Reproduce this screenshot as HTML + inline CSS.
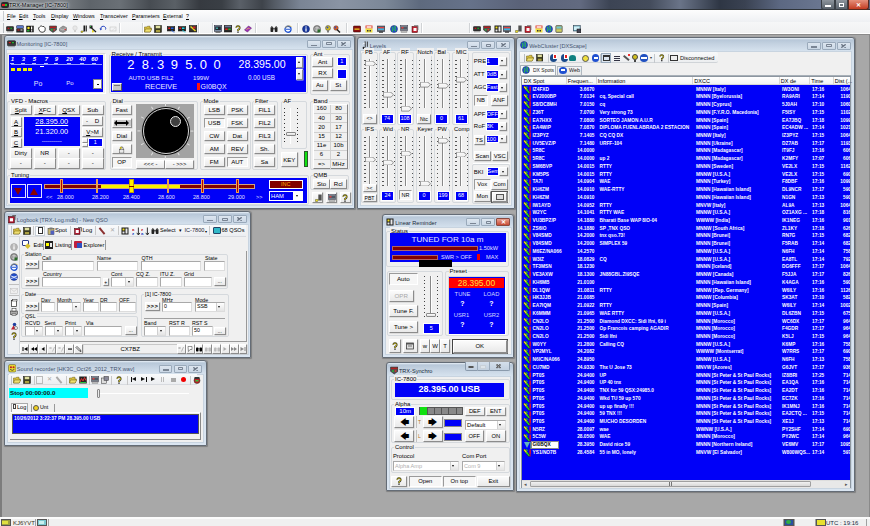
<!DOCTYPE html>
<html><head><meta charset="utf-8"><style>
html,body{margin:0;padding:0;width:870px;height:526px;overflow:hidden;background:#a8a8a8}
div{position:absolute;box-sizing:border-box}
.t{font-family:"Liberation Sans",sans-serif;white-space:nowrap;color:#000}
u{text-decoration:underline;text-decoration-thickness:0.5px;text-underline-offset:0.6px}
</style></head><body>
<div style="left:0px;top:0px;width:870px;height:526px;background:#a8a8a8;"></div>
<div style="left:0px;top:34px;width:1.8px;height:484px;background:#7c7c7c;"></div>
<div style="left:869px;top:34px;width:1px;height:484px;background:#8a8a8a;"></div>
<div style="left:0px;top:33.8px;width:870px;height:1.4px;background:linear-gradient(#7c7c7c,#989898);"></div>
<div style="left:0px;top:0px;width:870px;height:10px;background:linear-gradient(90deg,#868b90 0px,#7c8186 60px,#5e646a 90px,#6a7076 120px,#474c52 150px,#5a6066 175px,#363a40 200px,#3a3f45 222px,#5a6068 240px,#3e434a 262px,#555c66 275px,#7a8494 300px,#8a94a4 340px,#7c8898 385px,#5e6a7e 420px,#66728a 470px,#5a6278 520px,#626a80 580px,#3c4454 610px,#444c5c 650px,#6a7488 680px,#2e3644 720px,#3a4252 745px,#5c6882 780px,#6a7690 820px,#5a6680 870px);"></div>
<div style="left:0px;top:9px;width:870px;height:1px;background:#2e3338;"></div>
<div class="t" style="left:9px;top:0.5px;height:9px;line-height:9px;font-size:5.5px;color:#000;text-shadow:0 0 2px #f0f4f8,0 0 3px #e8ecf0,0 0 5px #c8d0d8">TRX-Manager [IC-7800]</div>
<div style="left:1px;top:2px;width:7.5px;height:6px;background:#2a2a2a;border-radius:2px;"></div>
<div style="left:2px;top:4px;width:2.5px;height:2px;background:#e02020;"></div>
<div style="left:4.5px;top:4px;width:2.5px;height:2px;background:#20c020;"></div>
<div style="left:821px;top:0px;width:14px;height:9.5px;background:linear-gradient(#8d949c,#5a636c);border:1px solid #3a3f45;border-top:none;border-radius:0 0 0 3px;box-sizing:border-box;"></div>
<div style="left:825px;top:5px;width:6px;height:1.5px;background:#fff;"></div>
<div style="left:835px;top:0px;width:13px;height:9.5px;background:linear-gradient(#8d949c,#5a636c);border:1px solid #3a3f45;border-top:none;box-sizing:border-box;"></div>
<div style="left:838.5px;top:3px;width:5px;height:4px;border:1px solid #fff;border-top-width:1.5px;box-sizing:border-box;"></div>
<div style="left:848px;top:0px;width:21px;height:9.5px;background:linear-gradient(#e5907c,#c43c22);border:1px solid #5a2a20;border-top:none;border-radius:0 0 3px 0;box-sizing:border-box;"></div>
<div class="t" style="left:848px;top:-0.5px;width:21px;height:10px;line-height:10px;text-align:center;font-size:6px;color:#fff;font-weight:bold;">✕</div>
<div style="left:0px;top:10px;width:870px;height:12px;background:linear-gradient(#fdfdfd,#eef0f3);"></div>
<div style="left:0px;top:21.5px;width:870px;height:1px;background:#d6dbe0;"></div>
<div style="left:2.5px;top:11px;width:1px;height:10px;background:#c8ccd0;"></div>
<div class="t" style="left:7px;top:11px;width:60px;height:11px;line-height:11px;text-align:left;font-size:5.35px;color:#000;white-space:nowrap;"><u>F</u>ile</div>
<div class="t" style="left:19px;top:11px;width:60px;height:11px;line-height:11px;text-align:left;font-size:5.35px;color:#000;white-space:nowrap;"><u>E</u>dit</div>
<div class="t" style="left:33px;top:11px;width:60px;height:11px;line-height:11px;text-align:left;font-size:5.35px;color:#000;white-space:nowrap;"><u>T</u>ools</div>
<div class="t" style="left:51px;top:11px;width:60px;height:11px;line-height:11px;text-align:left;font-size:5.35px;color:#000;white-space:nowrap;"><u>D</u>isplay</div>
<div class="t" style="left:73px;top:11px;width:60px;height:11px;line-height:11px;text-align:left;font-size:5.35px;color:#000;white-space:nowrap;"><u>W</u>indows</div>
<div class="t" style="left:100px;top:11px;width:60px;height:11px;line-height:11px;text-align:left;font-size:5.35px;color:#000;white-space:nowrap;"><u>T</u>ransceiver</div>
<div class="t" style="left:132px;top:11px;width:60px;height:11px;line-height:11px;text-align:left;font-size:5.35px;color:#000;white-space:nowrap;"><u>P</u>arameters</div>
<div class="t" style="left:163px;top:11px;width:60px;height:11px;line-height:11px;text-align:left;font-size:5.35px;color:#000;white-space:nowrap;"><u>E</u>xternal</div>
<div class="t" style="left:186px;top:11px;width:60px;height:11px;line-height:11px;text-align:left;font-size:5.35px;color:#000;white-space:nowrap;"><u>?</u></div>
<div style="left:0px;top:22px;width:870px;height:11px;background:linear-gradient(#f6f7f8,#f0f1f2);"></div>
<div style="left:0px;top:32.8px;width:870px;height:1px;background:#ffffff;"></div>
<div style="left:118.5px;top:23px;width:1px;height:10px;background:#d0d3d6;"></div>
<div style="left:119.5px;top:23px;width:1px;height:10px;background:#fff;"></div>
<div style="left:141.5px;top:23px;width:1px;height:10px;background:#d0d3d6;"></div>
<div style="left:142.5px;top:23px;width:1px;height:10px;background:#fff;"></div>
<div style="left:198px;top:23px;width:1px;height:10px;background:#d0d3d6;"></div>
<div style="left:199px;top:23px;width:1px;height:10px;background:#fff;"></div>
<div style="left:211.5px;top:23px;width:1px;height:10px;background:#d0d3d6;"></div>
<div style="left:212.5px;top:23px;width:1px;height:10px;background:#fff;"></div>
<div style="left:254.5px;top:23px;width:1px;height:10px;background:#d0d3d6;"></div>
<div style="left:255.5px;top:23px;width:1px;height:10px;background:#fff;"></div>
<div style="left:296.5px;top:23px;width:1px;height:10px;background:#d0d3d6;"></div>
<div style="left:297.5px;top:23px;width:1px;height:10px;background:#fff;"></div>
<div style="left:345.5px;top:23px;width:1px;height:10px;background:#d0d3d6;"></div>
<div style="left:346.5px;top:23px;width:1px;height:10px;background:#fff;"></div>
<div style="left:420.5px;top:23px;width:1px;height:10px;background:#d0d3d6;"></div>
<div style="left:421.5px;top:23px;width:1px;height:10px;background:#fff;"></div>
<div style="left:469px;top:23px;width:1px;height:10px;background:#d0d3d6;"></div>
<div style="left:470px;top:23px;width:1px;height:10px;background:#fff;"></div>
<div style="left:3px;top:23px;width:1px;height:10px;background:#b8bcc0;"></div>
<svg style="position:absolute;left:6px;top:24.5px" width="8" height="8" viewBox="0 0 16 16"><rect x="0.5" y="3" width="15" height="9" rx="2" fill="#3a3a3a" stroke="#111"/><rect x="2" y="5" width="12" height="3" fill="#202020"/><rect x="3" y="5.5" width="4" height="2" fill="#e82020"/><rect x="8.5" y="5.5" width="4" height="2" fill="#20c030"/><rect x="2" y="13" width="12" height="1.5" fill="#999"/></svg>
<svg style="position:absolute;left:16px;top:24.5px" width="8" height="8" viewBox="0 0 16 16"><rect x="1" y="1" width="14" height="6" rx="1.5" fill="#5a78c8" stroke="#223"/><rect x="0.5" y="7" width="15" height="8" rx="1" fill="#2a2a2a"/><rect x="3" y="9" width="4" height="2" fill="#e82020"/><rect x="9" y="9" width="4" height="2" fill="#e0e0e0"/></svg>
<svg style="position:absolute;left:26px;top:24.5px" width="8" height="8" viewBox="0 0 16 16"><rect x="0.5" y="1.5" width="15" height="13" fill="#1a1a1a"/><circle cx="5" cy="6" r="2.5" fill="#f0e020"/><rect x="10" y="3" width="2.5" height="6" fill="#fff"/><rect x="10" y="10.5" width="2.5" height="2.5" fill="#fff"/><rect x="2" y="10" width="5" height="3" fill="#20a030"/></svg>
<svg style="position:absolute;left:38px;top:24.5px" width="8" height="8" viewBox="0 0 16 16"><path d="M3 4 L6 1.5 L9 3 L12 3 L14.5 6 L14 12 L10 14.5 L5 14 L2 10 L1 6 Z" fill="#fff" stroke="#111" stroke-width="1.5"/></svg>
<svg style="position:absolute;left:49px;top:24.5px" width="8" height="8" viewBox="0 0 16 16"><path d="M1 2 L15 2 L15 10 L8 15 L1 10 Z" fill="#505050" stroke="#222"/><rect x="2" y="3" width="12" height="3" fill="#b02020"/><rect x="4" y="8" width="3" height="3" fill="#20c030"/><rect x="9" y="8" width="3" height="3" fill="#e03030"/></svg>
<svg style="position:absolute;left:59px;top:24.5px" width="8" height="8" viewBox="0 0 16 16"><path d="M1 7 L8 2 L15 5 L15 11 L8 15 L1 12 Z" fill="#9a9a9a" stroke="#555"/><path d="M1 7 L8 10 L15 5" fill="none" stroke="#ddd"/><circle cx="12.5" cy="9" r="1.5" fill="#e03030"/></svg>
<svg style="position:absolute;left:70.5px;top:24.5px" width="8" height="8" viewBox="0 0 16 16"><circle cx="8" cy="6" r="4.5" fill="#e8e8e8" stroke="#c8c8c8"/><rect x="6" y="10" width="4" height="4" fill="#d0d0d0"/></svg>
<svg style="position:absolute;left:80px;top:24.5px" width="8" height="8" viewBox="0 0 16 16"><rect x="7" y="1" width="3" height="12" fill="#1a1a1a"/><rect x="11" y="1" width="3" height="12" fill="#444"/><path d="M2 12 L7 12 L5 15 L2 15Z" fill="#f0e020" stroke="#553"/></svg>
<svg style="position:absolute;left:89px;top:24.5px" width="8" height="8" viewBox="0 0 16 16"><rect x="1" y="1" width="6" height="6" fill="#222"/><rect x="2" y="2" width="2" height="2" fill="#20c030"/><path d="M5 6 L14 14" stroke="#222" stroke-width="2.5"/><path d="M6 9 L11 14 L6 15 Z" fill="#e8d820"/></svg>
<svg style="position:absolute;left:98.5px;top:24.5px" width="8" height="8" viewBox="0 0 16 16"><path d="M4 9 A5 4.5 0 1 1 13 9" fill="none" stroke="#2040c0" stroke-width="2"/><path d="M1 7 L6 7 L3.5 11Z" fill="#2040c0"/></svg>
<svg style="position:absolute;left:109px;top:24.5px" width="8" height="8" viewBox="0 0 16 16"><rect x="2" y="4" width="12" height="8" fill="none" stroke="#bbb"/><path d="M5 12 L12 6" stroke="#ccc"/></svg>
<svg style="position:absolute;left:144px;top:24.5px" width="8" height="8" viewBox="0 0 16 16"><path d="M1 4 L6 4 L7 2.5 L12 2.5 L12 6 L15 6 L12 14 L1 14 Z" fill="#d8c040" stroke="#6a5a10"/><path d="M3 8 L15.5 8 L12.5 14 L1 14 Z" fill="#f0e070" stroke="#6a5a10"/></svg>
<svg style="position:absolute;left:153.5px;top:24.5px" width="8" height="8" viewBox="0 0 16 16"><rect x="1" y="1" width="14" height="14" fill="#3a3a20" stroke="#111"/><rect x="3.5" y="1.5" width="9" height="5" fill="#e0e0a0"/><rect x="4" y="10" width="8" height="4.5" fill="#aaa040"/></svg>
<svg style="position:absolute;left:167px;top:24.5px" width="8" height="8" viewBox="0 0 16 16"><rect x="0.5" y="3" width="15" height="9" fill="#222" stroke="#111"/><rect x="2.5" y="5" width="4" height="3" fill="#e02020"/><rect x="8" y="5" width="5" height="3" fill="#2060e0"/><path d="M9 10 L14 15" stroke="#2060e0" stroke-width="2"/></svg>
<svg style="position:absolute;left:178px;top:24.5px" width="8" height="8" viewBox="0 0 16 16"><rect x="0.5" y="3" width="15" height="9" fill="#222" stroke="#111"/><rect x="2.5" y="5" width="4" height="3" fill="#e02020"/><rect x="8" y="5" width="5" height="3" fill="#20d0e0"/><path d="M9 10 L14 15" stroke="#20d0e0" stroke-width="2"/></svg>
<svg style="position:absolute;left:188.5px;top:24.5px" width="8" height="8" viewBox="0 0 16 16"><rect x="0.5" y="1" width="15" height="13" fill="#303030" stroke="#111"/><path d="M3 3 L13 12" stroke="#e8d020" stroke-width="3"/><rect x="8" y="3" width="5" height="4" fill="#d02020"/></svg>
<svg style="position:absolute;left:214px;top:24.5px" width="8" height="8" viewBox="0 0 16 16"><rect x="0.5" y="1" width="15" height="12" fill="#7a8aa0" stroke="#223"/><rect x="2.5" y="3" width="11" height="7" fill="#202830"/><rect x="4" y="5" width="4" height="3" fill="#40a0a0"/><rect x="3" y="13.5" width="10" height="2" fill="#555"/></svg>
<svg style="position:absolute;left:224px;top:24.5px" width="8" height="8" viewBox="0 0 16 16"><rect x="0.5" y="1" width="15" height="13" fill="#2a2a2a" stroke="#111"/><rect x="2" y="2.5" width="12" height="2" fill="#8090c0"/><rect x="2.5" y="7" width="5" height="3" fill="#e02020"/><rect x="8.5" y="7" width="5" height="3" fill="#20b030"/></svg>
<svg style="position:absolute;left:234px;top:24.5px" width="8" height="8" viewBox="0 0 16 16"><path d="M4.5 5.5 A3.5 3.5 0 1 1 10 8.5 L8 10 L8 12" fill="none" stroke="#222" stroke-width="3.2"/><path d="M4.5 5.5 A3.5 3.5 0 1 1 10 8.5 L8 10 L8 12" fill="none" stroke="#f0e020" stroke-width="1.6"/><rect x="6.5" y="13" width="3" height="2.5" fill="#222"/></svg>
<svg style="position:absolute;left:244px;top:24.5px" width="8" height="8" viewBox="0 0 16 16"><path d="M1 10 L9 2 L15 6 L7 14 Z" fill="#a030b8" stroke="#501060"/><path d="M5 9 L9 6 L11 8" fill="none" stroke="#f0e040" stroke-width="1.5"/></svg>
<svg style="position:absolute;left:270px;top:24.5px" width="8" height="8" viewBox="0 0 16 16"><rect x="1" y="4" width="5.5" height="10" rx="1.5" fill="#222"/><rect x="9.5" y="4" width="5.5" height="10" rx="1.5" fill="#222"/><rect x="6" y="6" width="4" height="3" fill="#555"/><rect x="2" y="2" width="3" height="3" fill="#777"/><rect x="11" y="2" width="3" height="3" fill="#777"/></svg>
<svg style="position:absolute;left:284px;top:24.5px" width="8" height="8" viewBox="0 0 16 16"><circle cx="8" cy="8.5" r="6" fill="#fff" stroke="#1a50d0" stroke-width="2.6"/><rect x="4" y="7.5" width="8" height="2" fill="#1a50d0"/><path d="M2 5 Q8 -1 15 3" fill="none" stroke="#e0b020" stroke-width="1.2"/></svg>
<svg style="position:absolute;left:302px;top:24.5px" width="8" height="8" viewBox="0 0 16 16"><circle cx="8" cy="8" r="7" fill="#1a3aa0" stroke="#0a1a60"/><rect x="6.8" y="6.5" width="2.4" height="6.5" fill="#fff"/><circle cx="8" cy="4" r="1.4" fill="#fff"/></svg>
<svg style="position:absolute;left:313px;top:24.5px" width="8" height="8" viewBox="0 0 16 16"><circle cx="8" cy="8" r="7" fill="#888" stroke="#333"/><path d="M1 8 L15 8 M8 1 L8 15 M3 4 Q8 7 13 4 M3 12 Q8 9 13 12" fill="none" stroke="#eee" stroke-width="1"/><rect x="9" y="9" width="6" height="6" fill="#2a6a2a"/></svg>
<svg style="position:absolute;left:323.5px;top:24.5px" width="8" height="8" viewBox="0 0 16 16"><circle cx="8" cy="6" r="5" fill="#d8c020" stroke="#444"/><circle cx="7" cy="5" r="2" fill="#3050c0"/><rect x="6.5" y="11" width="3" height="4" fill="#555"/></svg>
<svg style="position:absolute;left:333px;top:24.5px" width="8" height="8" viewBox="0 0 16 16"><circle cx="6" cy="6" r="4.5" fill="#e06020" stroke="#533"/><circle cx="5" cy="5" r="1.8" fill="#3050c0"/><path d="M8 9 L14 15" stroke="#222" stroke-width="3"/></svg>
<svg style="position:absolute;left:353px;top:24.5px" width="8" height="8" viewBox="0 0 16 16"><rect x="0.5" y="2" width="15" height="12" rx="2" fill="#8a1010" stroke="#300"/><rect x="3" y="7" width="10" height="2.5" fill="#f0d020"/></svg>
<svg style="position:absolute;left:365px;top:24.5px" width="8" height="8" viewBox="0 0 16 16"><rect x="1" y="1" width="14" height="6" fill="#e04030"/><rect x="1" y="7" width="14" height="8" fill="#f0e040"/><rect x="3" y="2.5" width="10" height="3" fill="#fff"/><rect x="4" y="10" width="3" height="3" fill="#333"/><rect x="9" y="10" width="3" height="3" fill="#333"/></svg>
<svg style="position:absolute;left:377px;top:24.5px" width="8" height="8" viewBox="0 0 16 16"><rect x="0.5" y="2" width="15" height="11" fill="#60707a" stroke="#223"/><rect x="2" y="4" width="12" height="3" fill="#e04040"/><rect x="2" y="7" width="12" height="3" fill="#40b0e0"/><rect x="4" y="13" width="8" height="2.5" fill="#333"/></svg>
<svg style="position:absolute;left:390px;top:24.5px" width="8" height="8" viewBox="0 0 16 16"><circle cx="8" cy="8" r="7" fill="#2050d0" stroke="#102060"/><path d="M4 4 Q7 6 6 9 Q4 11 5 13 M9 2 Q12 5 10 8 Q9 10 12 12" fill="none" stroke="#30c040" stroke-width="2.2"/></svg>
<svg style="position:absolute;left:400px;top:24.5px" width="8" height="8" viewBox="0 0 16 16"><rect x="0.5" y="1" width="15" height="10" fill="#9aa0a8" stroke="#334"/><rect x="2" y="3" width="12" height="6" fill="#505a66"/><rect x="3" y="4" width="4" height="3" fill="#e04040"/><rect x="2" y="12" width="12" height="3" fill="#ccc" stroke="#555" stroke-width="0.6"/></svg>
<svg style="position:absolute;left:411px;top:24.5px" width="8" height="8" viewBox="0 0 16 16"><rect x="2" y="3" width="11" height="12" fill="#c02030" stroke="#400"/><rect x="5" y="6" width="6" height="6" fill="#f8f8f8"/><path d="M6 1 L14 1 L14 10" fill="none" stroke="#777" stroke-width="1.5"/></svg>
<svg style="position:absolute;left:473px;top:24.5px" width="8" height="8" viewBox="0 0 16 16"><rect x="0.5" y="3" width="15" height="9" rx="2" fill="#3a3a3a" stroke="#111"/><rect x="2" y="5" width="12" height="3" fill="#202020"/><rect x="3" y="5.5" width="4" height="2" fill="#e82020"/><rect x="8.5" y="5.5" width="4" height="2" fill="#20c030"/><rect x="2" y="13" width="12" height="1.5" fill="#999"/></svg>
<svg style="position:absolute;left:483px;top:24.5px" width="8" height="8" viewBox="0 0 16 16"><path d="M1 2 L15 2 L15 10 L8 15 L1 10 Z" fill="#505050" stroke="#222"/><rect x="2" y="3" width="12" height="3" fill="#b02020"/><rect x="4" y="8" width="3" height="3" fill="#20c030"/><rect x="9" y="8" width="3" height="3" fill="#e03030"/></svg>
<svg style="position:absolute;left:494px;top:24.5px" width="8" height="8" viewBox="0 0 16 16"><rect x="1" y="1" width="14" height="14" fill="#1a1a1a"/><rect x="3" y="3" width="4" height="4" fill="#f0e020"/><rect x="9" y="3" width="4" height="10" fill="#e8e8e8"/><rect x="3" y="9" width="4" height="4" fill="#e8e8e8"/></svg>
<svg style="position:absolute;left:503px;top:24.5px" width="8" height="8" viewBox="0 0 16 16"><rect x="0.5" y="2" width="15" height="11" fill="#60707a" stroke="#223"/><rect x="2" y="4" width="12" height="3" fill="#e04040"/><rect x="2" y="7" width="12" height="3" fill="#40b0e0"/><rect x="4" y="13" width="8" height="2.5" fill="#333"/></svg>
<svg style="position:absolute;left:513.5px;top:24.5px" width="8" height="8" viewBox="0 0 16 16"><rect x="9" y="1" width="2.5" height="12" fill="#1a1a1a"/><rect x="12.5" y="1" width="2.5" height="12" fill="#1a1a1a"/><path d="M3 11 L9 11 L7 15 L3 15Z" fill="#f0e020" stroke="#553"/></svg>
<svg style="position:absolute;left:524px;top:24.5px" width="8" height="8" viewBox="0 0 16 16"><rect x="2" y="3" width="11" height="12" fill="#c02030" stroke="#400"/><rect x="5" y="6" width="6" height="6" fill="#f8f8f8"/><path d="M6 1 L14 1 L14 10" fill="none" stroke="#777" stroke-width="1.5"/></svg>
<svg style="position:absolute;left:535px;top:24.5px" width="8" height="8" viewBox="0 0 16 16"><rect x="1" y="1" width="14" height="6" fill="#e04030"/><rect x="1" y="7" width="14" height="8" fill="#f0e040"/><rect x="3" y="2.5" width="10" height="3" fill="#fff"/><rect x="4" y="10" width="3" height="3" fill="#333"/><rect x="9" y="10" width="3" height="3" fill="#333"/></svg>
<svg style="position:absolute;left:545px;top:24.5px" width="8" height="8" viewBox="0 0 16 16"><circle cx="8" cy="8" r="7" fill="#2050d0" stroke="#102060"/><path d="M4 4 Q7 6 6 9 Q4 11 5 13 M9 2 Q12 5 10 8 Q9 10 12 12" fill="none" stroke="#30c040" stroke-width="2.2"/></svg>
<svg style="position:absolute;left:555px;top:24.5px" width="8" height="8" viewBox="0 0 16 16"><rect x="1.5" y="1" width="13" height="14" rx="2" fill="#a0a060" stroke="#333"/><rect x="3" y="3" width="10" height="4" fill="#70c8d0"/><rect x="3" y="9" width="10" height="4" fill="#d0d060"/></svg>
<svg style="position:absolute;left:573px;top:24.5px" width="8" height="8" viewBox="0 0 16 16"><rect x="0.5" y="1" width="14" height="11" fill="#70a8b8" stroke="#234"/><rect x="2" y="3" width="11" height="7" fill="#d0f0f8"/><rect x="8" y="8" width="7.5" height="7.5" fill="#445" stroke="#111"/></svg>
<div style="left:0px;top:516.7px;width:870px;height:2px;background:#fbfbfb;"></div>
<div style="left:0px;top:518.5px;width:870px;height:7.5px;background:#f0f0f0;"></div>
<div style="left:0.5px;top:519px;width:10px;height:7px;border:1px solid #555;background:#a0a040;"></div>
<div style="left:2px;top:520.5px;width:6px;height:3px;background:#e0e040;"></div>
<div class="t" style="left:13px;top:518.5px;width:30px;height:8px;line-height:8px;text-align:left;font-size:6px;color:#3a3020;">KJ6YVT</div>
<div style="left:34.5px;top:519px;width:0.8px;height:7px;background:#a0a0a0;"></div>
<div style="left:37px;top:519px;width:10px;height:7px;border:1px solid #555;background:#7cc8d0;"></div>
<div style="left:39px;top:520.5px;width:5px;height:3px;background:#c8f0f0;"></div>
<div style="left:48px;top:519px;width:0.8px;height:7px;background:#a0a0a0;"></div>
<div style="left:783px;top:519px;width:0.8px;height:7px;background:#a0a0a0;"></div>
<div style="left:784px;top:519px;width:10px;height:7px;border:0.8px solid #555;background:#2a50a0;"></div>
<div style="left:786px;top:520px;width:5px;height:4px;background:#30b040;border-radius:50%;"></div>
<div style="left:794px;top:519px;width:0.8px;height:7px;background:#a0a0a0;"></div>
<div style="left:815px;top:519px;width:0.8px;height:7px;background:#a0a0a0;"></div>
<div style="left:816px;top:519px;width:9.5px;height:7px;border:0.8px solid #555;background:#e8e030;"></div>
<div class="t" style="left:826px;top:518.5px;width:40px;height:8px;line-height:8px;text-align:left;font-size:6px;color:#202a40;">UTC : 19:16</div>
<div style="left:866px;top:519px;width:0.8px;height:7px;background:#a0a0a0;"></div>
<div style="left:3.7px;top:35.3px;width:351.5px;height:173.7px;border:0.8px solid #646c76;border-radius:3px 3px 1px 1px;background:linear-gradient(#dce6f0 0px,#dce6f0 0.8px,#b7c7d8 1.8px,#c4d2e1 6px,#d6e2ee 13px,#dae5f1 100%);box-shadow:0.5px 0.5px 1px rgba(0,0,0,.25);"></div>
<div style="left:6.300000000000001px;top:48.699999999999996px;width:346.3px;height:157.7px;background:#f0f0f0;border:0.5px solid #c8d4e0;"></div>
<svg style="position:absolute;left:7.2px;top:39.3px" width="9" height="9" viewBox="0 0 16 16"><rect x="0.5" y="3" width="15" height="9" rx="2" fill="#3a3a3a" stroke="#111"/><rect x="2" y="5" width="12" height="3" fill="#202020"/><rect x="3" y="5.5" width="4" height="2" fill="#e82020"/><rect x="8.5" y="5.5" width="4" height="2" fill="#20c030"/><rect x="2" y="13" width="12" height="1.5" fill="#999"/></svg>
<div class="t" style="left:16.5px;top:39.9px;height:9px;line-height:9px;font-size:5.6px;color:#465470;white-space:nowrap">Monitoring [IC-7800]</div>
<div style="left:307.2px;top:39.599999999999994px;width:13.8px;height:8px;background:linear-gradient(#dde6f0,#cad7e5);border:0.8px solid #9aaabb;border-radius:1px;"></div>
<div style="left:311.2px;top:44.5px;width:6px;height:1.2px;background:#7a8594;"></div>
<div style="left:322.09999999999997px;top:39.599999999999994px;width:13.8px;height:8px;background:linear-gradient(#dde6f0,#cad7e5);border:0.8px solid #9aaabb;border-radius:1px;"></div>
<div style="left:326.4px;top:41.9px;width:5.5px;height:3.2px;border:1px solid #7a8594;border-radius:0.8px;"></div>
<div style="left:337.0px;top:39.599999999999994px;width:13.8px;height:8px;background:linear-gradient(#dde6f0,#cad7e5);border:0.8px solid #9aaabb;border-radius:1px;"></div>
<svg style="position:absolute;left:341.4px;top:41.599999999999994px" width="5" height="4" viewBox="0 0 5 4"><path d="M0.3 0.3 L4.7 3.7 M4.7 0.3 L0.3 3.7" stroke="#6a7584" stroke-width="1.3"/></svg>
<div style="left:7px;top:53px;width:98.5px;height:41px;border:1px solid #d8d8d8;border-right-color:#fff;border-bottom-color:#fff;"></div>
<div style="left:9px;top:55px;width:94px;height:37px;background:#0000f8;"></div>
<div class="t" style="left:8px;top:55.5px;width:9px;height:7px;line-height:7px;text-align:center;font-size:6px;color:#fff;font-style:italic;font-weight:bold;">1</div>
<div style="left:10px;top:63px;width:4px;height:1.2px;background:#b0b8ff;"></div>
<div class="t" style="left:19px;top:55.5px;width:9px;height:7px;line-height:7px;text-align:center;font-size:6px;color:#fff;font-style:italic;font-weight:bold;">3</div>
<div style="left:21px;top:63px;width:4px;height:1.2px;background:#b0b8ff;"></div>
<div class="t" style="left:30px;top:55.5px;width:9px;height:7px;line-height:7px;text-align:center;font-size:6px;color:#fff;font-style:italic;font-weight:bold;">5</div>
<div style="left:32px;top:63px;width:4px;height:1.2px;background:#b0b8ff;"></div>
<div class="t" style="left:42px;top:55.5px;width:9px;height:7px;line-height:7px;text-align:center;font-size:6px;color:#fff;font-style:italic;font-weight:bold;">7</div>
<div style="left:44px;top:63px;width:4px;height:1.2px;background:#b0b8ff;"></div>
<div class="t" style="left:52px;top:55.5px;width:9px;height:7px;line-height:7px;text-align:center;font-size:6px;color:#fff;font-style:italic;font-weight:bold;">9</div>
<div style="left:54px;top:63px;width:4px;height:1.2px;background:#b0b8ff;"></div>
<div class="t" style="left:65px;top:55.5px;width:9px;height:7px;line-height:7px;text-align:center;font-size:6px;color:#fff;font-style:italic;font-weight:bold;">20</div>
<div style="left:67px;top:63px;width:4px;height:1.2px;background:#b0b8ff;"></div>
<div class="t" style="left:78px;top:55.5px;width:9px;height:7px;line-height:7px;text-align:center;font-size:6px;color:#fff;font-style:italic;font-weight:bold;">40</div>
<div style="left:80px;top:63px;width:4px;height:1.2px;background:#b0b8ff;"></div>
<div class="t" style="left:90px;top:55.5px;width:9px;height:7px;line-height:7px;text-align:center;font-size:6px;color:#fff;font-style:italic;font-weight:bold;">60</div>
<div style="left:92px;top:63px;width:4px;height:1.2px;background:#b0b8ff;"></div>
<div style="left:11px;top:64px;width:91px;height:0.6px;background:#9098ff;"></div>
<div style="left:40px;top:65.5px;width:4px;height:1px;background:#fff;"></div>
<div style="left:11px;top:68px;width:4px;height:3px;background:#f0f000;"></div>
<div style="left:17px;top:68px;width:4px;height:3px;background:#f0f000;"></div>
<div style="left:22.5px;top:68px;width:4px;height:3px;background:#f0f000;"></div>
<div style="left:28px;top:68px;width:4px;height:3px;background:#f0f000;"></div>
<div class="t" style="left:30px;top:79px;width:16px;height:9px;line-height:9px;text-align:center;font-size:7px;color:#e0e0ff;">Po</div>
<div class="t" style="left:63px;top:79px;width:14px;height:9px;line-height:9px;text-align:center;font-size:6px;color:#e0e0ff;">Po</div>
<div style="left:93px;top:79px;width:9px;height:10px;background:#fff;border:1px solid #888;"></div>
<div style="left:96.5px;top:84px;width:2.5px;height:1px;background:#111;"></div>
<div style="left:108.5px;top:54px;width:199px;height:40px;border:1px solid #d5d9dd;border-radius:2px;box-sizing:border-box;"></div>
<div class="t" style="left:110.5px;top:50px;height:8px;line-height:8px;padding:0 1px;background:#f0f0f0;font-size:6.1px;color:#000">Receive / Transmit</div>
<div style="left:111px;top:56px;width:195px;height:35.5px;background:#0000f8;"></div>
<div class="t" style="left:127.30000000000001px;top:56.5px;width:10px;height:16px;line-height:16px;text-align:left;font-size:13px;color:#fff;">2</div>
<div class="t" style="left:141.8px;top:56.5px;width:10px;height:16px;line-height:16px;text-align:left;font-size:13px;color:#fff;">8</div>
<div class="t" style="left:157.0px;top:56.5px;width:10px;height:16px;line-height:16px;text-align:left;font-size:13px;color:#fff;">3</div>
<div class="t" style="left:170.8px;top:56.5px;width:10px;height:16px;line-height:16px;text-align:left;font-size:13px;color:#fff;">9</div>
<div class="t" style="left:185.3px;top:56.5px;width:10px;height:16px;line-height:16px;text-align:left;font-size:13px;color:#fff;">5</div>
<div class="t" style="left:199.70000000000002px;top:56.5px;width:10px;height:16px;line-height:16px;text-align:left;font-size:13px;color:#fff;">0</div>
<div class="t" style="left:213.5px;top:56.5px;width:10px;height:16px;line-height:16px;text-align:left;font-size:13px;color:#fff;">0</div>
<div class="t" style="left:150.3px;top:56.5px;width:5px;height:16px;line-height:16px;text-align:left;font-size:13px;color:#fff;">.</div>
<div class="t" style="left:193.0px;top:56.5px;width:5px;height:16px;line-height:16px;text-align:left;font-size:13px;color:#fff;">.</div>
<div class="t" style="left:238.5px;top:58.5px;width:50px;height:11px;line-height:11px;text-align:left;font-size:10.6px;color:#fff;">28.395.00</div>
<div class="t" style="left:128.5px;top:74px;width:50px;height:7px;line-height:7px;text-align:left;font-size:6.1px;color:#e8e8ff;">AUTO USB FIL2</div>
<div class="t" style="left:193px;top:74px;width:20px;height:7px;line-height:7px;text-align:left;font-size:6.1px;color:#e8e8ff;">199W</div>
<div class="t" style="left:248px;top:73.5px;width:30px;height:7px;line-height:7px;text-align:left;font-size:6.3px;color:#e8e8ff;">0.00 USB</div>
<div style="left:112px;top:82.5px;width:10px;height:8px;background:#c8c8c8;border:1px solid #fff;border-right-color:#555;border-bottom-color:#555;"></div>
<div style="left:114px;top:84.5px;width:6px;height:1px;background:#777;"></div>
<div class="t" style="left:145px;top:82.5px;width:40px;height:8px;line-height:8px;text-align:left;font-size:7.3px;color:#f0f0ff;">RECEIVE</div>
<div style="left:197px;top:83px;width:2.5px;height:6.5px;background:#ff1010;"></div>
<div class="t" style="left:200.5px;top:82.5px;width:30px;height:8px;line-height:8px;text-align:left;font-size:7px;color:#f0f0ff;">GI0BQX</div>
<div style="left:296px;top:57px;width:7px;height:11px;background:linear-gradient(#fbfbfb,#e9e9e9);border-top:1px solid #fff;border-left:1px solid #fff;border-right:1px solid #8c8c8c;border-bottom:1px solid #8c8c8c;box-shadow:0.5px 0.5px 0 #c8c8c8;box-sizing:border-box;"></div>
<div style="left:298px;top:61px;width:0;height:0;border-left:1.5px solid transparent;border-right:1.5px solid transparent;border-bottom:2px solid #111"></div>
<div style="left:296px;top:68.5px;width:7px;height:11px;background:linear-gradient(#fbfbfb,#e9e9e9);border-top:1px solid #fff;border-left:1px solid #fff;border-right:1px solid #8c8c8c;border-bottom:1px solid #8c8c8c;box-shadow:0.5px 0.5px 0 #c8c8c8;box-sizing:border-box;"></div>
<div style="left:298px;top:73px;width:0;height:0;border-left:1.5px solid transparent;border-right:1.5px solid transparent;border-top:2px solid #111"></div>
<div style="left:309.5px;top:53.5px;width:40px;height:41px;border:1px solid #d5d9dd;border-radius:2px;box-sizing:border-box;"></div>
<div class="t" style="left:312.5px;top:49.5px;height:8px;line-height:8px;padding:0 1px;background:#f0f0f0;font-size:6px;color:#000">Ant</div>
<div style="left:312px;top:57px;width:21px;height:10px;background:linear-gradient(#fbfbfb,#e9e9e9);border-top:1px solid #fff;border-left:1px solid #fff;border-right:1px solid #8c8c8c;border-bottom:1px solid #8c8c8c;box-shadow:0.5px 0.5px 0 #c8c8c8;box-sizing:border-box;"></div>
<div class="t" style="left:312px;top:57.4px;width:21px;height:10px;line-height:10px;text-align:center;font-size:6.1px;color:#000;">Ant</div>
<div style="left:337px;top:57px;width:9.5px;height:9px;background:#0000f8;border:1px solid #fff;"></div>
<div class="t" style="left:337px;top:57px;width:9.5px;height:9px;line-height:9px;text-align:center;font-size:5.5px;color:#fff;">1</div>
<div style="left:312px;top:68px;width:21px;height:10px;background:linear-gradient(#fbfbfb,#e9e9e9);border-top:1px solid #fff;border-left:1px solid #fff;border-right:1px solid #8c8c8c;border-bottom:1px solid #8c8c8c;box-shadow:0.5px 0.5px 0 #c8c8c8;box-sizing:border-box;"></div>
<div class="t" style="left:312px;top:68.4px;width:21px;height:10px;line-height:10px;text-align:center;font-size:6.1px;color:#000;">RX</div>
<div style="left:337px;top:69px;width:9.5px;height:9.5px;background:#0000f8;border:1px solid #fff;"></div>
<div style="left:312px;top:80px;width:15.5px;height:10.5px;background:linear-gradient(#fbfbfb,#e9e9e9);border-top:1px solid #fff;border-left:1px solid #fff;border-right:1px solid #8c8c8c;border-bottom:1px solid #8c8c8c;box-shadow:0.5px 0.5px 0 #c8c8c8;box-sizing:border-box;"></div>
<div class="t" style="left:312px;top:80.4px;width:15.5px;height:10.5px;line-height:10.5px;text-align:center;font-size:6.1px;color:#000;">Au</div>
<div style="left:330px;top:80px;width:16.5px;height:10.5px;background:linear-gradient(#fbfbfb,#e9e9e9);border-top:1px solid #fff;border-left:1px solid #fff;border-right:1px solid #8c8c8c;border-bottom:1px solid #8c8c8c;box-shadow:0.5px 0.5px 0 #c8c8c8;box-sizing:border-box;"></div>
<div class="t" style="left:330px;top:80.4px;width:16.5px;height:10.5px;line-height:10.5px;text-align:center;font-size:6.1px;color:#000;">St</div>
<div style="left:7px;top:101px;width:99px;height:69px;border:1px solid #d5d9dd;border-radius:2px;box-sizing:border-box;"></div>
<div class="t" style="left:10px;top:97px;height:8px;line-height:8px;padding:0 1px;background:#f0f0f0;font-size:6px;color:#000">VFD - Macros</div>
<div style="left:10px;top:104.5px;width:21.5px;height:10px;background:linear-gradient(#fbfbfb,#e9e9e9);border-top:1px solid #fff;border-left:1px solid #fff;border-right:1px solid #8c8c8c;border-bottom:1px solid #8c8c8c;box-shadow:0.5px 0.5px 0 #c8c8c8;box-sizing:border-box;"></div>
<div class="t" style="left:10px;top:104.9px;width:21.5px;height:10px;line-height:10px;text-align:center;font-size:6.1px;color:#000;"><u>S</u>plit</div>
<div style="left:34px;top:104.5px;width:21.5px;height:10px;background:linear-gradient(#fbfbfb,#e9e9e9);border-top:1px solid #fff;border-left:1px solid #fff;border-right:1px solid #8c8c8c;border-bottom:1px solid #8c8c8c;box-shadow:0.5px 0.5px 0 #c8c8c8;box-sizing:border-box;"></div>
<div class="t" style="left:34px;top:104.9px;width:21.5px;height:10px;line-height:10px;text-align:center;font-size:6.1px;color:#000;"><u>X</u>FC</div>
<div style="left:58px;top:104.5px;width:21.5px;height:10px;background:linear-gradient(#fbfbfb,#e9e9e9);border-top:1px solid #fff;border-left:1px solid #fff;border-right:1px solid #8c8c8c;border-bottom:1px solid #8c8c8c;box-shadow:0.5px 0.5px 0 #c8c8c8;box-sizing:border-box;"></div>
<div class="t" style="left:58px;top:104.9px;width:21.5px;height:10px;line-height:10px;text-align:center;font-size:6.1px;color:#000;"><u>Q</u>SX</div>
<div style="left:82px;top:104.5px;width:21.5px;height:10px;background:linear-gradient(#fbfbfb,#e9e9e9);border-top:1px solid #fff;border-left:1px solid #fff;border-right:1px solid #8c8c8c;border-bottom:1px solid #8c8c8c;box-shadow:0.5px 0.5px 0 #c8c8c8;box-sizing:border-box;"></div>
<div class="t" style="left:82px;top:104.9px;width:21.5px;height:10px;line-height:10px;text-align:center;font-size:6.1px;color:#000;">Sub</div>
<div style="left:10.5px;top:116.5px;width:11px;height:10px;background:linear-gradient(#fbfbfb,#e9e9e9);border-top:1px solid #fff;border-left:1px solid #fff;border-right:1px solid #8c8c8c;border-bottom:1px solid #8c8c8c;box-shadow:0.5px 0.5px 0 #c8c8c8;box-sizing:border-box;"></div>
<div class="t" style="left:10.5px;top:116.9px;width:11px;height:10px;line-height:10px;text-align:center;font-size:6.1px;color:#000;"><u>A</u></div>
<div style="left:10.5px;top:127px;width:11px;height:10px;background:linear-gradient(#fbfbfb,#e9e9e9);border-top:1px solid #fff;border-left:1px solid #fff;border-right:1px solid #8c8c8c;border-bottom:1px solid #8c8c8c;box-shadow:0.5px 0.5px 0 #c8c8c8;box-sizing:border-box;"></div>
<div class="t" style="left:10.5px;top:127.4px;width:11px;height:10px;line-height:10px;text-align:center;font-size:6.1px;color:#000;"><u>B</u></div>
<div style="left:10.5px;top:138px;width:11px;height:10px;background:linear-gradient(#fbfbfb,#e9e9e9);border-top:1px solid #fff;border-left:1px solid #fff;border-right:1px solid #8c8c8c;border-bottom:1px solid #8c8c8c;box-shadow:0.5px 0.5px 0 #c8c8c8;box-sizing:border-box;"></div>
<div class="t" style="left:10.5px;top:138.4px;width:11px;height:10px;line-height:10px;text-align:center;font-size:6.1px;color:#000;"><u>C</u></div>
<div style="left:24px;top:116.5px;width:55.5px;height:29.5px;background:#0000f8;"></div>
<div class="t" style="left:24px;top:117px;width:55.5px;height:9px;line-height:9px;text-align:center;font-size:7.4px;color:#fff;"><u>28.395.00</u></div>
<div class="t" style="left:24px;top:127px;width:55.5px;height:9px;line-height:9px;text-align:center;font-size:7.4px;color:#fff;">21.320.00</div>
<div class="t" style="left:24px;top:136.5px;width:55.5px;height:9px;line-height:9px;text-align:center;font-size:6px;color:#fff;">----------</div>
<div style="left:82px;top:116px;width:21px;height:10px;background:linear-gradient(#fbfbfb,#e9e9e9);border-top:1px solid #fff;border-left:1px solid #fff;border-right:1px solid #8c8c8c;border-bottom:1px solid #8c8c8c;box-shadow:0.5px 0.5px 0 #c8c8c8;box-sizing:border-box;"></div>
<div class="t" style="left:82px;top:116.4px;width:21px;height:10px;line-height:10px;text-align:center;font-size:6.1px;color:#000;">-&nbsp;&nbsp;&nbsp;&nbsp;D</div>
<div style="left:82px;top:126.5px;width:21px;height:10.5px;background:linear-gradient(#fbfbfb,#e9e9e9);border-top:1px solid #fff;border-left:1px solid #fff;border-right:1px solid #8c8c8c;border-bottom:1px solid #8c8c8c;box-shadow:0.5px 0.5px 0 #c8c8c8;box-sizing:border-box;"></div>
<div class="t" style="left:82px;top:126.9px;width:21px;height:10.5px;line-height:10.5px;text-align:center;font-size:6.1px;color:#000;"><u>V</u>&gt;M</div>
<div style="left:82px;top:138px;width:6px;height:4.5px;background:linear-gradient(#fbfbfb,#e9e9e9);border-top:1px solid #fff;border-left:1px solid #fff;border-right:1px solid #8c8c8c;border-bottom:1px solid #8c8c8c;box-shadow:0.5px 0.5px 0 #c8c8c8;box-sizing:border-box;"></div>
<div style="left:82px;top:142.5px;width:6px;height:4.5px;background:linear-gradient(#fbfbfb,#e9e9e9);border-top:1px solid #fff;border-left:1px solid #fff;border-right:1px solid #8c8c8c;border-bottom:1px solid #8c8c8c;box-shadow:0.5px 0.5px 0 #c8c8c8;box-sizing:border-box;"></div>
<div style="left:88px;top:137.5px;width:14.5px;height:9.5px;background:#0000f8;border:1px solid #fff;"></div>
<div class="t" style="left:88px;top:137.5px;width:14.5px;height:9.5px;line-height:9.5px;text-align:center;font-size:5.5px;color:#fff;">1</div>
<div style="left:10px;top:148px;width:21.5px;height:10.5px;background:linear-gradient(#fbfbfb,#e9e9e9);border-top:1px solid #fff;border-left:1px solid #fff;border-right:1px solid #8c8c8c;border-bottom:1px solid #8c8c8c;box-shadow:0.5px 0.5px 0 #c8c8c8;box-sizing:border-box;"></div>
<div class="t" style="left:10px;top:148.4px;width:21.5px;height:10.5px;line-height:10.5px;text-align:center;font-size:6.1px;color:#000;">Dirty</div>
<div style="left:10px;top:158px;width:21.5px;height:10.5px;background:linear-gradient(#fbfbfb,#e9e9e9);border-top:1px solid #fff;border-left:1px solid #fff;border-right:1px solid #8c8c8c;border-bottom:1px solid #8c8c8c;box-shadow:0.5px 0.5px 0 #c8c8c8;box-sizing:border-box;"></div>
<div class="t" style="left:10px;top:158.4px;width:21.5px;height:10.5px;line-height:10.5px;text-align:center;font-size:6.1px;color:#000;">-</div>
<div style="left:34px;top:148px;width:21.5px;height:10.5px;background:linear-gradient(#fbfbfb,#e9e9e9);border-top:1px solid #fff;border-left:1px solid #fff;border-right:1px solid #8c8c8c;border-bottom:1px solid #8c8c8c;box-shadow:0.5px 0.5px 0 #c8c8c8;box-sizing:border-box;"></div>
<div class="t" style="left:34px;top:148.4px;width:21.5px;height:10.5px;line-height:10.5px;text-align:center;font-size:6.1px;color:#000;">NR</div>
<div style="left:34px;top:158px;width:21.5px;height:10.5px;background:linear-gradient(#fbfbfb,#e9e9e9);border-top:1px solid #fff;border-left:1px solid #fff;border-right:1px solid #8c8c8c;border-bottom:1px solid #8c8c8c;box-shadow:0.5px 0.5px 0 #c8c8c8;box-sizing:border-box;"></div>
<div class="t" style="left:34px;top:158.4px;width:21.5px;height:10.5px;line-height:10.5px;text-align:center;font-size:6.1px;color:#000;">-</div>
<div style="left:58px;top:148px;width:21.5px;height:10.5px;background:linear-gradient(#fbfbfb,#e9e9e9);border-top:1px solid #fff;border-left:1px solid #fff;border-right:1px solid #8c8c8c;border-bottom:1px solid #8c8c8c;box-shadow:0.5px 0.5px 0 #c8c8c8;box-sizing:border-box;"></div>
<div class="t" style="left:58px;top:148.4px;width:21.5px;height:10.5px;line-height:10.5px;text-align:center;font-size:6.1px;color:#000;">-</div>
<div style="left:58px;top:158px;width:21.5px;height:10.5px;background:linear-gradient(#fbfbfb,#e9e9e9);border-top:1px solid #fff;border-left:1px solid #fff;border-right:1px solid #8c8c8c;border-bottom:1px solid #8c8c8c;box-shadow:0.5px 0.5px 0 #c8c8c8;box-sizing:border-box;"></div>
<div class="t" style="left:58px;top:158.4px;width:21.5px;height:10.5px;line-height:10.5px;text-align:center;font-size:6.1px;color:#000;">-</div>
<div style="left:82px;top:148px;width:21.5px;height:10.5px;background:linear-gradient(#fbfbfb,#e9e9e9);border-top:1px solid #fff;border-left:1px solid #fff;border-right:1px solid #8c8c8c;border-bottom:1px solid #8c8c8c;box-shadow:0.5px 0.5px 0 #c8c8c8;box-sizing:border-box;"></div>
<div class="t" style="left:82px;top:148.4px;width:21.5px;height:10.5px;line-height:10.5px;text-align:center;font-size:6.1px;color:#000;">-</div>
<div style="left:82px;top:158px;width:21.5px;height:10.5px;background:linear-gradient(#fbfbfb,#e9e9e9);border-top:1px solid #fff;border-left:1px solid #fff;border-right:1px solid #8c8c8c;border-bottom:1px solid #8c8c8c;box-shadow:0.5px 0.5px 0 #c8c8c8;box-sizing:border-box;"></div>
<div class="t" style="left:82px;top:158.4px;width:21.5px;height:10.5px;line-height:10.5px;text-align:center;font-size:6.1px;color:#000;">-</div>
<div style="left:109.5px;top:101px;width:88.5px;height:69px;border:1px solid #d5d9dd;border-radius:2px;box-sizing:border-box;"></div>
<div class="t" style="left:111.5px;top:97px;height:8px;line-height:8px;padding:0 1px;background:#f0f0f0;font-size:6px;color:#000">Dial</div>
<div style="left:112px;top:104.5px;width:19.5px;height:10px;background:linear-gradient(#fbfbfb,#e9e9e9);border-top:1px solid #fff;border-left:1px solid #fff;border-right:1px solid #8c8c8c;border-bottom:1px solid #8c8c8c;box-shadow:0.5px 0.5px 0 #c8c8c8;box-sizing:border-box;"></div>
<div class="t" style="left:112px;top:104.9px;width:19.5px;height:10px;line-height:10px;text-align:center;font-size:6.1px;color:#000;">Fast</div>
<div style="left:112px;top:118px;width:19.5px;height:10px;background:linear-gradient(#fbfbfb,#e9e9e9);border-top:1px solid #fff;border-left:1px solid #fff;border-right:1px solid #8c8c8c;border-bottom:1px solid #8c8c8c;box-shadow:0.5px 0.5px 0 #c8c8c8;box-sizing:border-box;"></div>
<div style="left:112px;top:131px;width:19.5px;height:10px;background:linear-gradient(#fbfbfb,#e9e9e9);border-top:1px solid #fff;border-left:1px solid #fff;border-right:1px solid #8c8c8c;border-bottom:1px solid #8c8c8c;box-shadow:0.5px 0.5px 0 #c8c8c8;box-sizing:border-box;"></div>
<div class="t" style="left:112px;top:131.4px;width:19.5px;height:10px;line-height:10px;text-align:center;font-size:6.1px;color:#000;">Dial</div>
<div style="left:112px;top:144px;width:19.5px;height:10px;background:linear-gradient(#fbfbfb,#e9e9e9);border-top:1px solid #fff;border-left:1px solid #fff;border-right:1px solid #8c8c8c;border-bottom:1px solid #8c8c8c;box-shadow:0.5px 0.5px 0 #c8c8c8;box-sizing:border-box;"></div>
<div style="left:113.5px;top:120px;width:17px;height:6px;background:#c8c8c8;"></div>
<div style="left:115.5px;top:122.2px;width:12px;height:1.8px;background:#000;"></div>
<div style="left:113.8px;top:120px;width:0;height:0;border-top:3.1px solid transparent;border-bottom:3.1px solid transparent;border-right:3.6px solid #000"></div>
<div style="left:126.4px;top:120px;width:0;height:0;border-top:3.1px solid transparent;border-bottom:3.1px solid transparent;border-left:3.6px solid #000"></div>
<svg style="position:absolute;left:117.8px;top:145.5px" width="7.5" height="7.5" viewBox="0 0 16 16"><path d="M5 8 V5 A3 3 0 0 1 11 5 V8" fill="none" stroke="#444" stroke-width="1.6"/><rect x="3.5" y="8" width="9" height="7" fill="#e8e8e8" stroke="#444"/><circle cx="6" cy="4" r="2.2" fill="#c0b020"/></svg>
<div style="left:112px;top:157px;width:19.5px;height:10.5px;background:#f6f6f6;border-top:1px solid #9a9a9a;border-left:1px solid #9a9a9a;border-right:1px solid #fff;border-bottom:1px solid #fff;box-sizing:border-box;"></div>
<div class="t" style="left:112px;top:157px;width:19.5px;height:10.5px;line-height:10.5px;text-align:center;font-size:6.1px;color:#000;">OP</div>
<div style="left:136px;top:103.5px;width:58px;height:54px;background:#a3a3a3;"></div>
<div style="left:165.4px;top:103.30000000000001px;width:0.8px;height:2.5px;background:#e0e0e0;transform-origin:0.4px 28px;transform:rotate(0deg)"></div>
<div style="left:165.4px;top:103.30000000000001px;width:0.8px;height:2.5px;background:#e0e0e0;transform-origin:0.4px 28px;transform:rotate(30deg)"></div>
<div style="left:165.4px;top:103.30000000000001px;width:0.8px;height:2.5px;background:#e0e0e0;transform-origin:0.4px 28px;transform:rotate(60deg)"></div>
<div style="left:165.4px;top:103.30000000000001px;width:0.8px;height:2.5px;background:#e0e0e0;transform-origin:0.4px 28px;transform:rotate(90deg)"></div>
<div style="left:165.4px;top:103.30000000000001px;width:0.8px;height:2.5px;background:#e0e0e0;transform-origin:0.4px 28px;transform:rotate(120deg)"></div>
<div style="left:165.4px;top:103.30000000000001px;width:0.8px;height:2.5px;background:#e0e0e0;transform-origin:0.4px 28px;transform:rotate(150deg)"></div>
<div style="left:165.4px;top:103.30000000000001px;width:0.8px;height:2.5px;background:#e0e0e0;transform-origin:0.4px 28px;transform:rotate(180deg)"></div>
<div style="left:165.4px;top:103.30000000000001px;width:0.8px;height:2.5px;background:#e0e0e0;transform-origin:0.4px 28px;transform:rotate(210deg)"></div>
<div style="left:165.4px;top:103.30000000000001px;width:0.8px;height:2.5px;background:#e0e0e0;transform-origin:0.4px 28px;transform:rotate(240deg)"></div>
<div style="left:165.4px;top:103.30000000000001px;width:0.8px;height:2.5px;background:#e0e0e0;transform-origin:0.4px 28px;transform:rotate(270deg)"></div>
<div style="left:165.4px;top:103.30000000000001px;width:0.8px;height:2.5px;background:#e0e0e0;transform-origin:0.4px 28px;transform:rotate(300deg)"></div>
<div style="left:165.4px;top:103.30000000000001px;width:0.8px;height:2.5px;background:#e0e0e0;transform-origin:0.4px 28px;transform:rotate(330deg)"></div>
<div style="left:142.8px;top:108.30000000000001px;width:46px;height:46px;background:#000;border-radius:50%;border:1px solid #d8d8d8;box-shadow:0 0 0 1px #000;"></div>
<div style="left:169.5px;top:115.5px;width:11px;height:11px;background:#404040;border-radius:50%;border:1.2px solid #e8e8e8;"></div>
<div style="left:136px;top:159.5px;width:29px;height:9.5px;background:linear-gradient(#fbfbfb,#e9e9e9);border-top:1px solid #fff;border-left:1px solid #fff;border-right:1px solid #8c8c8c;border-bottom:1px solid #8c8c8c;box-shadow:0.5px 0.5px 0 #c8c8c8;box-sizing:border-box;"></div>
<div class="t" style="left:136px;top:159.9px;width:29px;height:9.5px;line-height:9.5px;text-align:center;font-size:5.8px;color:#000;">&lt;&lt;&lt; -</div>
<div style="left:165px;top:159.5px;width:29px;height:9.5px;background:linear-gradient(#fbfbfb,#e9e9e9);border-top:1px solid #fff;border-left:1px solid #fff;border-right:1px solid #8c8c8c;border-bottom:1px solid #8c8c8c;box-shadow:0.5px 0.5px 0 #c8c8c8;box-sizing:border-box;"></div>
<div class="t" style="left:165px;top:159.9px;width:29px;height:9.5px;line-height:9.5px;text-align:center;font-size:5.8px;color:#000;">- &gt;&gt;&gt;</div>
<div style="left:199.5px;top:101px;width:51px;height:69px;border:1px solid #d5d9dd;border-radius:2px;box-sizing:border-box;"></div>
<div class="t" style="left:202.5px;top:97px;height:8px;line-height:8px;padding:0 1px;background:#f0f0f0;font-size:6px;color:#000">Mode</div>
<div style="left:204px;top:105px;width:20.5px;height:10px;background:linear-gradient(#fbfbfb,#e9e9e9);border-top:1px solid #fff;border-left:1px solid #fff;border-right:1px solid #8c8c8c;border-bottom:1px solid #8c8c8c;box-shadow:0.5px 0.5px 0 #c8c8c8;box-sizing:border-box;"></div>
<div class="t" style="left:204px;top:105.4px;width:20.5px;height:10px;line-height:10px;text-align:center;font-size:6.1px;color:#000;">LSB</div>
<div style="left:227px;top:105px;width:20.5px;height:10px;background:linear-gradient(#fbfbfb,#e9e9e9);border-top:1px solid #fff;border-left:1px solid #fff;border-right:1px solid #8c8c8c;border-bottom:1px solid #8c8c8c;box-shadow:0.5px 0.5px 0 #c8c8c8;box-sizing:border-box;"></div>
<div class="t" style="left:227px;top:105.4px;width:20.5px;height:10px;line-height:10px;text-align:center;font-size:6.1px;color:#000;">PSK</div>
<div style="left:204px;top:118px;width:20.5px;height:10px;background:#f6f6f6;border-top:1px solid #9a9a9a;border-left:1px solid #9a9a9a;border-right:1px solid #fff;border-bottom:1px solid #fff;box-sizing:border-box;"></div>
<div class="t" style="left:204px;top:118px;width:20.5px;height:10px;line-height:10px;text-align:center;font-size:6.1px;color:#000;">USB</div>
<div style="left:227px;top:118px;width:20.5px;height:10px;background:linear-gradient(#fbfbfb,#e9e9e9);border-top:1px solid #fff;border-left:1px solid #fff;border-right:1px solid #8c8c8c;border-bottom:1px solid #8c8c8c;box-shadow:0.5px 0.5px 0 #c8c8c8;box-sizing:border-box;"></div>
<div class="t" style="left:227px;top:118.4px;width:20.5px;height:10px;line-height:10px;text-align:center;font-size:6.1px;color:#000;">FSK</div>
<div style="left:204px;top:131px;width:20.5px;height:10px;background:linear-gradient(#fbfbfb,#e9e9e9);border-top:1px solid #fff;border-left:1px solid #fff;border-right:1px solid #8c8c8c;border-bottom:1px solid #8c8c8c;box-shadow:0.5px 0.5px 0 #c8c8c8;box-sizing:border-box;"></div>
<div class="t" style="left:204px;top:131.4px;width:20.5px;height:10px;line-height:10px;text-align:center;font-size:6.1px;color:#000;">CW</div>
<div style="left:227px;top:131px;width:20.5px;height:10px;background:linear-gradient(#fbfbfb,#e9e9e9);border-top:1px solid #fff;border-left:1px solid #fff;border-right:1px solid #8c8c8c;border-bottom:1px solid #8c8c8c;box-shadow:0.5px 0.5px 0 #c8c8c8;box-sizing:border-box;"></div>
<div class="t" style="left:227px;top:131.4px;width:20.5px;height:10px;line-height:10px;text-align:center;font-size:6.1px;color:#000;">Dat</div>
<div style="left:204px;top:144px;width:20.5px;height:10px;background:linear-gradient(#fbfbfb,#e9e9e9);border-top:1px solid #fff;border-left:1px solid #fff;border-right:1px solid #8c8c8c;border-bottom:1px solid #8c8c8c;box-shadow:0.5px 0.5px 0 #c8c8c8;box-sizing:border-box;"></div>
<div class="t" style="left:204px;top:144.4px;width:20.5px;height:10px;line-height:10px;text-align:center;font-size:6.1px;color:#000;">AM</div>
<div style="left:227px;top:144px;width:20.5px;height:10px;background:linear-gradient(#fbfbfb,#e9e9e9);border-top:1px solid #fff;border-left:1px solid #fff;border-right:1px solid #8c8c8c;border-bottom:1px solid #8c8c8c;box-shadow:0.5px 0.5px 0 #c8c8c8;box-sizing:border-box;"></div>
<div class="t" style="left:227px;top:144.4px;width:20.5px;height:10px;line-height:10px;text-align:center;font-size:6.1px;color:#000;">REV</div>
<div style="left:204px;top:157px;width:20.5px;height:10px;background:linear-gradient(#fbfbfb,#e9e9e9);border-top:1px solid #fff;border-left:1px solid #fff;border-right:1px solid #8c8c8c;border-bottom:1px solid #8c8c8c;box-shadow:0.5px 0.5px 0 #c8c8c8;box-sizing:border-box;"></div>
<div class="t" style="left:204px;top:157.4px;width:20.5px;height:10px;line-height:10px;text-align:center;font-size:6.1px;color:#000;">FM</div>
<div style="left:227px;top:157px;width:20.5px;height:10px;background:#f6f6f6;border-top:1px solid #9a9a9a;border-left:1px solid #9a9a9a;border-right:1px solid #fff;border-bottom:1px solid #fff;box-sizing:border-box;"></div>
<div class="t" style="left:227px;top:157px;width:20.5px;height:10px;line-height:10px;text-align:center;font-size:6.1px;color:#000;">AUT</div>
<div style="left:252px;top:101px;width:26px;height:69px;border:1px solid #d5d9dd;border-radius:2px;box-sizing:border-box;"></div>
<div class="t" style="left:254px;top:97px;height:8px;line-height:8px;padding:0 1px;background:#f0f0f0;font-size:6px;color:#000">Filter</div>
<div style="left:254px;top:105px;width:21px;height:10px;background:linear-gradient(#fbfbfb,#e9e9e9);border-top:1px solid #fff;border-left:1px solid #fff;border-right:1px solid #8c8c8c;border-bottom:1px solid #8c8c8c;box-shadow:0.5px 0.5px 0 #c8c8c8;box-sizing:border-box;"></div>
<div class="t" style="left:254px;top:105.4px;width:21px;height:10px;line-height:10px;text-align:center;font-size:6.1px;color:#000;">FIL1</div>
<div style="left:254px;top:118px;width:21px;height:10px;background:linear-gradient(#fbfbfb,#e9e9e9);border-top:1px solid #fff;border-left:1px solid #fff;border-right:1px solid #8c8c8c;border-bottom:1px solid #8c8c8c;box-shadow:0.5px 0.5px 0 #c8c8c8;box-sizing:border-box;"></div>
<div class="t" style="left:254px;top:118.4px;width:21px;height:10px;line-height:10px;text-align:center;font-size:6.1px;color:#000;">FIL2</div>
<div style="left:254px;top:131px;width:21px;height:10px;background:linear-gradient(#fbfbfb,#e9e9e9);border-top:1px solid #fff;border-left:1px solid #fff;border-right:1px solid #8c8c8c;border-bottom:1px solid #8c8c8c;box-shadow:0.5px 0.5px 0 #c8c8c8;box-sizing:border-box;"></div>
<div class="t" style="left:254px;top:131.4px;width:21px;height:10px;line-height:10px;text-align:center;font-size:6.1px;color:#000;">FIL3</div>
<div style="left:254px;top:144px;width:21px;height:10px;background:linear-gradient(#fbfbfb,#e9e9e9);border-top:1px solid #fff;border-left:1px solid #fff;border-right:1px solid #8c8c8c;border-bottom:1px solid #8c8c8c;box-shadow:0.5px 0.5px 0 #c8c8c8;box-sizing:border-box;"></div>
<div class="t" style="left:254px;top:144.4px;width:21px;height:10px;line-height:10px;text-align:center;font-size:6.1px;color:#000;">Sh.</div>
<div style="left:254px;top:157px;width:21px;height:10px;background:linear-gradient(#fbfbfb,#e9e9e9);border-top:1px solid #fff;border-left:1px solid #fff;border-right:1px solid #8c8c8c;border-bottom:1px solid #8c8c8c;box-shadow:0.5px 0.5px 0 #c8c8c8;box-sizing:border-box;"></div>
<div class="t" style="left:254px;top:157.4px;width:21px;height:10px;line-height:10px;text-align:center;font-size:6.1px;color:#000;">Sa</div>
<div style="left:280.5px;top:101px;width:26px;height:48px;border:1px solid #d5d9dd;border-radius:2px;box-sizing:border-box;"></div>
<div class="t" style="left:282.5px;top:97px;height:8px;line-height:8px;padding:0 1px;background:#f0f0f0;font-size:6px;color:#000">AF</div>
<div style="left:284px;top:108.0px;width:0.8px;height:1px;background:#333;"></div>
<div style="left:297px;top:108.0px;width:0.8px;height:1px;background:#333;"></div>
<div style="left:284px;top:111.7px;width:0.8px;height:1px;background:#333;"></div>
<div style="left:297px;top:111.7px;width:0.8px;height:1px;background:#333;"></div>
<div style="left:284px;top:115.4px;width:0.8px;height:1px;background:#333;"></div>
<div style="left:297px;top:115.4px;width:0.8px;height:1px;background:#333;"></div>
<div style="left:284px;top:119.1px;width:0.8px;height:1px;background:#333;"></div>
<div style="left:297px;top:119.1px;width:0.8px;height:1px;background:#333;"></div>
<div style="left:284px;top:122.8px;width:0.8px;height:1px;background:#333;"></div>
<div style="left:297px;top:122.8px;width:0.8px;height:1px;background:#333;"></div>
<div style="left:284px;top:126.5px;width:0.8px;height:1px;background:#333;"></div>
<div style="left:297px;top:126.5px;width:0.8px;height:1px;background:#333;"></div>
<div style="left:284px;top:130.2px;width:0.8px;height:1px;background:#333;"></div>
<div style="left:297px;top:130.2px;width:0.8px;height:1px;background:#333;"></div>
<div style="left:284px;top:133.9px;width:0.8px;height:1px;background:#333;"></div>
<div style="left:297px;top:133.9px;width:0.8px;height:1px;background:#333;"></div>
<div style="left:284px;top:137.6px;width:0.8px;height:1px;background:#333;"></div>
<div style="left:297px;top:137.6px;width:0.8px;height:1px;background:#333;"></div>
<div style="left:284px;top:141.3px;width:0.8px;height:1px;background:#333;"></div>
<div style="left:297px;top:141.3px;width:0.8px;height:1px;background:#333;"></div>
<div style="left:289.5px;top:107.5px;width:1.5px;height:36px;background:#9a9a9a;border-right:0.6px solid #fff;"></div>
<div style="left:286px;top:131.5px;width:9.5px;height:4.5px;background:linear-gradient(#fafafa,#dcdcdc);border:1px solid #888;border-radius:1px;"></div>
<div style="left:281px;top:151.5px;width:16.5px;height:15.5px;background:linear-gradient(#fbfbfb,#e9e9e9);border-top:1px solid #fff;border-left:1px solid #fff;border-right:1px solid #8c8c8c;border-bottom:1px solid #8c8c8c;box-shadow:0.5px 0.5px 0 #c8c8c8;box-sizing:border-box;"></div>
<div class="t" style="left:281px;top:151.9px;width:16.5px;height:15.5px;line-height:15.5px;text-align:center;font-size:6.1px;color:#000;">KEY</div>
<div style="left:304px;top:151px;width:4px;height:16px;background:#10e010;border:1px solid #2a5a2a;"></div>
<div style="left:309.5px;top:101px;width:40px;height:69px;border:1px solid #d5d9dd;border-radius:2px;box-sizing:border-box;"></div>
<div class="t" style="left:312.5px;top:97px;height:8px;line-height:8px;padding:0 1px;background:#f0f0f0;font-size:6px;color:#000">Band</div>
<div style="left:313px;top:104px;width:34.5px;height:64.5px;background:#f0f0f0;border:1px solid #fff;border-right-color:#888;border-bottom-color:#888;"></div>
<div class="t" style="left:313px;top:104.3px;width:17px;height:9px;line-height:9px;text-align:center;font-size:6px;color:#000;">160</div>
<div class="t" style="left:330px;top:104.3px;width:17px;height:9px;line-height:9px;text-align:center;font-size:6px;color:#000;">80</div>
<div style="left:314px;top:113.2px;width:33px;height:0.8px;background:#d0d0d0;"></div>
<div class="t" style="left:313px;top:113.5px;width:17px;height:9px;line-height:9px;text-align:center;font-size:6px;color:#000;">40</div>
<div class="t" style="left:330px;top:113.5px;width:17px;height:9px;line-height:9px;text-align:center;font-size:6px;color:#000;">30</div>
<div style="left:314px;top:122.4px;width:33px;height:0.8px;background:#d0d0d0;"></div>
<div class="t" style="left:313px;top:122.7px;width:17px;height:9px;line-height:9px;text-align:center;font-size:6px;color:#000;">20</div>
<div class="t" style="left:330px;top:122.7px;width:17px;height:9px;line-height:9px;text-align:center;font-size:6px;color:#000;">17</div>
<div style="left:314px;top:131.6px;width:33px;height:0.8px;background:#d0d0d0;"></div>
<div class="t" style="left:313px;top:131.9px;width:17px;height:9px;line-height:9px;text-align:center;font-size:6px;color:#000;">15</div>
<div class="t" style="left:330px;top:131.9px;width:17px;height:9px;line-height:9px;text-align:center;font-size:6px;color:#000;">12</div>
<div style="left:314px;top:140.8px;width:33px;height:0.8px;background:#d0d0d0;"></div>
<div class="t" style="left:313px;top:141.10000000000002px;width:17px;height:9px;line-height:9px;text-align:center;font-size:6px;color:#000;">11e</div>
<div class="t" style="left:330px;top:141.10000000000002px;width:17px;height:9px;line-height:9px;text-align:center;font-size:6px;color:#000;">10b</div>
<div style="left:314px;top:150.0px;width:33px;height:0.8px;background:#d0d0d0;"></div>
<div class="t" style="left:313px;top:150.3px;width:17px;height:9px;line-height:9px;text-align:center;font-size:6px;color:#000;">6</div>
<div class="t" style="left:330px;top:150.3px;width:17px;height:9px;line-height:9px;text-align:center;font-size:6px;color:#000;">2</div>
<div style="left:314px;top:159.2px;width:33px;height:0.8px;background:#d0d0d0;"></div>
<div class="t" style="left:313px;top:159.5px;width:17px;height:9px;line-height:9px;text-align:center;font-size:6px;color:#000;">=&gt;</div>
<div class="t" style="left:330px;top:159.5px;width:17px;height:9px;line-height:9px;text-align:center;font-size:6px;color:#000;">MHz</div>
<div style="left:329.8px;top:104.5px;width:0.8px;height:64px;background:#d0d0d0;"></div>
<div style="left:7px;top:174.5px;width:301.5px;height:30px;border:1px solid #d5d9dd;border-radius:2px;box-sizing:border-box;"></div>
<div class="t" style="left:10px;top:170.5px;height:8px;line-height:8px;padding:0 1px;background:#f0f0f0;font-size:6px;color:#000">Tuning</div>
<div style="left:9.5px;top:177.5px;width:297px;height:25.5px;background:#0000f8;"></div>
<div style="left:11px;top:184px;width:14.5px;height:14px;border:1px solid #e0e0ff;"></div>
<div style="left:27px;top:184px;width:14.5px;height:14px;border:1px solid #e0e0ff;"></div>
<div style="left:13.5px;top:187.5px;width:0;height:0;border-left:4.5px solid transparent;border-right:4.5px solid transparent;border-top:7px solid #8b0000"></div>
<div style="left:29.5px;top:188px;width:0;height:0;border-left:4.5px solid transparent;border-right:4.5px solid transparent;border-bottom:7px solid #8b0000"></div>
<div style="left:44px;top:183.8px;width:211px;height:5px;background:#800000;border:0.8px solid #d0a080;"></div>
<div style="left:101px;top:184.8px;width:79px;height:3px;background:#f8f000;"></div>
<div style="left:60.3px;top:179px;width:2.6px;height:13.5px;background:#b00000;border:0.6px solid #e8a050;"></div>
<div style="left:95.8px;top:179px;width:2.6px;height:13.5px;background:#b00000;border:0.6px solid #e8a050;"></div>
<div style="left:166.5px;top:179px;width:2.6px;height:13.5px;background:#b00000;border:0.6px solid #e8a050;"></div>
<div style="left:201.3px;top:179px;width:2.6px;height:13.5px;background:#b00000;border:0.6px solid #e8a050;"></div>
<div style="left:236.3px;top:179px;width:2.6px;height:13.5px;background:#b00000;border:0.6px solid #e8a050;"></div>
<div style="left:128.8px;top:179px;width:5.6px;height:14px;background:#ffee00;border:0.6px solid #c0a000;"></div>
<div style="left:128.8px;top:185.8px;width:5.6px;height:0.8px;background:#800000;"></div>
<div class="t" style="left:46px;top:193.5px;width:25px;height:7px;line-height:7px;text-align:left;font-size:5.5px;color:#e0e0ff;">&lt;&lt;</div>
<div class="t" style="left:57px;top:193.5px;width:25px;height:7px;line-height:7px;text-align:left;font-size:5.5px;color:#e0e0ff;">28.000</div>
<div class="t" style="left:92px;top:193.5px;width:25px;height:7px;line-height:7px;text-align:left;font-size:5.5px;color:#e0e0ff;">28.200</div>
<div class="t" style="left:123px;top:193.5px;width:25px;height:7px;line-height:7px;text-align:left;font-size:5.5px;color:#e0e0ff;">28.400</div>
<div class="t" style="left:158px;top:193.5px;width:25px;height:7px;line-height:7px;text-align:left;font-size:5.5px;color:#e0e0ff;">28.600</div>
<div class="t" style="left:193px;top:193.5px;width:25px;height:7px;line-height:7px;text-align:left;font-size:5.5px;color:#e0e0ff;">28.800</div>
<div class="t" style="left:228px;top:193.5px;width:25px;height:7px;line-height:7px;text-align:left;font-size:5.5px;color:#e0e0ff;">29.000</div>
<div class="t" style="left:256px;top:193.5px;width:25px;height:7px;line-height:7px;text-align:left;font-size:5.5px;color:#e0e0ff;">&gt;&gt;</div>
<div style="left:269px;top:180px;width:33.5px;height:8.5px;background:#800000;border:1px solid #fff;"></div>
<div class="t" style="left:269px;top:180px;width:33.5px;height:8.5px;line-height:8.5px;text-align:center;font-size:5.5px;color:#ffb000;">INC</div>
<div style="left:269px;top:190.5px;width:33.5px;height:10.5px;background:#0000f8;border:1px solid #fff;"></div>
<div class="t" style="left:271px;top:190.5px;width:20px;height:10.5px;line-height:10.5px;text-align:left;font-size:5.8px;color:#fff;">HAM</div>
<div style="left:293px;top:191.5px;width:8.5px;height:8.5px;background:#fff;"></div>
<div style="left:295.5px;top:195px;width:0;height:0;border-left:1.5px solid transparent;border-right:1.5px solid transparent;border-top:2px solid #111"></div>
<div style="left:309.5px;top:174.5px;width:39.5px;height:15px;border:1px solid #d5d9dd;border-radius:2px;box-sizing:border-box;"></div>
<div class="t" style="left:312.5px;top:170.5px;height:8px;line-height:8px;padding:0 1px;background:#f0f0f0;font-size:6px;color:#000">QMB</div>
<div style="left:313px;top:178.5px;width:17px;height:10px;background:linear-gradient(#fbfbfb,#e9e9e9);border-top:1px solid #fff;border-left:1px solid #fff;border-right:1px solid #8c8c8c;border-bottom:1px solid #8c8c8c;box-shadow:0.5px 0.5px 0 #c8c8c8;box-sizing:border-box;"></div>
<div class="t" style="left:313px;top:178.9px;width:17px;height:10px;line-height:10px;text-align:center;font-size:6.1px;color:#000;">Sto</div>
<div style="left:330px;top:178.5px;width:16.5px;height:10px;background:linear-gradient(#fbfbfb,#e9e9e9);border-top:1px solid #fff;border-left:1px solid #fff;border-right:1px solid #8c8c8c;border-bottom:1px solid #8c8c8c;box-shadow:0.5px 0.5px 0 #c8c8c8;box-sizing:border-box;"></div>
<div class="t" style="left:330px;top:178.9px;width:16.5px;height:10px;line-height:10px;text-align:center;font-size:6.1px;color:#000;">Rcl</div>
<div style="left:312px;top:192px;width:11px;height:11px;background:linear-gradient(#fbfbfb,#e9e9e9);border-top:1px solid #fff;border-left:1px solid #fff;border-right:1px solid #8c8c8c;border-bottom:1px solid #8c8c8c;box-shadow:0.5px 0.5px 0 #c8c8c8;box-sizing:border-box;"></div>
<svg style="position:absolute;left:313.5px;top:193.5px" width="8" height="8" viewBox="0 0 16 16"><rect x="9" y="1" width="2.5" height="12" fill="#1a1a1a"/><rect x="12.5" y="1" width="2.5" height="12" fill="#1a1a1a"/><path d="M3 11 L9 11 L7 15 L3 15Z" fill="#f0e020" stroke="#553"/></svg>
<div style="left:326px;top:192px;width:11px;height:11px;background:linear-gradient(#fbfbfb,#e9e9e9);border-top:1px solid #fff;border-left:1px solid #fff;border-right:1px solid #8c8c8c;border-bottom:1px solid #8c8c8c;box-shadow:0.5px 0.5px 0 #c8c8c8;box-sizing:border-box;"></div>
<svg style="position:absolute;left:327.5px;top:193.5px" width="8" height="8" viewBox="0 0 16 16"><rect x="0.5" y="1" width="15" height="10" fill="#9aa0a8" stroke="#334"/><rect x="2" y="3" width="12" height="6" fill="#505a66"/><rect x="3" y="4" width="4" height="3" fill="#e04040"/><rect x="2" y="12" width="12" height="3" fill="#ccc" stroke="#555" stroke-width="0.6"/></svg>
<div style="left:339.5px;top:192px;width:11px;height:11px;background:linear-gradient(#fbfbfb,#e9e9e9);border-top:1px solid #fff;border-left:1px solid #fff;border-right:1px solid #8c8c8c;border-bottom:1px solid #8c8c8c;box-shadow:0.5px 0.5px 0 #c8c8c8;box-sizing:border-box;"></div>
<svg style="position:absolute;left:340.5px;top:193.5px" width="8" height="8" viewBox="0 0 16 16"><path d="M4.5 5.5 A3.5 3.5 0 1 1 10 8.5 L8 10 L8 12" fill="none" stroke="#222" stroke-width="3.2"/><path d="M4.5 5.5 A3.5 3.5 0 1 1 10 8.5 L8 10 L8 12" fill="none" stroke="#f0e020" stroke-width="1.6"/><rect x="6.5" y="13" width="3" height="2.5" fill="#222"/></svg>
<div style="left:357px;top:37px;width:157.5px;height:172px;border:0.8px solid #646c76;border-radius:3px 3px 1px 1px;background:linear-gradient(#dce6f0 0px,#dce6f0 0.8px,#b7c7d8 1.8px,#c4d2e1 6px,#d6e2ee 13px,#dae5f1 100%);box-shadow:0.5px 0.5px 1px rgba(0,0,0,.25);"></div>
<div style="left:359.6px;top:50.4px;width:152.3px;height:156.0px;background:#f0f0f0;border:0.5px solid #c8d4e0;"></div>
<svg style="position:absolute;left:361px;top:40.5px" width="8.5" height="8.5" viewBox="0 0 16 16"><path d="M8 2 L8 12 M12 1 L12 11" stroke="#222" stroke-width="1.6"/><path d="M6 2 L9 1" stroke="#222"/><circle cx="5" cy="13" r="2" fill="#222"/><path d="M3 6 Q6 3 8 4" fill="none" stroke="#fff" stroke-width="1.2"/></svg>
<div class="t" style="left:369.8px;top:41.6px;height:9px;line-height:9px;font-size:5.6px;color:#465470;white-space:nowrap">Levels</div>
<div style="left:466.50000000000006px;top:41.3px;width:13.8px;height:8px;background:linear-gradient(#dde6f0,#cad7e5);border:0.8px solid #9aaabb;border-radius:1px;"></div>
<div style="left:470.50000000000006px;top:46.2px;width:6px;height:1.2px;background:#7a8594;"></div>
<div style="left:481.40000000000003px;top:41.3px;width:13.8px;height:8px;background:linear-gradient(#dde6f0,#cad7e5);border:0.8px solid #9aaabb;border-radius:1px;"></div>
<div style="left:485.70000000000005px;top:43.6px;width:5.5px;height:3.2px;border:1px solid #7a8594;border-radius:0.8px;"></div>
<div style="left:496.30000000000007px;top:41.3px;width:13.8px;height:8px;background:linear-gradient(#dde6f0,#cad7e5);border:0.8px solid #9aaabb;border-radius:1px;"></div>
<svg style="position:absolute;left:500.70000000000005px;top:43.3px" width="5" height="4" viewBox="0 0 5 4"><path d="M0.3 0.3 L4.7 3.7 M4.7 0.3 L0.3 3.7" stroke="#6a7584" stroke-width="1.3"/></svg>
<div style="left:361px;top:52px;width:16.5px;height:72.5px;border:1px solid #d5d9dd;border-radius:2px;box-sizing:border-box;"></div>
<div class="t" style="left:364px;top:48px;height:8px;line-height:8px;padding:0 1px;background:#f0f0f0;font-size:5.8px;color:#000">PB</div>
<div style="left:361px;top:129px;width:16.5px;height:74px;border:1px solid #d5d9dd;border-radius:2px;box-sizing:border-box;"></div>
<div class="t" style="left:364px;top:125px;height:8px;line-height:8px;padding:0 1px;background:#f0f0f0;font-size:5.8px;color:#000">IFS</div>
<div style="left:364px;top:60.0px;width:1.8px;height:0.9px;background:#555;"></div>
<div style="left:364px;top:63.916666666666664px;width:1.8px;height:0.9px;background:#555;"></div>
<div style="left:364px;top:67.83333333333333px;width:1.8px;height:0.9px;background:#555;"></div>
<div style="left:364px;top:71.75px;width:1.8px;height:0.9px;background:#555;"></div>
<div style="left:364px;top:75.66666666666667px;width:1.8px;height:0.9px;background:#555;"></div>
<div style="left:364px;top:79.58333333333333px;width:1.8px;height:0.9px;background:#555;"></div>
<div style="left:364px;top:83.5px;width:1.8px;height:0.9px;background:#555;"></div>
<div style="left:364px;top:87.41666666666667px;width:1.8px;height:0.9px;background:#555;"></div>
<div style="left:364px;top:91.33333333333333px;width:1.8px;height:0.9px;background:#555;"></div>
<div style="left:364px;top:95.25px;width:1.8px;height:0.9px;background:#555;"></div>
<div style="left:364px;top:99.16666666666666px;width:1.8px;height:0.9px;background:#555;"></div>
<div style="left:364px;top:103.08333333333334px;width:1.8px;height:0.9px;background:#555;"></div>
<div style="left:364px;top:107.0px;width:1.8px;height:0.9px;background:#555;"></div>
<div style="left:376.2px;top:60.0px;width:0.9px;height:0.9px;background:#555;"></div>
<div style="left:376.2px;top:63.916666666666664px;width:0.9px;height:0.9px;background:#555;"></div>
<div style="left:376.2px;top:67.83333333333333px;width:0.9px;height:0.9px;background:#555;"></div>
<div style="left:376.2px;top:71.75px;width:0.9px;height:0.9px;background:#555;"></div>
<div style="left:376.2px;top:75.66666666666667px;width:0.9px;height:0.9px;background:#555;"></div>
<div style="left:376.2px;top:79.58333333333333px;width:0.9px;height:0.9px;background:#555;"></div>
<div style="left:376.2px;top:83.5px;width:0.9px;height:0.9px;background:#555;"></div>
<div style="left:376.2px;top:87.41666666666667px;width:0.9px;height:0.9px;background:#555;"></div>
<div style="left:376.2px;top:91.33333333333333px;width:0.9px;height:0.9px;background:#555;"></div>
<div style="left:376.2px;top:95.25px;width:0.9px;height:0.9px;background:#555;"></div>
<div style="left:376.2px;top:99.16666666666666px;width:0.9px;height:0.9px;background:#555;"></div>
<div style="left:376.2px;top:103.08333333333334px;width:0.9px;height:0.9px;background:#555;"></div>
<div style="left:376.2px;top:107.0px;width:0.9px;height:0.9px;background:#555;"></div>
<div style="left:369.45px;top:59px;width:2px;height:49px;background:#b8b8b8;border-left:0.7px solid #888;border-right:0.7px solid #fff;"></div>
<svg style="position:absolute;left:365.45px;top:60.8px" width="11" height="5.5" viewBox="0 0 11 5.5"><path d="M0.4 0.4 H8 L10.5 2.7 L8 5.1 H0.4 Z" fill="#f4f4f4" stroke="#7a7a7a" stroke-width="0.8"/><path d="M1 1 H7.7" stroke="#fff" stroke-width="0.7"/></svg>
<div style="left:364px;top:137.0px;width:1.8px;height:0.9px;background:#555;"></div>
<div style="left:364px;top:141.0px;width:1.8px;height:0.9px;background:#555;"></div>
<div style="left:364px;top:145.0px;width:1.8px;height:0.9px;background:#555;"></div>
<div style="left:364px;top:149.0px;width:1.8px;height:0.9px;background:#555;"></div>
<div style="left:364px;top:153.0px;width:1.8px;height:0.9px;background:#555;"></div>
<div style="left:364px;top:157.0px;width:1.8px;height:0.9px;background:#555;"></div>
<div style="left:364px;top:161.0px;width:1.8px;height:0.9px;background:#555;"></div>
<div style="left:364px;top:165.0px;width:1.8px;height:0.9px;background:#555;"></div>
<div style="left:364px;top:169.0px;width:1.8px;height:0.9px;background:#555;"></div>
<div style="left:364px;top:173.0px;width:1.8px;height:0.9px;background:#555;"></div>
<div style="left:364px;top:177.0px;width:1.8px;height:0.9px;background:#555;"></div>
<div style="left:364px;top:181.0px;width:1.8px;height:0.9px;background:#555;"></div>
<div style="left:364px;top:185.0px;width:1.8px;height:0.9px;background:#555;"></div>
<div style="left:376.2px;top:137.0px;width:0.9px;height:0.9px;background:#555;"></div>
<div style="left:376.2px;top:141.0px;width:0.9px;height:0.9px;background:#555;"></div>
<div style="left:376.2px;top:145.0px;width:0.9px;height:0.9px;background:#555;"></div>
<div style="left:376.2px;top:149.0px;width:0.9px;height:0.9px;background:#555;"></div>
<div style="left:376.2px;top:153.0px;width:0.9px;height:0.9px;background:#555;"></div>
<div style="left:376.2px;top:157.0px;width:0.9px;height:0.9px;background:#555;"></div>
<div style="left:376.2px;top:161.0px;width:0.9px;height:0.9px;background:#555;"></div>
<div style="left:376.2px;top:165.0px;width:0.9px;height:0.9px;background:#555;"></div>
<div style="left:376.2px;top:169.0px;width:0.9px;height:0.9px;background:#555;"></div>
<div style="left:376.2px;top:173.0px;width:0.9px;height:0.9px;background:#555;"></div>
<div style="left:376.2px;top:177.0px;width:0.9px;height:0.9px;background:#555;"></div>
<div style="left:376.2px;top:181.0px;width:0.9px;height:0.9px;background:#555;"></div>
<div style="left:376.2px;top:185.0px;width:0.9px;height:0.9px;background:#555;"></div>
<div style="left:369.45px;top:136px;width:2px;height:50px;background:#b8b8b8;border-left:0.7px solid #888;border-right:0.7px solid #fff;"></div>
<svg style="position:absolute;left:365.45px;top:156.8px" width="11" height="5.5" viewBox="0 0 11 5.5"><path d="M0.4 0.4 H8 L10.5 2.7 L8 5.1 H0.4 Z" fill="#f4f4f4" stroke="#7a7a7a" stroke-width="0.8"/><path d="M1 1 H7.7" stroke="#fff" stroke-width="0.7"/></svg>
<div style="left:379px;top:52px;width:16.5px;height:72.5px;border:1px solid #d5d9dd;border-radius:2px;box-sizing:border-box;"></div>
<div class="t" style="left:382px;top:48px;height:8px;line-height:8px;padding:0 1px;background:#f0f0f0;font-size:5.8px;color:#000">AF</div>
<div style="left:379px;top:129px;width:16.5px;height:74px;border:1px solid #d5d9dd;border-radius:2px;box-sizing:border-box;"></div>
<div class="t" style="left:382px;top:125px;height:8px;line-height:8px;padding:0 1px;background:#f0f0f0;font-size:5.8px;color:#000">Wid</div>
<div style="left:382px;top:60.0px;width:1.8px;height:0.9px;background:#555;"></div>
<div style="left:382px;top:63.916666666666664px;width:1.8px;height:0.9px;background:#555;"></div>
<div style="left:382px;top:67.83333333333333px;width:1.8px;height:0.9px;background:#555;"></div>
<div style="left:382px;top:71.75px;width:1.8px;height:0.9px;background:#555;"></div>
<div style="left:382px;top:75.66666666666667px;width:1.8px;height:0.9px;background:#555;"></div>
<div style="left:382px;top:79.58333333333333px;width:1.8px;height:0.9px;background:#555;"></div>
<div style="left:382px;top:83.5px;width:1.8px;height:0.9px;background:#555;"></div>
<div style="left:382px;top:87.41666666666667px;width:1.8px;height:0.9px;background:#555;"></div>
<div style="left:382px;top:91.33333333333333px;width:1.8px;height:0.9px;background:#555;"></div>
<div style="left:382px;top:95.25px;width:1.8px;height:0.9px;background:#555;"></div>
<div style="left:382px;top:99.16666666666666px;width:1.8px;height:0.9px;background:#555;"></div>
<div style="left:382px;top:103.08333333333334px;width:1.8px;height:0.9px;background:#555;"></div>
<div style="left:382px;top:107.0px;width:1.8px;height:0.9px;background:#555;"></div>
<div style="left:394.2px;top:60.0px;width:0.9px;height:0.9px;background:#555;"></div>
<div style="left:394.2px;top:63.916666666666664px;width:0.9px;height:0.9px;background:#555;"></div>
<div style="left:394.2px;top:67.83333333333333px;width:0.9px;height:0.9px;background:#555;"></div>
<div style="left:394.2px;top:71.75px;width:0.9px;height:0.9px;background:#555;"></div>
<div style="left:394.2px;top:75.66666666666667px;width:0.9px;height:0.9px;background:#555;"></div>
<div style="left:394.2px;top:79.58333333333333px;width:0.9px;height:0.9px;background:#555;"></div>
<div style="left:394.2px;top:83.5px;width:0.9px;height:0.9px;background:#555;"></div>
<div style="left:394.2px;top:87.41666666666667px;width:0.9px;height:0.9px;background:#555;"></div>
<div style="left:394.2px;top:91.33333333333333px;width:0.9px;height:0.9px;background:#555;"></div>
<div style="left:394.2px;top:95.25px;width:0.9px;height:0.9px;background:#555;"></div>
<div style="left:394.2px;top:99.16666666666666px;width:0.9px;height:0.9px;background:#555;"></div>
<div style="left:394.2px;top:103.08333333333334px;width:0.9px;height:0.9px;background:#555;"></div>
<div style="left:394.2px;top:107.0px;width:0.9px;height:0.9px;background:#555;"></div>
<div style="left:387.45px;top:59px;width:2px;height:49px;background:#b8b8b8;border-left:0.7px solid #888;border-right:0.7px solid #fff;"></div>
<svg style="position:absolute;left:383.45px;top:92.3px" width="11" height="5.5" viewBox="0 0 11 5.5"><path d="M0.4 0.4 H8 L10.5 2.7 L8 5.1 H0.4 Z" fill="#f4f4f4" stroke="#7a7a7a" stroke-width="0.8"/><path d="M1 1 H7.7" stroke="#fff" stroke-width="0.7"/></svg>
<div style="left:382px;top:137.0px;width:1.8px;height:0.9px;background:#555;"></div>
<div style="left:382px;top:141.0px;width:1.8px;height:0.9px;background:#555;"></div>
<div style="left:382px;top:145.0px;width:1.8px;height:0.9px;background:#555;"></div>
<div style="left:382px;top:149.0px;width:1.8px;height:0.9px;background:#555;"></div>
<div style="left:382px;top:153.0px;width:1.8px;height:0.9px;background:#555;"></div>
<div style="left:382px;top:157.0px;width:1.8px;height:0.9px;background:#555;"></div>
<div style="left:382px;top:161.0px;width:1.8px;height:0.9px;background:#555;"></div>
<div style="left:382px;top:165.0px;width:1.8px;height:0.9px;background:#555;"></div>
<div style="left:382px;top:169.0px;width:1.8px;height:0.9px;background:#555;"></div>
<div style="left:382px;top:173.0px;width:1.8px;height:0.9px;background:#555;"></div>
<div style="left:382px;top:177.0px;width:1.8px;height:0.9px;background:#555;"></div>
<div style="left:382px;top:181.0px;width:1.8px;height:0.9px;background:#555;"></div>
<div style="left:382px;top:185.0px;width:1.8px;height:0.9px;background:#555;"></div>
<div style="left:394.2px;top:137.0px;width:0.9px;height:0.9px;background:#555;"></div>
<div style="left:394.2px;top:141.0px;width:0.9px;height:0.9px;background:#555;"></div>
<div style="left:394.2px;top:145.0px;width:0.9px;height:0.9px;background:#555;"></div>
<div style="left:394.2px;top:149.0px;width:0.9px;height:0.9px;background:#555;"></div>
<div style="left:394.2px;top:153.0px;width:0.9px;height:0.9px;background:#555;"></div>
<div style="left:394.2px;top:157.0px;width:0.9px;height:0.9px;background:#555;"></div>
<div style="left:394.2px;top:161.0px;width:0.9px;height:0.9px;background:#555;"></div>
<div style="left:394.2px;top:165.0px;width:0.9px;height:0.9px;background:#555;"></div>
<div style="left:394.2px;top:169.0px;width:0.9px;height:0.9px;background:#555;"></div>
<div style="left:394.2px;top:173.0px;width:0.9px;height:0.9px;background:#555;"></div>
<div style="left:394.2px;top:177.0px;width:0.9px;height:0.9px;background:#555;"></div>
<div style="left:394.2px;top:181.0px;width:0.9px;height:0.9px;background:#555;"></div>
<div style="left:394.2px;top:185.0px;width:0.9px;height:0.9px;background:#555;"></div>
<div style="left:387.45px;top:136px;width:2px;height:50px;background:#b8b8b8;border-left:0.7px solid #888;border-right:0.7px solid #fff;"></div>
<svg style="position:absolute;left:383.45px;top:159.8px" width="11" height="5.5" viewBox="0 0 11 5.5"><path d="M0.4 0.4 H8 L10.5 2.7 L8 5.1 H0.4 Z" fill="#f4f4f4" stroke="#7a7a7a" stroke-width="0.8"/><path d="M1 1 H7.7" stroke="#fff" stroke-width="0.7"/></svg>
<div style="left:397px;top:52px;width:16.5px;height:72.5px;border:1px solid #d5d9dd;border-radius:2px;box-sizing:border-box;"></div>
<div class="t" style="left:400px;top:48px;height:8px;line-height:8px;padding:0 1px;background:#f0f0f0;font-size:5.8px;color:#000">RF</div>
<div style="left:397px;top:129px;width:16.5px;height:74px;border:1px solid #d5d9dd;border-radius:2px;box-sizing:border-box;"></div>
<div class="t" style="left:400px;top:125px;height:8px;line-height:8px;padding:0 1px;background:#f0f0f0;font-size:5.8px;color:#000">NR</div>
<div style="left:400px;top:60.0px;width:1.8px;height:0.9px;background:#555;"></div>
<div style="left:400px;top:63.916666666666664px;width:1.8px;height:0.9px;background:#555;"></div>
<div style="left:400px;top:67.83333333333333px;width:1.8px;height:0.9px;background:#555;"></div>
<div style="left:400px;top:71.75px;width:1.8px;height:0.9px;background:#555;"></div>
<div style="left:400px;top:75.66666666666667px;width:1.8px;height:0.9px;background:#555;"></div>
<div style="left:400px;top:79.58333333333333px;width:1.8px;height:0.9px;background:#555;"></div>
<div style="left:400px;top:83.5px;width:1.8px;height:0.9px;background:#555;"></div>
<div style="left:400px;top:87.41666666666667px;width:1.8px;height:0.9px;background:#555;"></div>
<div style="left:400px;top:91.33333333333333px;width:1.8px;height:0.9px;background:#555;"></div>
<div style="left:400px;top:95.25px;width:1.8px;height:0.9px;background:#555;"></div>
<div style="left:400px;top:99.16666666666666px;width:1.8px;height:0.9px;background:#555;"></div>
<div style="left:400px;top:103.08333333333334px;width:1.8px;height:0.9px;background:#555;"></div>
<div style="left:400px;top:107.0px;width:1.8px;height:0.9px;background:#555;"></div>
<div style="left:412.2px;top:60.0px;width:0.9px;height:0.9px;background:#555;"></div>
<div style="left:412.2px;top:63.916666666666664px;width:0.9px;height:0.9px;background:#555;"></div>
<div style="left:412.2px;top:67.83333333333333px;width:0.9px;height:0.9px;background:#555;"></div>
<div style="left:412.2px;top:71.75px;width:0.9px;height:0.9px;background:#555;"></div>
<div style="left:412.2px;top:75.66666666666667px;width:0.9px;height:0.9px;background:#555;"></div>
<div style="left:412.2px;top:79.58333333333333px;width:0.9px;height:0.9px;background:#555;"></div>
<div style="left:412.2px;top:83.5px;width:0.9px;height:0.9px;background:#555;"></div>
<div style="left:412.2px;top:87.41666666666667px;width:0.9px;height:0.9px;background:#555;"></div>
<div style="left:412.2px;top:91.33333333333333px;width:0.9px;height:0.9px;background:#555;"></div>
<div style="left:412.2px;top:95.25px;width:0.9px;height:0.9px;background:#555;"></div>
<div style="left:412.2px;top:99.16666666666666px;width:0.9px;height:0.9px;background:#555;"></div>
<div style="left:412.2px;top:103.08333333333334px;width:0.9px;height:0.9px;background:#555;"></div>
<div style="left:412.2px;top:107.0px;width:0.9px;height:0.9px;background:#555;"></div>
<div style="left:405.45px;top:59px;width:2px;height:49px;background:#b8b8b8;border-left:0.7px solid #888;border-right:0.7px solid #fff;"></div>
<svg style="position:absolute;left:401.45px;top:106.3px" width="11" height="5.5" viewBox="0 0 11 5.5"><path d="M0.4 0.4 H8 L10.5 2.7 L8 5.1 H0.4 Z" fill="#f4f4f4" stroke="#7a7a7a" stroke-width="0.8"/><path d="M1 1 H7.7" stroke="#fff" stroke-width="0.7"/></svg>
<div style="left:400px;top:137.0px;width:1.8px;height:0.9px;background:#555;"></div>
<div style="left:400px;top:141.0px;width:1.8px;height:0.9px;background:#555;"></div>
<div style="left:400px;top:145.0px;width:1.8px;height:0.9px;background:#555;"></div>
<div style="left:400px;top:149.0px;width:1.8px;height:0.9px;background:#555;"></div>
<div style="left:400px;top:153.0px;width:1.8px;height:0.9px;background:#555;"></div>
<div style="left:400px;top:157.0px;width:1.8px;height:0.9px;background:#555;"></div>
<div style="left:400px;top:161.0px;width:1.8px;height:0.9px;background:#555;"></div>
<div style="left:400px;top:165.0px;width:1.8px;height:0.9px;background:#555;"></div>
<div style="left:400px;top:169.0px;width:1.8px;height:0.9px;background:#555;"></div>
<div style="left:400px;top:173.0px;width:1.8px;height:0.9px;background:#555;"></div>
<div style="left:400px;top:177.0px;width:1.8px;height:0.9px;background:#555;"></div>
<div style="left:400px;top:181.0px;width:1.8px;height:0.9px;background:#555;"></div>
<div style="left:400px;top:185.0px;width:1.8px;height:0.9px;background:#555;"></div>
<div style="left:412.2px;top:137.0px;width:0.9px;height:0.9px;background:#555;"></div>
<div style="left:412.2px;top:141.0px;width:0.9px;height:0.9px;background:#555;"></div>
<div style="left:412.2px;top:145.0px;width:0.9px;height:0.9px;background:#555;"></div>
<div style="left:412.2px;top:149.0px;width:0.9px;height:0.9px;background:#555;"></div>
<div style="left:412.2px;top:153.0px;width:0.9px;height:0.9px;background:#555;"></div>
<div style="left:412.2px;top:157.0px;width:0.9px;height:0.9px;background:#555;"></div>
<div style="left:412.2px;top:161.0px;width:0.9px;height:0.9px;background:#555;"></div>
<div style="left:412.2px;top:165.0px;width:0.9px;height:0.9px;background:#555;"></div>
<div style="left:412.2px;top:169.0px;width:0.9px;height:0.9px;background:#555;"></div>
<div style="left:412.2px;top:173.0px;width:0.9px;height:0.9px;background:#555;"></div>
<div style="left:412.2px;top:177.0px;width:0.9px;height:0.9px;background:#555;"></div>
<div style="left:412.2px;top:181.0px;width:0.9px;height:0.9px;background:#555;"></div>
<div style="left:412.2px;top:185.0px;width:0.9px;height:0.9px;background:#555;"></div>
<div style="left:405.45px;top:136px;width:2px;height:50px;background:#b8b8b8;border-left:0.7px solid #888;border-right:0.7px solid #fff;"></div>
<svg style="position:absolute;left:401.45px;top:150.8px" width="11" height="5.5" viewBox="0 0 11 5.5"><path d="M0.4 0.4 H8 L10.5 2.7 L8 5.1 H0.4 Z" fill="#f4f4f4" stroke="#7a7a7a" stroke-width="0.8"/><path d="M1 1 H7.7" stroke="#fff" stroke-width="0.7"/></svg>
<div style="left:415.5px;top:52px;width:16.5px;height:72.5px;border:1px solid #d5d9dd;border-radius:2px;box-sizing:border-box;"></div>
<div class="t" style="left:416.5px;top:48px;height:8px;line-height:8px;padding:0 1px;background:#f0f0f0;font-size:5.8px;color:#000">Notch</div>
<div style="left:415.5px;top:129px;width:16.5px;height:74px;border:1px solid #d5d9dd;border-radius:2px;box-sizing:border-box;"></div>
<div class="t" style="left:416.5px;top:125px;height:8px;line-height:8px;padding:0 1px;background:#f0f0f0;font-size:5.8px;color:#000">Keyer</div>
<div style="left:418.5px;top:60.0px;width:1.8px;height:0.9px;background:#555;"></div>
<div style="left:418.5px;top:63.916666666666664px;width:1.8px;height:0.9px;background:#555;"></div>
<div style="left:418.5px;top:67.83333333333333px;width:1.8px;height:0.9px;background:#555;"></div>
<div style="left:418.5px;top:71.75px;width:1.8px;height:0.9px;background:#555;"></div>
<div style="left:418.5px;top:75.66666666666667px;width:1.8px;height:0.9px;background:#555;"></div>
<div style="left:418.5px;top:79.58333333333333px;width:1.8px;height:0.9px;background:#555;"></div>
<div style="left:418.5px;top:83.5px;width:1.8px;height:0.9px;background:#555;"></div>
<div style="left:418.5px;top:87.41666666666667px;width:1.8px;height:0.9px;background:#555;"></div>
<div style="left:418.5px;top:91.33333333333333px;width:1.8px;height:0.9px;background:#555;"></div>
<div style="left:418.5px;top:95.25px;width:1.8px;height:0.9px;background:#555;"></div>
<div style="left:418.5px;top:99.16666666666666px;width:1.8px;height:0.9px;background:#555;"></div>
<div style="left:418.5px;top:103.08333333333334px;width:1.8px;height:0.9px;background:#555;"></div>
<div style="left:418.5px;top:107.0px;width:1.8px;height:0.9px;background:#555;"></div>
<div style="left:430.7px;top:60.0px;width:0.9px;height:0.9px;background:#555;"></div>
<div style="left:430.7px;top:63.916666666666664px;width:0.9px;height:0.9px;background:#555;"></div>
<div style="left:430.7px;top:67.83333333333333px;width:0.9px;height:0.9px;background:#555;"></div>
<div style="left:430.7px;top:71.75px;width:0.9px;height:0.9px;background:#555;"></div>
<div style="left:430.7px;top:75.66666666666667px;width:0.9px;height:0.9px;background:#555;"></div>
<div style="left:430.7px;top:79.58333333333333px;width:0.9px;height:0.9px;background:#555;"></div>
<div style="left:430.7px;top:83.5px;width:0.9px;height:0.9px;background:#555;"></div>
<div style="left:430.7px;top:87.41666666666667px;width:0.9px;height:0.9px;background:#555;"></div>
<div style="left:430.7px;top:91.33333333333333px;width:0.9px;height:0.9px;background:#555;"></div>
<div style="left:430.7px;top:95.25px;width:0.9px;height:0.9px;background:#555;"></div>
<div style="left:430.7px;top:99.16666666666666px;width:0.9px;height:0.9px;background:#555;"></div>
<div style="left:430.7px;top:103.08333333333334px;width:0.9px;height:0.9px;background:#555;"></div>
<div style="left:430.7px;top:107.0px;width:0.9px;height:0.9px;background:#555;"></div>
<div style="left:423.95px;top:59px;width:2px;height:49px;background:#b8b8b8;border-left:0.7px solid #888;border-right:0.7px solid #fff;"></div>
<svg style="position:absolute;left:419.95px;top:82.3px" width="11" height="5.5" viewBox="0 0 11 5.5"><path d="M0.4 0.4 H8 L10.5 2.7 L8 5.1 H0.4 Z" fill="#f4f4f4" stroke="#7a7a7a" stroke-width="0.8"/><path d="M1 1 H7.7" stroke="#fff" stroke-width="0.7"/></svg>
<div style="left:418.5px;top:137.0px;width:1.8px;height:0.9px;background:#555;"></div>
<div style="left:418.5px;top:141.0px;width:1.8px;height:0.9px;background:#555;"></div>
<div style="left:418.5px;top:145.0px;width:1.8px;height:0.9px;background:#555;"></div>
<div style="left:418.5px;top:149.0px;width:1.8px;height:0.9px;background:#555;"></div>
<div style="left:418.5px;top:153.0px;width:1.8px;height:0.9px;background:#555;"></div>
<div style="left:418.5px;top:157.0px;width:1.8px;height:0.9px;background:#555;"></div>
<div style="left:418.5px;top:161.0px;width:1.8px;height:0.9px;background:#555;"></div>
<div style="left:418.5px;top:165.0px;width:1.8px;height:0.9px;background:#555;"></div>
<div style="left:418.5px;top:169.0px;width:1.8px;height:0.9px;background:#555;"></div>
<div style="left:418.5px;top:173.0px;width:1.8px;height:0.9px;background:#555;"></div>
<div style="left:418.5px;top:177.0px;width:1.8px;height:0.9px;background:#555;"></div>
<div style="left:418.5px;top:181.0px;width:1.8px;height:0.9px;background:#555;"></div>
<div style="left:418.5px;top:185.0px;width:1.8px;height:0.9px;background:#555;"></div>
<div style="left:430.7px;top:137.0px;width:0.9px;height:0.9px;background:#555;"></div>
<div style="left:430.7px;top:141.0px;width:0.9px;height:0.9px;background:#555;"></div>
<div style="left:430.7px;top:145.0px;width:0.9px;height:0.9px;background:#555;"></div>
<div style="left:430.7px;top:149.0px;width:0.9px;height:0.9px;background:#555;"></div>
<div style="left:430.7px;top:153.0px;width:0.9px;height:0.9px;background:#555;"></div>
<div style="left:430.7px;top:157.0px;width:0.9px;height:0.9px;background:#555;"></div>
<div style="left:430.7px;top:161.0px;width:0.9px;height:0.9px;background:#555;"></div>
<div style="left:430.7px;top:165.0px;width:0.9px;height:0.9px;background:#555;"></div>
<div style="left:430.7px;top:169.0px;width:0.9px;height:0.9px;background:#555;"></div>
<div style="left:430.7px;top:173.0px;width:0.9px;height:0.9px;background:#555;"></div>
<div style="left:430.7px;top:177.0px;width:0.9px;height:0.9px;background:#555;"></div>
<div style="left:430.7px;top:181.0px;width:0.9px;height:0.9px;background:#555;"></div>
<div style="left:430.7px;top:185.0px;width:0.9px;height:0.9px;background:#555;"></div>
<div style="left:423.95px;top:136px;width:2px;height:50px;background:#b8b8b8;border-left:0.7px solid #888;border-right:0.7px solid #fff;"></div>
<svg style="position:absolute;left:419.95px;top:180.8px" width="11" height="5.5" viewBox="0 0 11 5.5"><path d="M0.4 0.4 H8 L10.5 2.7 L8 5.1 H0.4 Z" fill="#f4f4f4" stroke="#7a7a7a" stroke-width="0.8"/><path d="M1 1 H7.7" stroke="#fff" stroke-width="0.7"/></svg>
<div style="left:433.5px;top:52px;width:16.5px;height:72.5px;border:1px solid #d5d9dd;border-radius:2px;box-sizing:border-box;"></div>
<div class="t" style="left:436.5px;top:48px;height:8px;line-height:8px;padding:0 1px;background:#f0f0f0;font-size:5.8px;color:#000">Bal</div>
<div style="left:433.5px;top:129px;width:16.5px;height:74px;border:1px solid #d5d9dd;border-radius:2px;box-sizing:border-box;"></div>
<div class="t" style="left:436.5px;top:125px;height:8px;line-height:8px;padding:0 1px;background:#f0f0f0;font-size:5.8px;color:#000">PW</div>
<div style="left:436.5px;top:60.0px;width:1.8px;height:0.9px;background:#555;"></div>
<div style="left:436.5px;top:63.916666666666664px;width:1.8px;height:0.9px;background:#555;"></div>
<div style="left:436.5px;top:67.83333333333333px;width:1.8px;height:0.9px;background:#555;"></div>
<div style="left:436.5px;top:71.75px;width:1.8px;height:0.9px;background:#555;"></div>
<div style="left:436.5px;top:75.66666666666667px;width:1.8px;height:0.9px;background:#555;"></div>
<div style="left:436.5px;top:79.58333333333333px;width:1.8px;height:0.9px;background:#555;"></div>
<div style="left:436.5px;top:83.5px;width:1.8px;height:0.9px;background:#555;"></div>
<div style="left:436.5px;top:87.41666666666667px;width:1.8px;height:0.9px;background:#555;"></div>
<div style="left:436.5px;top:91.33333333333333px;width:1.8px;height:0.9px;background:#555;"></div>
<div style="left:436.5px;top:95.25px;width:1.8px;height:0.9px;background:#555;"></div>
<div style="left:436.5px;top:99.16666666666666px;width:1.8px;height:0.9px;background:#555;"></div>
<div style="left:436.5px;top:103.08333333333334px;width:1.8px;height:0.9px;background:#555;"></div>
<div style="left:436.5px;top:107.0px;width:1.8px;height:0.9px;background:#555;"></div>
<div style="left:448.7px;top:60.0px;width:0.9px;height:0.9px;background:#555;"></div>
<div style="left:448.7px;top:63.916666666666664px;width:0.9px;height:0.9px;background:#555;"></div>
<div style="left:448.7px;top:67.83333333333333px;width:0.9px;height:0.9px;background:#555;"></div>
<div style="left:448.7px;top:71.75px;width:0.9px;height:0.9px;background:#555;"></div>
<div style="left:448.7px;top:75.66666666666667px;width:0.9px;height:0.9px;background:#555;"></div>
<div style="left:448.7px;top:79.58333333333333px;width:0.9px;height:0.9px;background:#555;"></div>
<div style="left:448.7px;top:83.5px;width:0.9px;height:0.9px;background:#555;"></div>
<div style="left:448.7px;top:87.41666666666667px;width:0.9px;height:0.9px;background:#555;"></div>
<div style="left:448.7px;top:91.33333333333333px;width:0.9px;height:0.9px;background:#555;"></div>
<div style="left:448.7px;top:95.25px;width:0.9px;height:0.9px;background:#555;"></div>
<div style="left:448.7px;top:99.16666666666666px;width:0.9px;height:0.9px;background:#555;"></div>
<div style="left:448.7px;top:103.08333333333334px;width:0.9px;height:0.9px;background:#555;"></div>
<div style="left:448.7px;top:107.0px;width:0.9px;height:0.9px;background:#555;"></div>
<div style="left:441.95px;top:59px;width:2px;height:49px;background:#b8b8b8;border-left:0.7px solid #888;border-right:0.7px solid #fff;"></div>
<svg style="position:absolute;left:437.95px;top:83.3px" width="11" height="5.5" viewBox="0 0 11 5.5"><path d="M0.4 0.4 H8 L10.5 2.7 L8 5.1 H0.4 Z" fill="#f4f4f4" stroke="#7a7a7a" stroke-width="0.8"/><path d="M1 1 H7.7" stroke="#fff" stroke-width="0.7"/></svg>
<div style="left:436.5px;top:137.0px;width:1.8px;height:0.9px;background:#555;"></div>
<div style="left:436.5px;top:141.0px;width:1.8px;height:0.9px;background:#555;"></div>
<div style="left:436.5px;top:145.0px;width:1.8px;height:0.9px;background:#555;"></div>
<div style="left:436.5px;top:149.0px;width:1.8px;height:0.9px;background:#555;"></div>
<div style="left:436.5px;top:153.0px;width:1.8px;height:0.9px;background:#555;"></div>
<div style="left:436.5px;top:157.0px;width:1.8px;height:0.9px;background:#555;"></div>
<div style="left:436.5px;top:161.0px;width:1.8px;height:0.9px;background:#555;"></div>
<div style="left:436.5px;top:165.0px;width:1.8px;height:0.9px;background:#555;"></div>
<div style="left:436.5px;top:169.0px;width:1.8px;height:0.9px;background:#555;"></div>
<div style="left:436.5px;top:173.0px;width:1.8px;height:0.9px;background:#555;"></div>
<div style="left:436.5px;top:177.0px;width:1.8px;height:0.9px;background:#555;"></div>
<div style="left:436.5px;top:181.0px;width:1.8px;height:0.9px;background:#555;"></div>
<div style="left:436.5px;top:185.0px;width:1.8px;height:0.9px;background:#555;"></div>
<div style="left:448.7px;top:137.0px;width:0.9px;height:0.9px;background:#555;"></div>
<div style="left:448.7px;top:141.0px;width:0.9px;height:0.9px;background:#555;"></div>
<div style="left:448.7px;top:145.0px;width:0.9px;height:0.9px;background:#555;"></div>
<div style="left:448.7px;top:149.0px;width:0.9px;height:0.9px;background:#555;"></div>
<div style="left:448.7px;top:153.0px;width:0.9px;height:0.9px;background:#555;"></div>
<div style="left:448.7px;top:157.0px;width:0.9px;height:0.9px;background:#555;"></div>
<div style="left:448.7px;top:161.0px;width:0.9px;height:0.9px;background:#555;"></div>
<div style="left:448.7px;top:165.0px;width:0.9px;height:0.9px;background:#555;"></div>
<div style="left:448.7px;top:169.0px;width:0.9px;height:0.9px;background:#555;"></div>
<div style="left:448.7px;top:173.0px;width:0.9px;height:0.9px;background:#555;"></div>
<div style="left:448.7px;top:177.0px;width:0.9px;height:0.9px;background:#555;"></div>
<div style="left:448.7px;top:181.0px;width:0.9px;height:0.9px;background:#555;"></div>
<div style="left:448.7px;top:185.0px;width:0.9px;height:0.9px;background:#555;"></div>
<div style="left:441.95px;top:136px;width:2px;height:50px;background:#b8b8b8;border-left:0.7px solid #888;border-right:0.7px solid #fff;"></div>
<svg style="position:absolute;left:437.95px;top:138.3px" width="11" height="5.5" viewBox="0 0 11 5.5"><path d="M0.4 0.4 H8 L10.5 2.7 L8 5.1 H0.4 Z" fill="#f4f4f4" stroke="#7a7a7a" stroke-width="0.8"/><path d="M1 1 H7.7" stroke="#fff" stroke-width="0.7"/></svg>
<div style="left:452px;top:52px;width:16.5px;height:72.5px;border:1px solid #d5d9dd;border-radius:2px;box-sizing:border-box;"></div>
<div class="t" style="left:455px;top:48px;height:8px;line-height:8px;padding:0 1px;background:#f0f0f0;font-size:5.8px;color:#000">MIC</div>
<div style="left:452px;top:129px;width:16.5px;height:74px;border:1px solid #d5d9dd;border-radius:2px;box-sizing:border-box;"></div>
<div class="t" style="left:453px;top:125px;height:8px;line-height:8px;padding:0 1px;background:#f0f0f0;font-size:5.8px;color:#000">Comp</div>
<div style="left:455px;top:60.0px;width:1.8px;height:0.9px;background:#555;"></div>
<div style="left:455px;top:63.916666666666664px;width:1.8px;height:0.9px;background:#555;"></div>
<div style="left:455px;top:67.83333333333333px;width:1.8px;height:0.9px;background:#555;"></div>
<div style="left:455px;top:71.75px;width:1.8px;height:0.9px;background:#555;"></div>
<div style="left:455px;top:75.66666666666667px;width:1.8px;height:0.9px;background:#555;"></div>
<div style="left:455px;top:79.58333333333333px;width:1.8px;height:0.9px;background:#555;"></div>
<div style="left:455px;top:83.5px;width:1.8px;height:0.9px;background:#555;"></div>
<div style="left:455px;top:87.41666666666667px;width:1.8px;height:0.9px;background:#555;"></div>
<div style="left:455px;top:91.33333333333333px;width:1.8px;height:0.9px;background:#555;"></div>
<div style="left:455px;top:95.25px;width:1.8px;height:0.9px;background:#555;"></div>
<div style="left:455px;top:99.16666666666666px;width:1.8px;height:0.9px;background:#555;"></div>
<div style="left:455px;top:103.08333333333334px;width:1.8px;height:0.9px;background:#555;"></div>
<div style="left:455px;top:107.0px;width:1.8px;height:0.9px;background:#555;"></div>
<div style="left:467.2px;top:60.0px;width:0.9px;height:0.9px;background:#555;"></div>
<div style="left:467.2px;top:63.916666666666664px;width:0.9px;height:0.9px;background:#555;"></div>
<div style="left:467.2px;top:67.83333333333333px;width:0.9px;height:0.9px;background:#555;"></div>
<div style="left:467.2px;top:71.75px;width:0.9px;height:0.9px;background:#555;"></div>
<div style="left:467.2px;top:75.66666666666667px;width:0.9px;height:0.9px;background:#555;"></div>
<div style="left:467.2px;top:79.58333333333333px;width:0.9px;height:0.9px;background:#555;"></div>
<div style="left:467.2px;top:83.5px;width:0.9px;height:0.9px;background:#555;"></div>
<div style="left:467.2px;top:87.41666666666667px;width:0.9px;height:0.9px;background:#555;"></div>
<div style="left:467.2px;top:91.33333333333333px;width:0.9px;height:0.9px;background:#555;"></div>
<div style="left:467.2px;top:95.25px;width:0.9px;height:0.9px;background:#555;"></div>
<div style="left:467.2px;top:99.16666666666666px;width:0.9px;height:0.9px;background:#555;"></div>
<div style="left:467.2px;top:103.08333333333334px;width:0.9px;height:0.9px;background:#555;"></div>
<div style="left:467.2px;top:107.0px;width:0.9px;height:0.9px;background:#555;"></div>
<div style="left:460.45px;top:59px;width:2px;height:49px;background:#b8b8b8;border-left:0.7px solid #888;border-right:0.7px solid #fff;"></div>
<svg style="position:absolute;left:456.45px;top:77.3px" width="11" height="5.5" viewBox="0 0 11 5.5"><path d="M0.4 0.4 H8 L10.5 2.7 L8 5.1 H0.4 Z" fill="#f4f4f4" stroke="#7a7a7a" stroke-width="0.8"/><path d="M1 1 H7.7" stroke="#fff" stroke-width="0.7"/></svg>
<div style="left:455px;top:137.0px;width:1.8px;height:0.9px;background:#555;"></div>
<div style="left:455px;top:141.0px;width:1.8px;height:0.9px;background:#555;"></div>
<div style="left:455px;top:145.0px;width:1.8px;height:0.9px;background:#555;"></div>
<div style="left:455px;top:149.0px;width:1.8px;height:0.9px;background:#555;"></div>
<div style="left:455px;top:153.0px;width:1.8px;height:0.9px;background:#555;"></div>
<div style="left:455px;top:157.0px;width:1.8px;height:0.9px;background:#555;"></div>
<div style="left:455px;top:161.0px;width:1.8px;height:0.9px;background:#555;"></div>
<div style="left:455px;top:165.0px;width:1.8px;height:0.9px;background:#555;"></div>
<div style="left:455px;top:169.0px;width:1.8px;height:0.9px;background:#555;"></div>
<div style="left:455px;top:173.0px;width:1.8px;height:0.9px;background:#555;"></div>
<div style="left:455px;top:177.0px;width:1.8px;height:0.9px;background:#555;"></div>
<div style="left:455px;top:181.0px;width:1.8px;height:0.9px;background:#555;"></div>
<div style="left:455px;top:185.0px;width:1.8px;height:0.9px;background:#555;"></div>
<div style="left:467.2px;top:137.0px;width:0.9px;height:0.9px;background:#555;"></div>
<div style="left:467.2px;top:141.0px;width:0.9px;height:0.9px;background:#555;"></div>
<div style="left:467.2px;top:145.0px;width:0.9px;height:0.9px;background:#555;"></div>
<div style="left:467.2px;top:149.0px;width:0.9px;height:0.9px;background:#555;"></div>
<div style="left:467.2px;top:153.0px;width:0.9px;height:0.9px;background:#555;"></div>
<div style="left:467.2px;top:157.0px;width:0.9px;height:0.9px;background:#555;"></div>
<div style="left:467.2px;top:161.0px;width:0.9px;height:0.9px;background:#555;"></div>
<div style="left:467.2px;top:165.0px;width:0.9px;height:0.9px;background:#555;"></div>
<div style="left:467.2px;top:169.0px;width:0.9px;height:0.9px;background:#555;"></div>
<div style="left:467.2px;top:173.0px;width:0.9px;height:0.9px;background:#555;"></div>
<div style="left:467.2px;top:177.0px;width:0.9px;height:0.9px;background:#555;"></div>
<div style="left:467.2px;top:181.0px;width:0.9px;height:0.9px;background:#555;"></div>
<div style="left:467.2px;top:185.0px;width:0.9px;height:0.9px;background:#555;"></div>
<div style="left:460.45px;top:136px;width:2px;height:50px;background:#b8b8b8;border-left:0.7px solid #888;border-right:0.7px solid #fff;"></div>
<svg style="position:absolute;left:456.45px;top:151.8px" width="11" height="5.5" viewBox="0 0 11 5.5"><path d="M0.4 0.4 H8 L10.5 2.7 L8 5.1 H0.4 Z" fill="#f4f4f4" stroke="#7a7a7a" stroke-width="0.8"/><path d="M1 1 H7.7" stroke="#fff" stroke-width="0.7"/></svg>
<div style="left:362.5px;top:114px;width:14px;height:9.5px;background:linear-gradient(#fbfbfb,#e9e9e9);border-top:1px solid #fff;border-left:1px solid #fff;border-right:1px solid #8c8c8c;border-bottom:1px solid #8c8c8c;box-shadow:0.5px 0.5px 0 #c8c8c8;box-sizing:border-box;"></div>
<div class="t" style="left:362.5px;top:114.4px;width:14px;height:9.5px;line-height:9.5px;text-align:center;font-size:5.2px;color:#000;">&lt;&gt;</div>
<div style="left:380.5px;top:114px;width:13px;height:9.5px;background:#0000f8;border:1px solid #fff;"></div>
<div class="t" style="left:380.5px;top:114px;width:13px;height:9px;line-height:9px;text-align:center;font-size:5.5px;color:#fff;">74</div>
<div style="left:398.5px;top:114px;width:13px;height:9.5px;background:#0000f8;border:1px solid #fff;"></div>
<div class="t" style="left:398.5px;top:114px;width:13px;height:9px;line-height:9px;text-align:center;font-size:5.5px;color:#fff;">108</div>
<div style="left:435px;top:114px;width:13px;height:9.5px;background:#0000f8;border:1px solid #fff;"></div>
<div class="t" style="left:435px;top:114px;width:13px;height:9px;line-height:9px;text-align:center;font-size:5.5px;color:#fff;">0</div>
<div style="left:454.5px;top:114px;width:13px;height:9.5px;background:#0000f8;border:1px solid #fff;"></div>
<div class="t" style="left:454.5px;top:114px;width:13px;height:9px;line-height:9px;text-align:center;font-size:5.5px;color:#fff;">61</div>
<div style="left:417px;top:114px;width:14px;height:10px;background:linear-gradient(#fbfbfb,#e9e9e9);border-top:1px solid #fff;border-left:1px solid #fff;border-right:1px solid #8c8c8c;border-bottom:1px solid #8c8c8c;box-shadow:0.5px 0.5px 0 #c8c8c8;box-sizing:border-box;"></div>
<div class="t" style="left:417px;top:114.4px;width:14px;height:10px;line-height:10px;text-align:center;font-size:5.2px;color:#000;">Ntc</div>
<div style="left:362.5px;top:184px;width:14px;height:8px;background:linear-gradient(#fbfbfb,#e9e9e9);border-top:1px solid #fff;border-left:1px solid #fff;border-right:1px solid #8c8c8c;border-bottom:1px solid #8c8c8c;box-shadow:0.5px 0.5px 0 #c8c8c8;box-sizing:border-box;"></div>
<div class="t" style="left:362.5px;top:184.4px;width:14px;height:8px;line-height:8px;text-align:center;font-size:5.2px;color:#000;">&gt;&lt;</div>
<div style="left:362.5px;top:193.5px;width:14px;height:8.5px;background:linear-gradient(#fbfbfb,#e9e9e9);border-top:1px solid #fff;border-left:1px solid #fff;border-right:1px solid #8c8c8c;border-bottom:1px solid #8c8c8c;box-shadow:0.5px 0.5px 0 #c8c8c8;box-sizing:border-box;"></div>
<div class="t" style="left:362.5px;top:193.9px;width:14px;height:8.5px;line-height:8.5px;text-align:center;font-size:5.2px;color:#000;">PBT</div>
<div style="left:381px;top:191px;width:13px;height:9.5px;background:#0000f8;border:1px solid #fff;"></div>
<div class="t" style="left:381px;top:191px;width:13px;height:9px;line-height:9px;text-align:center;font-size:5.5px;color:#fff;">24</div>
<div style="left:417.5px;top:191px;width:13px;height:9.5px;background:#0000f8;border:1px solid #fff;"></div>
<div class="t" style="left:417.5px;top:191px;width:13px;height:9px;line-height:9px;text-align:center;font-size:5.5px;color:#fff;">0</div>
<div style="left:436.5px;top:191px;width:13px;height:9.5px;background:#0000f8;border:1px solid #fff;"></div>
<div class="t" style="left:436.5px;top:191px;width:13px;height:9px;line-height:9px;text-align:center;font-size:5.5px;color:#fff;">199</div>
<div style="left:454.5px;top:191px;width:13px;height:9.5px;background:#0000f8;border:1px solid #fff;"></div>
<div class="t" style="left:454.5px;top:191px;width:13px;height:9px;line-height:9px;text-align:center;font-size:5.5px;color:#fff;">68</div>
<div style="left:399px;top:190px;width:13px;height:10px;background:#f6f6f6;border-top:1px solid #9a9a9a;border-left:1px solid #9a9a9a;border-right:1px solid #fff;border-bottom:1px solid #fff;box-sizing:border-box;"></div>
<div class="t" style="left:399px;top:190px;width:13px;height:10px;line-height:10px;text-align:center;font-size:5.5px;color:#000;">NR</div>
<div style="left:471.5px;top:52px;width:38.5px;height:108px;border:1px solid #d5d9dd;border-radius:2px;box-sizing:border-box;"></div>
<div class="t" style="left:473.8px;top:56.8px;width:14px;height:9px;line-height:9px;text-align:left;font-size:6px;color:#000;">PRE</div>
<div style="left:486px;top:56.5px;width:12.5px;height:9px;background:#0000f8;border:1px solid #fff;"></div>
<div class="t" style="left:486.8px;top:56.5px;width:12px;height:9px;line-height:9px;text-align:left;font-size:5.5px;color:#fff;">1</div>
<div style="left:498.5px;top:56.5px;width:8.5px;height:9px;background:linear-gradient(#fbfbfb,#e9e9e9);border-top:1px solid #fff;border-left:1px solid #fff;border-right:1px solid #8c8c8c;border-bottom:1px solid #8c8c8c;box-shadow:0.5px 0.5px 0 #c8c8c8;box-sizing:border-box;"></div>
<div style="left:501.2px;top:60.3px;width:0;height:0;border-left:1.6px solid transparent;border-right:1.6px solid transparent;border-top:2px solid #111"></div>
<div class="t" style="left:473.8px;top:70.3px;width:14px;height:9px;line-height:9px;text-align:left;font-size:6px;color:#000;">ATT</div>
<div style="left:486px;top:70px;width:12.5px;height:9px;background:#0000f8;border:1px solid #fff;"></div>
<div class="t" style="left:486.8px;top:70px;width:12px;height:9px;line-height:9px;text-align:left;font-size:5.5px;color:#fff;">0dB</div>
<div style="left:498.5px;top:70px;width:8.5px;height:9px;background:linear-gradient(#fbfbfb,#e9e9e9);border-top:1px solid #fff;border-left:1px solid #fff;border-right:1px solid #8c8c8c;border-bottom:1px solid #8c8c8c;box-shadow:0.5px 0.5px 0 #c8c8c8;box-sizing:border-box;"></div>
<div style="left:501.2px;top:73.8px;width:0;height:0;border-left:1.6px solid transparent;border-right:1.6px solid transparent;border-top:2px solid #111"></div>
<div class="t" style="left:473.8px;top:83.3px;width:14px;height:9px;line-height:9px;text-align:left;font-size:6px;color:#000;">AGC</div>
<div style="left:486px;top:83px;width:12.5px;height:9px;background:#0000f8;border:1px solid #fff;"></div>
<div class="t" style="left:486.8px;top:83px;width:12px;height:9px;line-height:9px;text-align:left;font-size:5.5px;color:#fff;">Fast</div>
<div style="left:498.5px;top:83px;width:8.5px;height:9px;background:linear-gradient(#fbfbfb,#e9e9e9);border-top:1px solid #fff;border-left:1px solid #fff;border-right:1px solid #8c8c8c;border-bottom:1px solid #8c8c8c;box-shadow:0.5px 0.5px 0 #c8c8c8;box-sizing:border-box;"></div>
<div style="left:501.2px;top:86.8px;width:0;height:0;border-left:1.6px solid transparent;border-right:1.6px solid transparent;border-top:2px solid #111"></div>
<div style="left:473.5px;top:95px;width:14.5px;height:11px;background:#f6f6f6;border-top:1px solid #9a9a9a;border-left:1px solid #9a9a9a;border-right:1px solid #fff;border-bottom:1px solid #fff;box-sizing:border-box;"></div>
<div class="t" style="left:473.5px;top:95px;width:14.5px;height:11px;line-height:11px;text-align:center;font-size:5.9px;color:#000;">NB</div>
<div style="left:490.5px;top:95px;width:17px;height:11px;background:linear-gradient(#fbfbfb,#e9e9e9);border-top:1px solid #fff;border-left:1px solid #fff;border-right:1px solid #8c8c8c;border-bottom:1px solid #8c8c8c;box-shadow:0.5px 0.5px 0 #c8c8c8;box-sizing:border-box;"></div>
<div class="t" style="left:490.5px;top:95.4px;width:17px;height:11px;line-height:11px;text-align:center;font-size:5.9px;color:#000;">ANF</div>
<div class="t" style="left:473.8px;top:109.8px;width:14px;height:9px;line-height:9px;text-align:left;font-size:6px;color:#000;">APF</div>
<div style="left:486px;top:109.5px;width:12.5px;height:9px;background:#0000f8;border:1px solid #fff;"></div>
<div class="t" style="left:486.8px;top:109.5px;width:12px;height:9px;line-height:9px;text-align:left;font-size:5.5px;color:#fff;">OFF</div>
<div style="left:498.5px;top:109.5px;width:8.5px;height:9px;background:linear-gradient(#fbfbfb,#e9e9e9);border-top:1px solid #fff;border-left:1px solid #fff;border-right:1px solid #8c8c8c;border-bottom:1px solid #8c8c8c;box-shadow:0.5px 0.5px 0 #c8c8c8;box-sizing:border-box;"></div>
<div style="left:501.2px;top:113.3px;width:0;height:0;border-left:1.6px solid transparent;border-right:1.6px solid transparent;border-top:2px solid #111"></div>
<div class="t" style="left:473.8px;top:122.3px;width:14px;height:9px;line-height:9px;text-align:left;font-size:6px;color:#000;">RoF</div>
<div style="left:486px;top:122px;width:12.5px;height:9px;background:#0000f8;border:1px solid #fff;"></div>
<div class="t" style="left:486.8px;top:122px;width:12px;height:9px;line-height:9px;text-align:left;font-size:5.5px;color:#fff;">8K</div>
<div style="left:498.5px;top:122px;width:8.5px;height:9px;background:linear-gradient(#fbfbfb,#e9e9e9);border-top:1px solid #fff;border-left:1px solid #fff;border-right:1px solid #8c8c8c;border-bottom:1px solid #8c8c8c;box-shadow:0.5px 0.5px 0 #c8c8c8;box-sizing:border-box;"></div>
<div style="left:501.2px;top:125.8px;width:0;height:0;border-left:1.6px solid transparent;border-right:1.6px solid transparent;border-top:2px solid #111"></div>
<div style="left:474px;top:135px;width:10.5px;height:10px;background:linear-gradient(#fbfbfb,#e9e9e9);border-top:1px solid #fff;border-left:1px solid #fff;border-right:1px solid #8c8c8c;border-bottom:1px solid #8c8c8c;box-shadow:0.5px 0.5px 0 #c8c8c8;box-sizing:border-box;"></div>
<div class="t" style="left:474px;top:135.4px;width:10.5px;height:10px;line-height:10px;text-align:center;font-size:5.9px;color:#000;">TS</div>
<div style="left:486px;top:134.5px;width:12.5px;height:8.5px;background:#0000f8;border:1px solid #fff;"></div>
<div class="t" style="left:486.8px;top:134.5px;width:12px;height:8.5px;line-height:8.5px;text-align:left;font-size:5.5px;color:#fff;">100</div>
<div style="left:498.5px;top:134.5px;width:8.5px;height:8.5px;background:linear-gradient(#fbfbfb,#e9e9e9);border-top:1px solid #fff;border-left:1px solid #fff;border-right:1px solid #8c8c8c;border-bottom:1px solid #8c8c8c;box-shadow:0.5px 0.5px 0 #c8c8c8;box-sizing:border-box;"></div>
<div style="left:501.2px;top:138px;width:0;height:0;border-left:1.6px solid transparent;border-right:1.6px solid transparent;border-top:2px solid #111"></div>
<div style="left:474px;top:150.5px;width:16.5px;height:10px;background:linear-gradient(#fbfbfb,#e9e9e9);border-top:1px solid #fff;border-left:1px solid #fff;border-right:1px solid #8c8c8c;border-bottom:1px solid #8c8c8c;box-shadow:0.5px 0.5px 0 #c8c8c8;box-sizing:border-box;"></div>
<div class="t" style="left:474px;top:150.9px;width:16.5px;height:10px;line-height:10px;text-align:center;font-size:5.9px;color:#000;">Scan</div>
<div style="left:491.5px;top:150.5px;width:16.5px;height:10px;background:linear-gradient(#fbfbfb,#e9e9e9);border-top:1px solid #fff;border-left:1px solid #fff;border-right:1px solid #8c8c8c;border-bottom:1px solid #8c8c8c;box-shadow:0.5px 0.5px 0 #c8c8c8;box-sizing:border-box;"></div>
<div class="t" style="left:491.5px;top:150.9px;width:16.5px;height:10px;line-height:10px;text-align:center;font-size:5.9px;color:#000;">VSC</div>
<div style="left:473px;top:162.5px;width:37px;height:1px;background:#a0a0a0;border-bottom:0.5px solid #fff;"></div>
<div style="left:471.5px;top:164px;width:38.5px;height:40px;border:1px solid #d5d9dd;border-radius:2px;box-sizing:border-box;"></div>
<div class="t" style="left:473.8px;top:166.8px;width:12px;height:10px;line-height:10px;text-align:left;font-size:6px;color:#000;">BKI</div>
<div style="left:487px;top:166.5px;width:12px;height:9.5px;background:#0000f8;border:1px solid #fff;"></div>
<div class="t" style="left:487.5px;top:166.5px;width:12px;height:9.5px;line-height:9.5px;text-align:left;font-size:5.5px;color:#fff;">Semi</div>
<div style="left:499px;top:166.5px;width:8.5px;height:9.5px;background:linear-gradient(#fbfbfb,#e9e9e9);border-top:1px solid #fff;border-left:1px solid #fff;border-right:1px solid #8c8c8c;border-bottom:1px solid #8c8c8c;box-shadow:0.5px 0.5px 0 #c8c8c8;box-sizing:border-box;"></div>
<div style="left:501.7px;top:170.5px;width:0;height:0;border-left:1.6px solid transparent;border-right:1.6px solid transparent;border-top:2px solid #111"></div>
<div style="left:474px;top:179px;width:16.5px;height:10.5px;background:#f6f6f6;border-top:1px solid #9a9a9a;border-left:1px solid #9a9a9a;border-right:1px solid #fff;border-bottom:1px solid #fff;box-sizing:border-box;"></div>
<div class="t" style="left:474px;top:179px;width:16.5px;height:10.5px;line-height:10.5px;text-align:center;font-size:5.9px;color:#000;">Vox</div>
<div style="left:491px;top:179px;width:17px;height:10.5px;background:linear-gradient(#fbfbfb,#e9e9e9);border-top:1px solid #fff;border-left:1px solid #fff;border-right:1px solid #8c8c8c;border-bottom:1px solid #8c8c8c;box-shadow:0.5px 0.5px 0 #c8c8c8;box-sizing:border-box;"></div>
<div class="t" style="left:491px;top:179.4px;width:17px;height:10.5px;line-height:10.5px;text-align:center;font-size:5.9px;color:#000;">Com</div>
<div style="left:474px;top:191px;width:16.5px;height:11px;background:linear-gradient(#fbfbfb,#e9e9e9);border-top:1px solid #fff;border-left:1px solid #fff;border-right:1px solid #8c8c8c;border-bottom:1px solid #8c8c8c;box-shadow:0.5px 0.5px 0 #c8c8c8;box-sizing:border-box;"></div>
<div class="t" style="left:474px;top:191.4px;width:16.5px;height:11px;line-height:11px;text-align:center;font-size:5.9px;color:#000;">Mon</div>
<div style="left:491px;top:191px;width:17px;height:12px;border:1px solid #555;background:#f0f0f0;"></div>
<div style="left:492px;top:192px;width:15px;height:10px;background:linear-gradient(#fbfbfb,#e9e9e9);border-top:1px solid #fff;border-left:1px solid #fff;border-right:1px solid #8c8c8c;border-bottom:1px solid #8c8c8c;box-shadow:0.5px 0.5px 0 #c8c8c8;box-sizing:border-box;"></div>
<div style="left:495.5px;top:194px;width:8px;height:6px;border:1px solid #555;background:#ddd;"></div>
<div style="left:516.4px;top:37.2px;width:338.6px;height:454.8px;border:0.8px solid #646c76;border-radius:3px 3px 1px 1px;background:linear-gradient(#dce6f0 0px,#dce6f0 0.8px,#b7c7d8 1.8px,#c4d2e1 6px,#d6e2ee 13px,#dae5f1 100%);box-shadow:0.5px 0.5px 1px rgba(0,0,0,.25);"></div>
<div style="left:519.0px;top:50.6px;width:333.40000000000003px;height:438.8px;background:#f0f0f0;border:0.5px solid #c8d4e0;"></div>
<svg style="position:absolute;left:520.4px;top:41.2px" width="8" height="8" viewBox="0 0 16 16"><circle cx="8" cy="8" r="7" fill="#2050d0" stroke="#102060"/><path d="M4 4 Q7 6 6 9 Q4 11 5 13 M9 2 Q12 5 10 8 Q9 10 12 12" fill="none" stroke="#30c040" stroke-width="2.2"/></svg>
<div class="t" style="left:529.1999999999999px;top:41.800000000000004px;height:9px;line-height:9px;font-size:5.6px;color:#465470;white-space:nowrap">WebCluster [DXScape]</div>
<div style="left:807.0px;top:41.5px;width:13.8px;height:8px;background:linear-gradient(#dde6f0,#cad7e5);border:0.8px solid #9aaabb;border-radius:1px;"></div>
<div style="left:811.0px;top:46.400000000000006px;width:6px;height:1.2px;background:#7a8594;"></div>
<div style="left:821.9px;top:41.5px;width:13.8px;height:8px;background:linear-gradient(#dde6f0,#cad7e5);border:0.8px solid #9aaabb;border-radius:1px;"></div>
<div style="left:826.1999999999999px;top:43.800000000000004px;width:5.5px;height:3.2px;border:1px solid #7a8594;border-radius:0.8px;"></div>
<div style="left:836.8px;top:41.5px;width:13.8px;height:8px;background:linear-gradient(#dde6f0,#cad7e5);border:0.8px solid #9aaabb;border-radius:1px;"></div>
<svg style="position:absolute;left:841.1999999999999px;top:43.5px" width="5" height="4" viewBox="0 0 5 4"><path d="M0.3 0.3 L4.7 3.7 M4.7 0.3 L0.3 3.7" stroke="#6a7584" stroke-width="1.3"/></svg>
<div style="left:520px;top:52.3px;width:198px;height:10.8px;background:linear-gradient(#f8f9fa,#eceef0);border-radius:0 2px 2px 0;border-bottom:0.6px solid #d0d4d8;"></div>
<div style="left:523.8px;top:53.5px;width:0.9px;height:8.5px;background:#b8bcc0;"></div>
<svg style="position:absolute;left:525.5px;top:54px" width="8" height="8" viewBox="0 0 16 16"><path d="M1 4 L6 4 L7 2.5 L12 2.5 L12 6 L15 6 L12 14 L1 14 Z" fill="#d8c040" stroke="#6a5a10"/><path d="M3 8 L15.5 8 L12.5 14 L1 14 Z" fill="#f0e070" stroke="#6a5a10"/></svg>
<svg style="position:absolute;left:535.5px;top:54px" width="7.5" height="7.5" viewBox="0 0 16 16"><rect x="1" y="1" width="14" height="14" fill="#3a3a20" stroke="#111"/><rect x="3.5" y="1.5" width="9" height="5" fill="#e0e0a0"/><rect x="4" y="10" width="8" height="4.5" fill="#aaa040"/></svg>
<div style="left:548px;top:53.5px;width:0.8px;height:9px;background:#c4c8cc;"></div>
<div style="left:600px;top:53.5px;width:0.8px;height:9px;background:#c4c8cc;"></div>
<div style="left:654px;top:53.5px;width:0.8px;height:9px;background:#c4c8cc;"></div>
<div style="left:668px;top:53.5px;width:0.8px;height:9px;background:#c4c8cc;"></div>
<div style="left:549.5px;top:54px;width:7px;height:7.5px;background:#1a4a8a;border-radius:50%;"></div>
<div style="left:552.5px;top:54px;width:4px;height:5px;background:#e02020;border:0.6px solid #fff;"></div>
<div style="left:560.5px;top:54px;width:7px;height:7.5px;background:#1a4a8a;border-radius:50%;"></div>
<div style="left:563.5px;top:54px;width:4px;height:5px;background:#e02020;border:0.6px solid #fff;"></div>
<div style="left:568.5px;top:55px;width:7px;height:6px;background:#108080;border-radius:50% 50% 20% 20%;"></div>
<div style="left:581.5px;top:54.5px;width:7px;height:7px;background:#f0e040;border:0.8px solid #555;border-radius:50%;"></div>
<div style="left:591.5px;top:54px;width:7.5px;height:7.5px;background:#2050d0;border-radius:50%;"></div>
<div style="left:593.5px;top:56.5px;width:4px;height:2px;background:#fff;"></div>
<div style="left:601px;top:53px;width:10px;height:10px;background:#dde6f0;border:0.6px solid #9ab;"></div>
<div style="left:602.5px;top:55px;width:7px;height:6px;border:0.8px solid #333;border-top:2px solid #333;"></div>
<div style="left:614px;top:55.5px;width:6px;height:0.9px;background:#334;"></div>
<div style="left:614px;top:57.5px;width:6px;height:0.9px;background:#334;"></div>
<div style="left:614px;top:59.5px;width:6px;height:0.9px;background:#334;"></div>
<div style="left:623px;top:57px;width:7px;height:1.6px;background:#555;transform:rotate(40deg);"></div>
<div style="left:628px;top:54px;width:2px;height:2px;background:#e33;"></div>
<div style="left:632px;top:54px;width:6px;height:6px;background:#d0c020;border-radius:50%;border:0.6px solid #444;"></div>
<div style="left:634px;top:60px;width:2px;height:2px;background:#444;"></div>
<div style="left:640px;top:54px;width:7.5px;height:7.5px;background:#2050c0;border-radius:50%;"></div>
<div style="left:641px;top:57px;width:5.5px;height:1.5px;background:#fff;"></div>
<div class="t" style="left:649.5px;top:53px;width:5px;height:10px;line-height:10px;text-align:left;font-size:4px;color:#333;">▾</div>
<svg style="position:absolute;left:657.5px;top:54px" width="7.5" height="7.5" viewBox="0 0 16 16"><path d="M4.5 5.5 A3.5 3.5 0 1 1 10 8.5 L8 10 L8 12" fill="none" stroke="#222" stroke-width="3.2"/><path d="M4.5 5.5 A3.5 3.5 0 1 1 10 8.5 L8 10 L8 12" fill="none" stroke="#f0e020" stroke-width="1.6"/><rect x="6.5" y="13" width="3" height="2.5" fill="#222"/></svg>
<div style="left:670px;top:54.5px;width:8px;height:6px;background:#eee;border:0.8px solid #333;"></div>
<div style="left:671.5px;top:60px;width:5px;height:1.2px;background:#333;"></div>
<div class="t" style="left:680px;top:52.5px;width:40px;height:10px;line-height:10px;text-align:left;font-size:5.7px;color:#111;">Disconnected</div>
<div style="left:520px;top:74.5px;width:331px;height:0.8px;background:#a8b0b8;"></div>
<div style="left:520.2px;top:64.5px;width:36.3px;height:10.5px;background:#fafafa;border:0.8px solid #a8b0b8;border-bottom:none;border-radius:1px 1px 0 0;"></div>
<svg style="position:absolute;left:521.5px;top:65.8px" width="8" height="8" viewBox="0 0 16 16"><circle cx="8" cy="8" r="7" fill="#2050d0" stroke="#102060"/><path d="M4 4 Q7 6 6 9 Q4 11 5 13 M9 2 Q12 5 10 8 Q9 10 12 12" fill="none" stroke="#30c040" stroke-width="2.2"/></svg>
<div class="t" style="left:533px;top:64.8px;width:25px;height:10px;line-height:10px;text-align:left;font-size:5px;color:#222;">DX Spots</div>
<div style="left:556.5px;top:65.5px;width:25px;height:9px;background:linear-gradient(#f4f4f4,#e6e6e6);border:0.8px solid #b0b8c0;border-bottom:none;"></div>
<div style="left:559px;top:66.5px;width:7.5px;height:7px;background:#2050d0;border-radius:50%;"></div>
<div style="left:561px;top:69px;width:4px;height:1.5px;background:#fff;"></div>
<div class="t" style="left:569px;top:65.5px;width:20px;height:9px;line-height:9px;text-align:left;font-size:5.4px;color:#222;">Web</div>
<div style="left:520.5px;top:76px;width:330px;height:412px;border:1px solid #8c96a0;background:#f0f0f0;"></div>
<div style="left:521.5px;top:77px;width:328.5px;height:8px;background:linear-gradient(#ffffff,#f1f2f4);border-bottom:1px solid #d5d5d5;"></div>
<div class="t" style="left:523.8px;top:77.3px;width:80px;height:8px;line-height:8px;text-align:left;font-size:5.5px;color:#000;">DX Spot</div>
<div class="t" style="left:567.8px;top:77.3px;width:80px;height:8px;line-height:8px;text-align:left;font-size:5.5px;color:#000;">Frequen...</div>
<div style="left:565.5px;top:77px;width:0.8px;height:8px;background:#d5d5d5;"></div>
<div class="t" style="left:597.8px;top:77.3px;width:80px;height:8px;line-height:8px;text-align:left;font-size:5.5px;color:#000;">Information</div>
<div style="left:595.5px;top:77px;width:0.8px;height:8px;background:#d5d5d5;"></div>
<div class="t" style="left:694.3px;top:77.3px;width:80px;height:8px;line-height:8px;text-align:left;font-size:5.5px;color:#000;">DXCC</div>
<div style="left:692.0px;top:77px;width:0.8px;height:8px;background:#d5d5d5;"></div>
<div class="t" style="left:780.8px;top:77.3px;width:80px;height:8px;line-height:8px;text-align:left;font-size:5.5px;color:#000;">DX de</div>
<div style="left:778.5px;top:77px;width:0.8px;height:8px;background:#d5d5d5;"></div>
<div class="t" style="left:811.3px;top:77.3px;width:80px;height:8px;line-height:8px;text-align:left;font-size:5.5px;color:#000;">Time</div>
<div style="left:809.0px;top:77px;width:0.8px;height:8px;background:#d5d5d5;"></div>
<div class="t" style="left:834.8px;top:77.3px;width:80px;height:8px;line-height:8px;text-align:left;font-size:5.5px;color:#000;">Dist (...</div>
<div style="left:832.5px;top:77px;width:0.8px;height:8px;background:#d5d5d5;"></div>
<div style="left:521.5px;top:85px;width:328.5px;height:394.5px;background:#0000f8;"></div>
<div style="left:521.5px;top:85px;width:328.5px;height:394.5px;overflow:hidden">
<svg style="position:absolute;left:1.5px;top:0.8999999999999915px" width="8" height="8" viewBox="0 0 16 16"><path d="M3 2 L12 13" stroke="#202020" stroke-width="4.5" stroke-linecap="round"/><path d="M3 2 L7.5 7.5" stroke="#e8d820" stroke-width="3" stroke-linecap="round"/><path d="M7.5 7.5 L12 13" stroke="#20d020" stroke-width="3" stroke-linecap="round"/><path d="M6 1 L9 4" stroke="#20b030" stroke-width="2.5"/><rect x="13" y="1" width="2.6" height="10" fill="#ff1010"/><rect x="13" y="12.5" width="2.6" height="2" fill="#e01010"/></svg>
<div class="t" style="left:11.0px;top:0.5999999999999943px;height:8px;line-height:8px;font-size:4.8px;font-weight:bold;color:#fff;">IZ4FXD</div>
<div class="t" style="left:43.5px;top:0.5999999999999943px;width:29.5px;height:8px;line-height:8px;text-align:right;font-size:4.8px;font-weight:bold;color:#fff;">3.6670</div>
<div class="t" style="left:174.5px;top:0.5999999999999943px;height:8px;line-height:8px;font-size:4.8px;font-weight:bold;color:#fff;">MNNW [Italy]</div>
<div class="t" style="left:260.5px;top:0.5999999999999943px;height:8px;line-height:8px;font-size:4.8px;font-weight:bold;color:#fff;">IW3ONI</div>
<div class="t" style="left:290.5px;top:0.5999999999999943px;height:8px;line-height:8px;font-size:4.8px;font-weight:bold;color:#fff;">17:16</div>
<div class="t" style="left:304.5px;top:0.5999999999999943px;width:25px;height:8px;line-height:8px;text-align:right;font-size:4.8px;font-weight:bold;color:#fff;">1064</div>
<svg style="position:absolute;left:1.5px;top:8.629999999999995px" width="8" height="8" viewBox="0 0 16 16"><path d="M3 2 L12 13" stroke="#202020" stroke-width="4.5" stroke-linecap="round"/><path d="M3 2 L7.5 7.5" stroke="#e8d820" stroke-width="3" stroke-linecap="round"/><path d="M7.5 7.5 L12 13" stroke="#20d020" stroke-width="3" stroke-linecap="round"/><path d="M6 1 L9 4" stroke="#20b030" stroke-width="2.5"/><rect x="13" y="1" width="2.6" height="10" fill="#ff1010"/><rect x="13" y="12.5" width="2.6" height="2" fill="#e01010"/></svg>
<div class="t" style="left:11.0px;top:8.329999999999998px;height:8px;line-height:8px;font-size:4.8px;font-weight:bold;color:#fff;">EV2000BP</div>
<div class="t" style="left:43.5px;top:8.329999999999998px;width:29.5px;height:8px;line-height:8px;text-align:right;font-size:4.8px;font-weight:bold;color:#fff;">7.0134</div>
<div class="t" style="left:78.0px;top:8.329999999999998px;height:8px;line-height:8px;font-size:4.8px;font-weight:bold;color:#fff;">cq, Special call</div>
<div class="t" style="left:174.5px;top:8.329999999999998px;height:8px;line-height:8px;font-size:4.8px;font-weight:bold;color:#fff;">MNNN [Byelorussia]</div>
<div class="t" style="left:260.5px;top:8.329999999999998px;height:8px;line-height:8px;font-size:4.8px;font-weight:bold;color:#fff;">RA9ARI</div>
<div class="t" style="left:290.5px;top:8.329999999999998px;height:8px;line-height:8px;font-size:4.8px;font-weight:bold;color:#fff;">17:14</div>
<div class="t" style="left:304.5px;top:8.329999999999998px;width:25px;height:8px;line-height:8px;text-align:right;font-size:4.8px;font-weight:bold;color:#fff;">1190</div>
<svg style="position:absolute;left:1.5px;top:16.36px" width="8" height="8" viewBox="0 0 16 16"><path d="M3 2 L12 13" stroke="#202020" stroke-width="4.5" stroke-linecap="round"/><path d="M3 2 L7.5 7.5" stroke="#e8d820" stroke-width="3" stroke-linecap="round"/><path d="M7.5 7.5 L12 13" stroke="#20d020" stroke-width="3" stroke-linecap="round"/><path d="M6 1 L9 4" stroke="#20b030" stroke-width="2.5"/><rect x="13" y="1" width="2.6" height="10" fill="#ff1010"/><rect x="13" y="12.5" width="2.6" height="2" fill="#e01010"/></svg>
<div class="t" style="left:11.0px;top:16.060000000000002px;height:8px;line-height:8px;font-size:4.8px;font-weight:bold;color:#fff;">S8/DC8MH</div>
<div class="t" style="left:43.5px;top:16.060000000000002px;width:29.5px;height:8px;line-height:8px;text-align:right;font-size:4.8px;font-weight:bold;color:#fff;">7.0150</div>
<div class="t" style="left:78.0px;top:16.060000000000002px;height:8px;line-height:8px;font-size:4.8px;font-weight:bold;color:#fff;">cq</div>
<div class="t" style="left:174.5px;top:16.060000000000002px;height:8px;line-height:8px;font-size:4.8px;font-weight:bold;color:#fff;">MNNN [Cyprus]</div>
<div class="t" style="left:260.5px;top:16.060000000000002px;height:8px;line-height:8px;font-size:4.8px;font-weight:bold;color:#fff;">5J0AH</div>
<div class="t" style="left:290.5px;top:16.060000000000002px;height:8px;line-height:8px;font-size:4.8px;font-weight:bold;color:#fff;">17:10</div>
<div class="t" style="left:304.5px;top:16.060000000000002px;width:25px;height:8px;line-height:8px;text-align:right;font-size:4.8px;font-weight:bold;color:#fff;">1060</div>
<svg style="position:absolute;left:1.5px;top:24.08999999999999px" width="8" height="8" viewBox="0 0 16 16"><path d="M3 2 L12 13" stroke="#202020" stroke-width="4.5" stroke-linecap="round"/><path d="M3 2 L7.5 7.5" stroke="#e8d820" stroke-width="3" stroke-linecap="round"/><path d="M7.5 7.5 L12 13" stroke="#20d020" stroke-width="3" stroke-linecap="round"/><path d="M6 1 L9 4" stroke="#20b030" stroke-width="2.5"/><rect x="13" y="1" width="2.6" height="10" fill="#ff1010"/><rect x="13" y="12.5" width="2.6" height="2" fill="#e01010"/></svg>
<div class="t" style="left:11.0px;top:23.789999999999992px;height:8px;line-height:8px;font-size:4.8px;font-weight:bold;color:#fff;">Z36T</div>
<div class="t" style="left:43.5px;top:23.789999999999992px;width:29.5px;height:8px;line-height:8px;text-align:right;font-size:4.8px;font-weight:bold;color:#fff;">7.0700</div>
<div class="t" style="left:78.0px;top:23.789999999999992px;height:8px;line-height:8px;font-size:4.8px;font-weight:bold;color:#fff;">Very strong 73</div>
<div class="t" style="left:174.5px;top:23.789999999999992px;height:8px;line-height:8px;font-size:4.8px;font-weight:bold;color:#fff;">MNNN [F.Y.R.O. Macedonia]</div>
<div class="t" style="left:260.5px;top:23.789999999999992px;height:8px;line-height:8px;font-size:4.8px;font-weight:bold;color:#fff;">F5ISY</div>
<div class="t" style="left:290.5px;top:23.789999999999992px;height:8px;line-height:8px;font-size:4.8px;font-weight:bold;color:#fff;">17:15</div>
<div class="t" style="left:304.5px;top:23.789999999999992px;width:25px;height:8px;line-height:8px;text-align:right;font-size:4.8px;font-weight:bold;color:#fff;">1102</div>
<svg style="position:absolute;left:1.5px;top:31.819999999999993px" width="8" height="8" viewBox="0 0 16 16"><path d="M3 2 L12 13" stroke="#202020" stroke-width="4.5" stroke-linecap="round"/><path d="M3 2 L7.5 7.5" stroke="#e8d820" stroke-width="3" stroke-linecap="round"/><path d="M7.5 7.5 L12 13" stroke="#20d020" stroke-width="3" stroke-linecap="round"/><path d="M6 1 L9 4" stroke="#20b030" stroke-width="2.5"/><rect x="13" y="1" width="2.6" height="10" fill="#ff1010"/><rect x="13" y="12.5" width="2.6" height="2" fill="#e01010"/></svg>
<div class="t" style="left:11.0px;top:31.519999999999996px;height:8px;line-height:8px;font-size:4.8px;font-weight:bold;color:#fff;">EA7HXX</div>
<div class="t" style="left:43.5px;top:31.519999999999996px;width:29.5px;height:8px;line-height:8px;text-align:right;font-size:4.8px;font-weight:bold;color:#fff;">7.0800</div>
<div class="t" style="left:78.0px;top:31.519999999999996px;height:8px;line-height:8px;font-size:4.8px;font-weight:bold;color:#fff;">SORTEO JAMON A.U.R</div>
<div class="t" style="left:174.5px;top:31.519999999999996px;height:8px;line-height:8px;font-size:4.8px;font-weight:bold;color:#fff;">MNNN [Spain]</div>
<div class="t" style="left:260.5px;top:31.519999999999996px;height:8px;line-height:8px;font-size:4.8px;font-weight:bold;color:#fff;">EA7JBQ</div>
<div class="t" style="left:290.5px;top:31.519999999999996px;height:8px;line-height:8px;font-size:4.8px;font-weight:bold;color:#fff;">17:18</div>
<div class="t" style="left:304.5px;top:31.519999999999996px;width:25px;height:8px;line-height:8px;text-align:right;font-size:4.8px;font-weight:bold;color:#fff;">1099</div>
<svg style="position:absolute;left:1.5px;top:39.55px" width="8" height="8" viewBox="0 0 16 16"><path d="M3 2 L12 13" stroke="#202020" stroke-width="4.5" stroke-linecap="round"/><path d="M3 2 L7.5 7.5" stroke="#e8d820" stroke-width="3" stroke-linecap="round"/><path d="M7.5 7.5 L12 13" stroke="#20d020" stroke-width="3" stroke-linecap="round"/><path d="M6 1 L9 4" stroke="#20b030" stroke-width="2.5"/><rect x="13" y="1" width="2.6" height="10" fill="#ff1010"/><rect x="13" y="12.5" width="2.6" height="2" fill="#e01010"/></svg>
<div class="t" style="left:11.0px;top:39.25px;height:8px;line-height:8px;font-size:4.8px;font-weight:bold;color:#fff;">EA4WIP</div>
<div class="t" style="left:43.5px;top:39.25px;width:29.5px;height:8px;line-height:8px;text-align:right;font-size:4.8px;font-weight:bold;color:#fff;">7.0870</div>
<div class="t" style="left:78.0px;top:39.25px;height:8px;line-height:8px;font-size:4.8px;font-weight:bold;color:#fff;">DIPLOMA FUENLABRADA 2 ESTACION</div>
<div class="t" style="left:174.5px;top:39.25px;height:8px;line-height:8px;font-size:4.8px;font-weight:bold;color:#fff;">MNNN [Spain]</div>
<div class="t" style="left:260.5px;top:39.25px;height:8px;line-height:8px;font-size:4.8px;font-weight:bold;color:#fff;">EC4ADW ...</div>
<div class="t" style="left:290.5px;top:39.25px;height:8px;line-height:8px;font-size:4.8px;font-weight:bold;color:#fff;">17:14</div>
<div class="t" style="left:304.5px;top:39.25px;width:25px;height:8px;line-height:8px;text-align:right;font-size:4.8px;font-weight:bold;color:#fff;">1021</div>
<svg style="position:absolute;left:1.5px;top:47.28px" width="8" height="8" viewBox="0 0 16 16"><path d="M3 2 L12 13" stroke="#202020" stroke-width="4.5" stroke-linecap="round"/><path d="M3 2 L7.5 7.5" stroke="#e8d820" stroke-width="3" stroke-linecap="round"/><path d="M7.5 7.5 L12 13" stroke="#20d020" stroke-width="3" stroke-linecap="round"/><path d="M6 1 L9 4" stroke="#20b030" stroke-width="2.5"/><rect x="13" y="1" width="2.6" height="10" fill="#ff1010"/><rect x="13" y="12.5" width="2.6" height="2" fill="#e01010"/></svg>
<div class="t" style="left:11.0px;top:46.97999999999999px;height:8px;line-height:8px;font-size:4.8px;font-weight:bold;color:#fff;">IZ3PYZ</div>
<div class="t" style="left:43.5px;top:46.97999999999999px;width:29.5px;height:8px;line-height:8px;text-align:right;font-size:4.8px;font-weight:bold;color:#fff;">7.1405</div>
<div class="t" style="left:78.0px;top:46.97999999999999px;height:8px;line-height:8px;font-size:4.8px;font-weight:bold;color:#fff;">CQ CQ DX</div>
<div class="t" style="left:174.5px;top:46.97999999999999px;height:8px;line-height:8px;font-size:4.8px;font-weight:bold;color:#fff;">MNNW [Italy]</div>
<div class="t" style="left:260.5px;top:46.97999999999999px;height:8px;line-height:8px;font-size:4.8px;font-weight:bold;color:#fff;">IZ3PYZ</div>
<div class="t" style="left:290.5px;top:46.97999999999999px;height:8px;line-height:8px;font-size:4.8px;font-weight:bold;color:#fff;">17:15</div>
<div class="t" style="left:304.5px;top:46.97999999999999px;width:25px;height:8px;line-height:8px;text-align:right;font-size:4.8px;font-weight:bold;color:#fff;">1064</div>
<svg style="position:absolute;left:1.5px;top:55.00999999999999px" width="8" height="8" viewBox="0 0 16 16"><path d="M3 2 L12 13" stroke="#202020" stroke-width="4.5" stroke-linecap="round"/><path d="M3 2 L7.5 7.5" stroke="#e8d820" stroke-width="3" stroke-linecap="round"/><path d="M7.5 7.5 L12 13" stroke="#20d020" stroke-width="3" stroke-linecap="round"/><path d="M6 1 L9 4" stroke="#20b030" stroke-width="2.5"/><rect x="13" y="1" width="2.6" height="10" fill="#ff1010"/><rect x="13" y="12.5" width="2.6" height="2" fill="#e01010"/></svg>
<div class="t" style="left:11.0px;top:54.70999999999998px;height:8px;line-height:8px;font-size:4.8px;font-weight:bold;color:#fff;">UV5EVZ/P</div>
<div class="t" style="left:43.5px;top:54.70999999999998px;width:29.5px;height:8px;line-height:8px;text-align:right;font-size:4.8px;font-weight:bold;color:#fff;">7.1480</div>
<div class="t" style="left:78.0px;top:54.70999999999998px;height:8px;line-height:8px;font-size:4.8px;font-weight:bold;color:#fff;">URFF-104</div>
<div class="t" style="left:174.5px;top:54.70999999999998px;height:8px;line-height:8px;font-size:4.8px;font-weight:bold;color:#fff;">MNNN [Ukraine]</div>
<div class="t" style="left:260.5px;top:54.70999999999998px;height:8px;line-height:8px;font-size:4.8px;font-weight:bold;color:#fff;">DZ7AB</div>
<div class="t" style="left:290.5px;top:54.70999999999998px;height:8px;line-height:8px;font-size:4.8px;font-weight:bold;color:#fff;">17:17</div>
<div class="t" style="left:304.5px;top:54.70999999999998px;width:25px;height:8px;line-height:8px;text-align:right;font-size:4.8px;font-weight:bold;color:#fff;">1193</div>
<svg style="position:absolute;left:1.5px;top:62.74000000000001px" width="8" height="8" viewBox="0 0 16 16"><path d="M3 2 L12 13" stroke="#202020" stroke-width="4.5" stroke-linecap="round"/><path d="M3 2 L7.5 7.5" stroke="#e8d820" stroke-width="3" stroke-linecap="round"/><path d="M7.5 7.5 L12 13" stroke="#20d020" stroke-width="3" stroke-linecap="round"/><path d="M6 1 L9 4" stroke="#20b030" stroke-width="2.5"/><rect x="13" y="1" width="2.6" height="10" fill="#ff1010"/><rect x="13" y="12.5" width="2.6" height="2" fill="#e01010"/></svg>
<div class="t" style="left:11.0px;top:62.44px;height:8px;line-height:8px;font-size:4.8px;font-weight:bold;color:#fff;">5R8C</div>
<div class="t" style="left:43.5px;top:62.44px;width:29.5px;height:8px;line-height:8px;text-align:right;font-size:4.8px;font-weight:bold;color:#fff;">14.0000</div>
<div class="t" style="left:174.5px;top:62.44px;height:8px;line-height:8px;font-size:4.8px;font-weight:bold;color:#fff;">MNNN [Madagascar]</div>
<div class="t" style="left:260.5px;top:62.44px;height:8px;line-height:8px;font-size:4.8px;font-weight:bold;color:#fff;">IT9FJ</div>
<div class="t" style="left:290.5px;top:62.44px;height:8px;line-height:8px;font-size:4.8px;font-weight:bold;color:#fff;">17:16</div>
<div class="t" style="left:304.5px;top:62.44px;width:25px;height:8px;line-height:8px;text-align:right;font-size:4.8px;font-weight:bold;color:#fff;">606</div>
<svg style="position:absolute;left:1.5px;top:70.47000000000003px" width="8" height="8" viewBox="0 0 16 16"><path d="M3 2 L12 13" stroke="#202020" stroke-width="4.5" stroke-linecap="round"/><path d="M3 2 L7.5 7.5" stroke="#e8d820" stroke-width="3" stroke-linecap="round"/><path d="M7.5 7.5 L12 13" stroke="#20d020" stroke-width="3" stroke-linecap="round"/><path d="M6 1 L9 4" stroke="#20b030" stroke-width="2.5"/><rect x="13" y="1" width="2.6" height="10" fill="#ff1010"/><rect x="13" y="12.5" width="2.6" height="2" fill="#e01010"/></svg>
<div class="t" style="left:11.0px;top:70.17000000000002px;height:8px;line-height:8px;font-size:4.8px;font-weight:bold;color:#fff;">5R8C</div>
<div class="t" style="left:43.5px;top:70.17000000000002px;width:29.5px;height:8px;line-height:8px;text-align:right;font-size:4.8px;font-weight:bold;color:#fff;">14.0000</div>
<div class="t" style="left:78.0px;top:70.17000000000002px;height:8px;line-height:8px;font-size:4.8px;font-weight:bold;color:#fff;">up 2</div>
<div class="t" style="left:174.5px;top:70.17000000000002px;height:8px;line-height:8px;font-size:4.8px;font-weight:bold;color:#fff;">MNNN [Madagascar]</div>
<div class="t" style="left:260.5px;top:70.17000000000002px;height:8px;line-height:8px;font-size:4.8px;font-weight:bold;color:#fff;">K2MFY</div>
<div class="t" style="left:290.5px;top:70.17000000000002px;height:8px;line-height:8px;font-size:4.8px;font-weight:bold;color:#fff;">17:07</div>
<div class="t" style="left:304.5px;top:70.17000000000002px;width:25px;height:8px;line-height:8px;text-align:right;font-size:4.8px;font-weight:bold;color:#fff;">606</div>
<svg style="position:absolute;left:1.5px;top:78.20000000000002px" width="8" height="8" viewBox="0 0 16 16"><path d="M3 2 L12 13" stroke="#202020" stroke-width="4.5" stroke-linecap="round"/><path d="M3 2 L7.5 7.5" stroke="#e8d820" stroke-width="3" stroke-linecap="round"/><path d="M7.5 7.5 L12 13" stroke="#20d020" stroke-width="3" stroke-linecap="round"/><path d="M6 1 L9 4" stroke="#20b030" stroke-width="2.5"/><rect x="13" y="1" width="2.6" height="10" fill="#ff1010"/><rect x="13" y="12.5" width="2.6" height="2" fill="#e01010"/></svg>
<div class="t" style="left:11.0px;top:77.9px;height:8px;line-height:8px;font-size:4.8px;font-weight:bold;color:#fff;">SM6BVP</div>
<div class="t" style="left:43.5px;top:77.9px;width:29.5px;height:8px;line-height:8px;text-align:right;font-size:4.8px;font-weight:bold;color:#fff;">14.0015</div>
<div class="t" style="left:78.0px;top:77.9px;height:8px;line-height:8px;font-size:4.8px;font-weight:bold;color:#fff;">RTTY</div>
<div class="t" style="left:174.5px;top:77.9px;height:8px;line-height:8px;font-size:4.8px;font-weight:bold;color:#fff;">MNNN [Sweden]</div>
<div class="t" style="left:260.5px;top:77.9px;height:8px;line-height:8px;font-size:4.8px;font-weight:bold;color:#fff;">VE2LX</div>
<div class="t" style="left:290.5px;top:77.9px;height:8px;line-height:8px;font-size:4.8px;font-weight:bold;color:#fff;">17:15</div>
<div class="t" style="left:304.5px;top:77.9px;width:25px;height:8px;line-height:8px;text-align:right;font-size:4.8px;font-weight:bold;color:#fff;">1162</div>
<svg style="position:absolute;left:1.5px;top:85.93px" width="8" height="8" viewBox="0 0 16 16"><path d="M3 2 L12 13" stroke="#202020" stroke-width="4.5" stroke-linecap="round"/><path d="M3 2 L7.5 7.5" stroke="#e8d820" stroke-width="3" stroke-linecap="round"/><path d="M7.5 7.5 L12 13" stroke="#20d020" stroke-width="3" stroke-linecap="round"/><path d="M6 1 L9 4" stroke="#20b030" stroke-width="2.5"/><rect x="13" y="1" width="2.6" height="10" fill="#ff1010"/><rect x="13" y="12.5" width="2.6" height="2" fill="#e01010"/></svg>
<div class="t" style="left:11.0px;top:85.63px;height:8px;line-height:8px;font-size:4.8px;font-weight:bold;color:#fff;">KM5PS</div>
<div class="t" style="left:43.5px;top:85.63px;width:29.5px;height:8px;line-height:8px;text-align:right;font-size:4.8px;font-weight:bold;color:#fff;">14.0015</div>
<div class="t" style="left:78.0px;top:85.63px;height:8px;line-height:8px;font-size:4.8px;font-weight:bold;color:#fff;">RTTY</div>
<div class="t" style="left:174.5px;top:85.63px;height:8px;line-height:8px;font-size:4.8px;font-weight:bold;color:#fff;">MNNW [U.S.A.]</div>
<div class="t" style="left:260.5px;top:85.63px;height:8px;line-height:8px;font-size:4.8px;font-weight:bold;color:#fff;">VE2LX</div>
<div class="t" style="left:290.5px;top:85.63px;height:8px;line-height:8px;font-size:4.8px;font-weight:bold;color:#fff;">17:15</div>
<div class="t" style="left:304.5px;top:85.63px;width:25px;height:8px;line-height:8px;text-align:right;font-size:4.8px;font-weight:bold;color:#fff;">690</div>
<svg style="position:absolute;left:1.5px;top:93.66000000000003px" width="8" height="8" viewBox="0 0 16 16"><path d="M3 2 L12 13" stroke="#202020" stroke-width="4.5" stroke-linecap="round"/><path d="M3 2 L7.5 7.5" stroke="#e8d820" stroke-width="3" stroke-linecap="round"/><path d="M7.5 7.5 L12 13" stroke="#20d020" stroke-width="3" stroke-linecap="round"/><path d="M6 1 L9 4" stroke="#20b030" stroke-width="2.5"/><rect x="13" y="1" width="2.6" height="10" fill="#ff1010"/><rect x="13" y="12.5" width="2.6" height="2" fill="#e01010"/></svg>
<div class="t" style="left:11.0px;top:93.36000000000001px;height:8px;line-height:8px;font-size:4.8px;font-weight:bold;color:#fff;">TA7I</div>
<div class="t" style="left:43.5px;top:93.36000000000001px;width:29.5px;height:8px;line-height:8px;text-align:right;font-size:4.8px;font-weight:bold;color:#fff;">14.0904</div>
<div class="t" style="left:78.0px;top:93.36000000000001px;height:8px;line-height:8px;font-size:4.8px;font-weight:bold;color:#fff;">WAE</div>
<div class="t" style="left:174.5px;top:93.36000000000001px;height:8px;line-height:8px;font-size:4.8px;font-weight:bold;color:#fff;">MNNN [Turkey]</div>
<div class="t" style="left:260.5px;top:93.36000000000001px;height:8px;line-height:8px;font-size:4.8px;font-weight:bold;color:#fff;">F8DBF</div>
<div class="t" style="left:290.5px;top:93.36000000000001px;height:8px;line-height:8px;font-size:4.8px;font-weight:bold;color:#fff;">17:16</div>
<div class="t" style="left:304.5px;top:93.36000000000001px;width:25px;height:8px;line-height:8px;text-align:right;font-size:4.8px;font-weight:bold;color:#fff;">1099</div>
<svg style="position:absolute;left:1.5px;top:101.39000000000001px" width="8" height="8" viewBox="0 0 16 16"><path d="M3 2 L12 13" stroke="#202020" stroke-width="4.5" stroke-linecap="round"/><path d="M3 2 L7.5 7.5" stroke="#e8d820" stroke-width="3" stroke-linecap="round"/><path d="M7.5 7.5 L12 13" stroke="#20d020" stroke-width="3" stroke-linecap="round"/><path d="M6 1 L9 4" stroke="#20b030" stroke-width="2.5"/><rect x="13" y="1" width="2.6" height="10" fill="#ff1010"/><rect x="13" y="12.5" width="2.6" height="2" fill="#e01010"/></svg>
<div class="t" style="left:11.0px;top:101.09px;height:8px;line-height:8px;font-size:4.8px;font-weight:bold;color:#fff;">KH6ZM</div>
<div class="t" style="left:43.5px;top:101.09px;width:29.5px;height:8px;line-height:8px;text-align:right;font-size:4.8px;font-weight:bold;color:#fff;">14.0910</div>
<div class="t" style="left:78.0px;top:101.09px;height:8px;line-height:8px;font-size:4.8px;font-weight:bold;color:#fff;">WAE-RTTY</div>
<div class="t" style="left:174.5px;top:101.09px;height:8px;line-height:8px;font-size:4.8px;font-weight:bold;color:#fff;">MNNN [Hawaiian Island]</div>
<div class="t" style="left:260.5px;top:101.09px;height:8px;line-height:8px;font-size:4.8px;font-weight:bold;color:#fff;">DL9NCR</div>
<div class="t" style="left:290.5px;top:101.09px;height:8px;line-height:8px;font-size:4.8px;font-weight:bold;color:#fff;">17:17</div>
<div class="t" style="left:304.5px;top:101.09px;width:25px;height:8px;line-height:8px;text-align:right;font-size:4.8px;font-weight:bold;color:#fff;">590</div>
<svg style="position:absolute;left:1.5px;top:109.12px" width="8" height="8" viewBox="0 0 16 16"><path d="M3 2 L12 13" stroke="#202020" stroke-width="4.5" stroke-linecap="round"/><path d="M3 2 L7.5 7.5" stroke="#e8d820" stroke-width="3" stroke-linecap="round"/><path d="M7.5 7.5 L12 13" stroke="#20d020" stroke-width="3" stroke-linecap="round"/><path d="M6 1 L9 4" stroke="#20b030" stroke-width="2.5"/><rect x="13" y="1" width="2.6" height="10" fill="#ff1010"/><rect x="13" y="12.5" width="2.6" height="2" fill="#e01010"/></svg>
<div class="t" style="left:11.0px;top:108.82px;height:8px;line-height:8px;font-size:4.8px;font-weight:bold;color:#fff;">KH6ZM</div>
<div class="t" style="left:43.5px;top:108.82px;width:29.5px;height:8px;line-height:8px;text-align:right;font-size:4.8px;font-weight:bold;color:#fff;">14.0910</div>
<div class="t" style="left:174.5px;top:108.82px;height:8px;line-height:8px;font-size:4.8px;font-weight:bold;color:#fff;">MNNN [Hawaiian Island]</div>
<div class="t" style="left:260.5px;top:108.82px;height:8px;line-height:8px;font-size:4.8px;font-weight:bold;color:#fff;">N1GN</div>
<div class="t" style="left:290.5px;top:108.82px;height:8px;line-height:8px;font-size:4.8px;font-weight:bold;color:#fff;">17:13</div>
<div class="t" style="left:304.5px;top:108.82px;width:25px;height:8px;line-height:8px;text-align:right;font-size:4.8px;font-weight:bold;color:#fff;">590</div>
<svg style="position:absolute;left:1.5px;top:116.85000000000002px" width="8" height="8" viewBox="0 0 16 16"><path d="M3 2 L12 13" stroke="#202020" stroke-width="4.5" stroke-linecap="round"/><path d="M3 2 L7.5 7.5" stroke="#e8d820" stroke-width="3" stroke-linecap="round"/><path d="M7.5 7.5 L12 13" stroke="#20d020" stroke-width="3" stroke-linecap="round"/><path d="M6 1 L9 4" stroke="#20b030" stroke-width="2.5"/><rect x="13" y="1" width="2.6" height="10" fill="#ff1010"/><rect x="13" y="12.5" width="2.6" height="2" fill="#e01010"/></svg>
<div class="t" style="left:11.0px;top:116.55000000000001px;height:8px;line-height:8px;font-size:4.8px;font-weight:bold;color:#fff;">IW1AYD</div>
<div class="t" style="left:43.5px;top:116.55000000000001px;width:29.5px;height:8px;line-height:8px;text-align:right;font-size:4.8px;font-weight:bold;color:#fff;">14.0952</div>
<div class="t" style="left:78.0px;top:116.55000000000001px;height:8px;line-height:8px;font-size:4.8px;font-weight:bold;color:#fff;">RTTY</div>
<div class="t" style="left:174.5px;top:116.55000000000001px;height:8px;line-height:8px;font-size:4.8px;font-weight:bold;color:#fff;">MNVW [Italy]</div>
<div class="t" style="left:260.5px;top:116.55000000000001px;height:8px;line-height:8px;font-size:4.8px;font-weight:bold;color:#fff;">AL9A</div>
<div class="t" style="left:290.5px;top:116.55000000000001px;height:8px;line-height:8px;font-size:4.8px;font-weight:bold;color:#fff;">17:13</div>
<div class="t" style="left:304.5px;top:116.55000000000001px;width:25px;height:8px;line-height:8px;text-align:right;font-size:4.8px;font-weight:bold;color:#fff;">1064</div>
<svg style="position:absolute;left:1.5px;top:124.58000000000001px" width="8" height="8" viewBox="0 0 16 16"><path d="M3 2 L12 13" stroke="#202020" stroke-width="4.5" stroke-linecap="round"/><path d="M3 2 L7.5 7.5" stroke="#e8d820" stroke-width="3" stroke-linecap="round"/><path d="M7.5 7.5 L12 13" stroke="#20d020" stroke-width="3" stroke-linecap="round"/><path d="M6 1 L9 4" stroke="#20b030" stroke-width="2.5"/><rect x="13" y="1" width="2.6" height="10" fill="#ff1010"/><rect x="13" y="12.5" width="2.6" height="2" fill="#e01010"/></svg>
<div class="t" style="left:11.0px;top:124.28px;height:8px;line-height:8px;font-size:4.8px;font-weight:bold;color:#fff;">W2YC</div>
<div class="t" style="left:43.5px;top:124.28px;width:29.5px;height:8px;line-height:8px;text-align:right;font-size:4.8px;font-weight:bold;color:#fff;">14.1041</div>
<div class="t" style="left:78.0px;top:124.28px;height:8px;line-height:8px;font-size:4.8px;font-weight:bold;color:#fff;">RTTY WAE</div>
<div class="t" style="left:174.5px;top:124.28px;height:8px;line-height:8px;font-size:4.8px;font-weight:bold;color:#fff;">MNNW [U.S.A.]</div>
<div class="t" style="left:260.5px;top:124.28px;height:8px;line-height:8px;font-size:4.8px;font-weight:bold;color:#fff;">OZ1AXG ...</div>
<div class="t" style="left:290.5px;top:124.28px;height:8px;line-height:8px;font-size:4.8px;font-weight:bold;color:#fff;">17:18</div>
<div class="t" style="left:304.5px;top:124.28px;width:25px;height:8px;line-height:8px;text-align:right;font-size:4.8px;font-weight:bold;color:#fff;">816</div>
<svg style="position:absolute;left:1.5px;top:132.31px" width="8" height="8" viewBox="0 0 16 16"><path d="M3 2 L12 13" stroke="#202020" stroke-width="4.5" stroke-linecap="round"/><path d="M3 2 L7.5 7.5" stroke="#e8d820" stroke-width="3" stroke-linecap="round"/><path d="M7.5 7.5 L12 13" stroke="#20d020" stroke-width="3" stroke-linecap="round"/><path d="M6 1 L9 4" stroke="#20b030" stroke-width="2.5"/><rect x="13" y="1" width="2.6" height="10" fill="#ff1010"/><rect x="13" y="12.5" width="2.6" height="2" fill="#e01010"/></svg>
<div class="t" style="left:11.0px;top:132.01px;height:8px;line-height:8px;font-size:4.8px;font-weight:bold;color:#fff;">VU3BPZ/P</div>
<div class="t" style="left:43.5px;top:132.01px;width:29.5px;height:8px;line-height:8px;text-align:right;font-size:4.8px;font-weight:bold;color:#fff;">14.1880</div>
<div class="t" style="left:78.0px;top:132.01px;height:8px;line-height:8px;font-size:4.8px;font-weight:bold;color:#fff;">Bharati Base WAP 8IO-04</div>
<div class="t" style="left:174.5px;top:132.01px;height:8px;line-height:8px;font-size:4.8px;font-weight:bold;color:#fff;">WWWW [India]</div>
<div class="t" style="left:260.5px;top:132.01px;height:8px;line-height:8px;font-size:4.8px;font-weight:bold;color:#fff;">IK1NEG</div>
<div class="t" style="left:290.5px;top:132.01px;height:8px;line-height:8px;font-size:4.8px;font-weight:bold;color:#fff;">17:16</div>
<div class="t" style="left:304.5px;top:132.01px;width:25px;height:8px;line-height:8px;text-align:right;font-size:4.8px;font-weight:bold;color:#fff;">901</div>
<svg style="position:absolute;left:1.5px;top:140.04000000000002px" width="8" height="8" viewBox="0 0 16 16"><path d="M3 2 L12 13" stroke="#202020" stroke-width="4.5" stroke-linecap="round"/><path d="M3 2 L7.5 7.5" stroke="#e8d820" stroke-width="3" stroke-linecap="round"/><path d="M7.5 7.5 L12 13" stroke="#20d020" stroke-width="3" stroke-linecap="round"/><path d="M6 1 L9 4" stroke="#20b030" stroke-width="2.5"/><rect x="13" y="1" width="2.6" height="10" fill="#ff1010"/><rect x="13" y="12.5" width="2.6" height="2" fill="#e01010"/></svg>
<div class="t" style="left:11.0px;top:139.74px;height:8px;line-height:8px;font-size:4.8px;font-weight:bold;color:#fff;">ZS6IO</div>
<div class="t" style="left:43.5px;top:139.74px;width:29.5px;height:8px;line-height:8px;text-align:right;font-size:4.8px;font-weight:bold;color:#fff;">14.1880</div>
<div class="t" style="left:78.0px;top:139.74px;height:8px;line-height:8px;font-size:4.8px;font-weight:bold;color:#fff;">SP ,TNX QSO</div>
<div class="t" style="left:174.5px;top:139.74px;height:8px;line-height:8px;font-size:4.8px;font-weight:bold;color:#fff;">MNNW [South Africa]</div>
<div class="t" style="left:260.5px;top:139.74px;height:8px;line-height:8px;font-size:4.8px;font-weight:bold;color:#fff;">ZL1KY</div>
<div class="t" style="left:290.5px;top:139.74px;height:8px;line-height:8px;font-size:4.8px;font-weight:bold;color:#fff;">17:18</div>
<div class="t" style="left:304.5px;top:139.74px;width:25px;height:8px;line-height:8px;text-align:right;font-size:4.8px;font-weight:bold;color:#fff;">626</div>
<svg style="position:absolute;left:1.5px;top:147.77px" width="8" height="8" viewBox="0 0 16 16"><path d="M3 2 L12 13" stroke="#202020" stroke-width="4.5" stroke-linecap="round"/><path d="M3 2 L7.5 7.5" stroke="#e8d820" stroke-width="3" stroke-linecap="round"/><path d="M7.5 7.5 L12 13" stroke="#20d020" stroke-width="3" stroke-linecap="round"/><path d="M6 1 L9 4" stroke="#20b030" stroke-width="2.5"/><rect x="13" y="1" width="2.6" height="10" fill="#ff1010"/><rect x="13" y="12.5" width="2.6" height="2" fill="#e01010"/></svg>
<div class="t" style="left:11.0px;top:147.47px;height:8px;line-height:8px;font-size:4.8px;font-weight:bold;color:#fff;">V84SMD</div>
<div class="t" style="left:43.5px;top:147.47px;width:29.5px;height:8px;line-height:8px;text-align:right;font-size:4.8px;font-weight:bold;color:#fff;">14.2000</div>
<div class="t" style="left:78.0px;top:147.47px;height:8px;line-height:8px;font-size:4.8px;font-weight:bold;color:#fff;">tnx qso.73!</div>
<div class="t" style="left:174.5px;top:147.47px;height:8px;line-height:8px;font-size:4.8px;font-weight:bold;color:#fff;">MNNN [Brunei]</div>
<div class="t" style="left:260.5px;top:147.47px;height:8px;line-height:8px;font-size:4.8px;font-weight:bold;color:#fff;">RN7G</div>
<div class="t" style="left:290.5px;top:147.47px;height:8px;line-height:8px;font-size:4.8px;font-weight:bold;color:#fff;">17:15</div>
<div class="t" style="left:304.5px;top:147.47px;width:25px;height:8px;line-height:8px;text-align:right;font-size:4.8px;font-weight:bold;color:#fff;">682</div>
<svg style="position:absolute;left:1.5px;top:155.50000000000003px" width="8" height="8" viewBox="0 0 16 16"><path d="M3 2 L12 13" stroke="#202020" stroke-width="4.5" stroke-linecap="round"/><path d="M3 2 L7.5 7.5" stroke="#e8d820" stroke-width="3" stroke-linecap="round"/><path d="M7.5 7.5 L12 13" stroke="#20d020" stroke-width="3" stroke-linecap="round"/><path d="M6 1 L9 4" stroke="#20b030" stroke-width="2.5"/><rect x="13" y="1" width="2.6" height="10" fill="#ff1010"/><rect x="13" y="12.5" width="2.6" height="2" fill="#e01010"/></svg>
<div class="t" style="left:11.0px;top:155.20000000000002px;height:8px;line-height:8px;font-size:4.8px;font-weight:bold;color:#fff;">V84SMD</div>
<div class="t" style="left:43.5px;top:155.20000000000002px;width:29.5px;height:8px;line-height:8px;text-align:right;font-size:4.8px;font-weight:bold;color:#fff;">14.2000</div>
<div class="t" style="left:78.0px;top:155.20000000000002px;height:8px;line-height:8px;font-size:4.8px;font-weight:bold;color:#fff;">SIMPLEX 59</div>
<div class="t" style="left:174.5px;top:155.20000000000002px;height:8px;line-height:8px;font-size:4.8px;font-weight:bold;color:#fff;">MNNN [Brunei]</div>
<div class="t" style="left:260.5px;top:155.20000000000002px;height:8px;line-height:8px;font-size:4.8px;font-weight:bold;color:#fff;">F5RAB</div>
<div class="t" style="left:290.5px;top:155.20000000000002px;height:8px;line-height:8px;font-size:4.8px;font-weight:bold;color:#fff;">17:14</div>
<div class="t" style="left:304.5px;top:155.20000000000002px;width:25px;height:8px;line-height:8px;text-align:right;font-size:4.8px;font-weight:bold;color:#fff;">682</div>
<svg style="position:absolute;left:1.5px;top:163.23000000000002px" width="8" height="8" viewBox="0 0 16 16"><path d="M3 2 L12 13" stroke="#202020" stroke-width="4.5" stroke-linecap="round"/><path d="M3 2 L7.5 7.5" stroke="#e8d820" stroke-width="3" stroke-linecap="round"/><path d="M7.5 7.5 L12 13" stroke="#20d020" stroke-width="3" stroke-linecap="round"/><path d="M6 1 L9 4" stroke="#20b030" stroke-width="2.5"/><rect x="13" y="1" width="2.6" height="10" fill="#ff1010"/><rect x="13" y="12.5" width="2.6" height="2" fill="#e01010"/></svg>
<div class="t" style="left:11.0px;top:162.93px;height:8px;line-height:8px;font-size:4.8px;font-weight:bold;color:#fff;">M6EZ/NA066</div>
<div class="t" style="left:43.5px;top:162.93px;width:29.5px;height:8px;line-height:8px;text-align:right;font-size:4.8px;font-weight:bold;color:#fff;">14.2570</div>
<div class="t" style="left:174.5px;top:162.93px;height:8px;line-height:8px;font-size:4.8px;font-weight:bold;color:#fff;">MNNW [U.S.A.]</div>
<div class="t" style="left:260.5px;top:162.93px;height:8px;line-height:8px;font-size:4.8px;font-weight:bold;color:#fff;">N6FH</div>
<div class="t" style="left:290.5px;top:162.93px;height:8px;line-height:8px;font-size:4.8px;font-weight:bold;color:#fff;">17:14</div>
<div class="t" style="left:304.5px;top:162.93px;width:25px;height:8px;line-height:8px;text-align:right;font-size:4.8px;font-weight:bold;color:#fff;">758</div>
<svg style="position:absolute;left:1.5px;top:170.95999999999998px" width="8" height="8" viewBox="0 0 16 16"><path d="M3 2 L12 13" stroke="#202020" stroke-width="4.5" stroke-linecap="round"/><path d="M3 2 L7.5 7.5" stroke="#e8d820" stroke-width="3" stroke-linecap="round"/><path d="M7.5 7.5 L12 13" stroke="#20d020" stroke-width="3" stroke-linecap="round"/><path d="M6 1 L9 4" stroke="#20b030" stroke-width="2.5"/><rect x="13" y="1" width="2.6" height="10" fill="#ff1010"/><rect x="13" y="12.5" width="2.6" height="2" fill="#e01010"/></svg>
<div class="t" style="left:11.0px;top:170.65999999999997px;height:8px;line-height:8px;font-size:4.8px;font-weight:bold;color:#fff;">W3IZ</div>
<div class="t" style="left:43.5px;top:170.65999999999997px;width:29.5px;height:8px;line-height:8px;text-align:right;font-size:4.8px;font-weight:bold;color:#fff;">18.0829</div>
<div class="t" style="left:78.0px;top:170.65999999999997px;height:8px;line-height:8px;font-size:4.8px;font-weight:bold;color:#fff;">CQ</div>
<div class="t" style="left:174.5px;top:170.65999999999997px;height:8px;line-height:8px;font-size:4.8px;font-weight:bold;color:#fff;">MNNW [U.S.A.]</div>
<div class="t" style="left:260.5px;top:170.65999999999997px;height:8px;line-height:8px;font-size:4.8px;font-weight:bold;color:#fff;">EA8TL</div>
<div class="t" style="left:290.5px;top:170.65999999999997px;height:8px;line-height:8px;font-size:4.8px;font-weight:bold;color:#fff;">17:14</div>
<div class="t" style="left:304.5px;top:170.65999999999997px;width:25px;height:8px;line-height:8px;text-align:right;font-size:4.8px;font-weight:bold;color:#fff;">792</div>
<svg style="position:absolute;left:1.5px;top:178.69px" width="8" height="8" viewBox="0 0 16 16"><path d="M3 2 L12 13" stroke="#202020" stroke-width="4.5" stroke-linecap="round"/><path d="M3 2 L7.5 7.5" stroke="#e8d820" stroke-width="3" stroke-linecap="round"/><path d="M7.5 7.5 L12 13" stroke="#20d020" stroke-width="3" stroke-linecap="round"/><path d="M6 1 L9 4" stroke="#20b030" stroke-width="2.5"/><rect x="13" y="1" width="2.6" height="10" fill="#ff1010"/><rect x="13" y="12.5" width="2.6" height="2" fill="#e01010"/></svg>
<div class="t" style="left:11.0px;top:178.39px;height:8px;line-height:8px;font-size:4.8px;font-weight:bold;color:#fff;">TF3MSN</div>
<div class="t" style="left:43.5px;top:178.39px;width:29.5px;height:8px;line-height:8px;text-align:right;font-size:4.8px;font-weight:bold;color:#fff;">18.1230</div>
<div class="t" style="left:174.5px;top:178.39px;height:8px;line-height:8px;font-size:4.8px;font-weight:bold;color:#fff;">MNNN [Iceland]</div>
<div class="t" style="left:260.5px;top:178.39px;height:8px;line-height:8px;font-size:4.8px;font-weight:bold;color:#fff;">DG6FFF</div>
<div class="t" style="left:290.5px;top:178.39px;height:8px;line-height:8px;font-size:4.8px;font-weight:bold;color:#fff;">17:17</div>
<div class="t" style="left:304.5px;top:178.39px;width:25px;height:8px;line-height:8px;text-align:right;font-size:4.8px;font-weight:bold;color:#fff;">1064</div>
<svg style="position:absolute;left:1.5px;top:186.42000000000002px" width="8" height="8" viewBox="0 0 16 16"><path d="M3 2 L12 13" stroke="#202020" stroke-width="4.5" stroke-linecap="round"/><path d="M3 2 L7.5 7.5" stroke="#e8d820" stroke-width="3" stroke-linecap="round"/><path d="M7.5 7.5 L12 13" stroke="#20d020" stroke-width="3" stroke-linecap="round"/><path d="M6 1 L9 4" stroke="#20b030" stroke-width="2.5"/><rect x="13" y="1" width="2.6" height="10" fill="#ff1010"/><rect x="13" y="12.5" width="2.6" height="2" fill="#e01010"/></svg>
<div class="t" style="left:11.0px;top:186.12px;height:8px;line-height:8px;font-size:4.8px;font-weight:bold;color:#fff;">VE3AXW</div>
<div class="t" style="left:43.5px;top:186.12px;width:29.5px;height:8px;line-height:8px;text-align:right;font-size:4.8px;font-weight:bold;color:#fff;">18.1300</div>
<div class="t" style="left:78.0px;top:186.12px;height:8px;line-height:8px;font-size:4.8px;font-weight:bold;color:#fff;">JN88GBL.ZI9SQE</div>
<div class="t" style="left:174.5px;top:186.12px;height:8px;line-height:8px;font-size:4.8px;font-weight:bold;color:#fff;">MNNW [Canada]</div>
<div class="t" style="left:260.5px;top:186.12px;height:8px;line-height:8px;font-size:4.8px;font-weight:bold;color:#fff;">F5JJA</div>
<div class="t" style="left:290.5px;top:186.12px;height:8px;line-height:8px;font-size:4.8px;font-weight:bold;color:#fff;">17:17</div>
<div class="t" style="left:304.5px;top:186.12px;width:25px;height:8px;line-height:8px;text-align:right;font-size:4.8px;font-weight:bold;color:#fff;">826</div>
<svg style="position:absolute;left:1.5px;top:194.15000000000003px" width="8" height="8" viewBox="0 0 16 16"><path d="M3 2 L12 13" stroke="#202020" stroke-width="4.5" stroke-linecap="round"/><path d="M3 2 L7.5 7.5" stroke="#e8d820" stroke-width="3" stroke-linecap="round"/><path d="M7.5 7.5 L12 13" stroke="#20d020" stroke-width="3" stroke-linecap="round"/><path d="M6 1 L9 4" stroke="#20b030" stroke-width="2.5"/><rect x="13" y="1" width="2.6" height="10" fill="#ff1010"/><rect x="13" y="12.5" width="2.6" height="2" fill="#e01010"/></svg>
<div class="t" style="left:11.0px;top:193.85000000000002px;height:8px;line-height:8px;font-size:4.8px;font-weight:bold;color:#fff;">KH6MB</div>
<div class="t" style="left:43.5px;top:193.85000000000002px;width:29.5px;height:8px;line-height:8px;text-align:right;font-size:4.8px;font-weight:bold;color:#fff;">21.0100</div>
<div class="t" style="left:174.5px;top:193.85000000000002px;height:8px;line-height:8px;font-size:4.8px;font-weight:bold;color:#fff;">MNNN [Hawaiian Island]</div>
<div class="t" style="left:260.5px;top:193.85000000000002px;height:8px;line-height:8px;font-size:4.8px;font-weight:bold;color:#fff;">K4AGA</div>
<div class="t" style="left:290.5px;top:193.85000000000002px;height:8px;line-height:8px;font-size:4.8px;font-weight:bold;color:#fff;">17:16</div>
<div class="t" style="left:304.5px;top:193.85000000000002px;width:25px;height:8px;line-height:8px;text-align:right;font-size:4.8px;font-weight:bold;color:#fff;">590</div>
<svg style="position:absolute;left:1.5px;top:201.88000000000005px" width="8" height="8" viewBox="0 0 16 16"><path d="M3 2 L12 13" stroke="#202020" stroke-width="4.5" stroke-linecap="round"/><path d="M3 2 L7.5 7.5" stroke="#e8d820" stroke-width="3" stroke-linecap="round"/><path d="M7.5 7.5 L12 13" stroke="#20d020" stroke-width="3" stroke-linecap="round"/><path d="M6 1 L9 4" stroke="#20b030" stroke-width="2.5"/><rect x="13" y="1" width="2.6" height="10" fill="#ff1010"/><rect x="13" y="12.5" width="2.6" height="2" fill="#e01010"/></svg>
<div class="t" style="left:11.0px;top:201.58000000000004px;height:8px;line-height:8px;font-size:4.8px;font-weight:bold;color:#fff;">DL1QW</div>
<div class="t" style="left:43.5px;top:201.58000000000004px;width:29.5px;height:8px;line-height:8px;text-align:right;font-size:4.8px;font-weight:bold;color:#fff;">21.0811</div>
<div class="t" style="left:78.0px;top:201.58000000000004px;height:8px;line-height:8px;font-size:4.8px;font-weight:bold;color:#fff;">RTTY</div>
<div class="t" style="left:174.5px;top:201.58000000000004px;height:8px;line-height:8px;font-size:4.8px;font-weight:bold;color:#fff;">MNNW [Rep. Germany]</div>
<div class="t" style="left:260.5px;top:201.58000000000004px;height:8px;line-height:8px;font-size:4.8px;font-weight:bold;color:#fff;">W6ILY</div>
<div class="t" style="left:290.5px;top:201.58000000000004px;height:8px;line-height:8px;font-size:4.8px;font-weight:bold;color:#fff;">17:16</div>
<div class="t" style="left:304.5px;top:201.58000000000004px;width:25px;height:8px;line-height:8px;text-align:right;font-size:4.8px;font-weight:bold;color:#fff;">1126</div>
<svg style="position:absolute;left:1.5px;top:209.61px" width="8" height="8" viewBox="0 0 16 16"><path d="M3 2 L12 13" stroke="#202020" stroke-width="4.5" stroke-linecap="round"/><path d="M3 2 L7.5 7.5" stroke="#e8d820" stroke-width="3" stroke-linecap="round"/><path d="M7.5 7.5 L12 13" stroke="#20d020" stroke-width="3" stroke-linecap="round"/><path d="M6 1 L9 4" stroke="#20b030" stroke-width="2.5"/><rect x="13" y="1" width="2.6" height="10" fill="#ff1010"/><rect x="13" y="12.5" width="2.6" height="2" fill="#e01010"/></svg>
<div class="t" style="left:11.0px;top:209.31px;height:8px;line-height:8px;font-size:4.8px;font-weight:bold;color:#fff;">HK3JJB</div>
<div class="t" style="left:43.5px;top:209.31px;width:29.5px;height:8px;line-height:8px;text-align:right;font-size:4.8px;font-weight:bold;color:#fff;">21.0085</div>
<div class="t" style="left:174.5px;top:209.31px;height:8px;line-height:8px;font-size:4.8px;font-weight:bold;color:#fff;">MNNW [Columbia]</div>
<div class="t" style="left:260.5px;top:209.31px;height:8px;line-height:8px;font-size:4.8px;font-weight:bold;color:#fff;">SK3AT</div>
<div class="t" style="left:290.5px;top:209.31px;height:8px;line-height:8px;font-size:4.8px;font-weight:bold;color:#fff;">17:10</div>
<div class="t" style="left:304.5px;top:209.31px;width:25px;height:8px;line-height:8px;text-align:right;font-size:4.8px;font-weight:bold;color:#fff;">582</div>
<svg style="position:absolute;left:1.5px;top:217.33999999999997px" width="8" height="8" viewBox="0 0 16 16"><path d="M3 2 L12 13" stroke="#202020" stroke-width="4.5" stroke-linecap="round"/><path d="M3 2 L7.5 7.5" stroke="#e8d820" stroke-width="3" stroke-linecap="round"/><path d="M7.5 7.5 L12 13" stroke="#20d020" stroke-width="3" stroke-linecap="round"/><path d="M6 1 L9 4" stroke="#20b030" stroke-width="2.5"/><rect x="13" y="1" width="2.6" height="10" fill="#ff1010"/><rect x="13" y="12.5" width="2.6" height="2" fill="#e01010"/></svg>
<div class="t" style="left:11.0px;top:217.03999999999996px;height:8px;line-height:8px;font-size:4.8px;font-weight:bold;color:#fff;">EA7IQM</div>
<div class="t" style="left:43.5px;top:217.03999999999996px;width:29.5px;height:8px;line-height:8px;text-align:right;font-size:4.8px;font-weight:bold;color:#fff;">21.0922</div>
<div class="t" style="left:78.0px;top:217.03999999999996px;height:8px;line-height:8px;font-size:4.8px;font-weight:bold;color:#fff;">RTTY</div>
<div class="t" style="left:174.5px;top:217.03999999999996px;height:8px;line-height:8px;font-size:4.8px;font-weight:bold;color:#fff;">MNNN [Spain]</div>
<div class="t" style="left:260.5px;top:217.03999999999996px;height:8px;line-height:8px;font-size:4.8px;font-weight:bold;color:#fff;">W6ILY</div>
<div class="t" style="left:290.5px;top:217.03999999999996px;height:8px;line-height:8px;font-size:4.8px;font-weight:bold;color:#fff;">17:14</div>
<div class="t" style="left:304.5px;top:217.03999999999996px;width:25px;height:8px;line-height:8px;text-align:right;font-size:4.8px;font-weight:bold;color:#fff;">1002</div>
<svg style="position:absolute;left:1.5px;top:225.07px" width="8" height="8" viewBox="0 0 16 16"><path d="M3 2 L12 13" stroke="#202020" stroke-width="4.5" stroke-linecap="round"/><path d="M3 2 L7.5 7.5" stroke="#e8d820" stroke-width="3" stroke-linecap="round"/><path d="M7.5 7.5 L12 13" stroke="#20d020" stroke-width="3" stroke-linecap="round"/><path d="M6 1 L9 4" stroke="#20b030" stroke-width="2.5"/><rect x="13" y="1" width="2.6" height="10" fill="#ff1010"/><rect x="13" y="12.5" width="2.6" height="2" fill="#e01010"/></svg>
<div class="t" style="left:11.0px;top:224.76999999999998px;height:8px;line-height:8px;font-size:4.8px;font-weight:bold;color:#fff;">K6MMM</div>
<div class="t" style="left:43.5px;top:224.76999999999998px;width:29.5px;height:8px;line-height:8px;text-align:right;font-size:4.8px;font-weight:bold;color:#fff;">21.0965</div>
<div class="t" style="left:78.0px;top:224.76999999999998px;height:8px;line-height:8px;font-size:4.8px;font-weight:bold;color:#fff;">WAE RTTY</div>
<div class="t" style="left:174.5px;top:224.76999999999998px;height:8px;line-height:8px;font-size:4.8px;font-weight:bold;color:#fff;">MNNW [U.S.A.]</div>
<div class="t" style="left:260.5px;top:224.76999999999998px;height:8px;line-height:8px;font-size:4.8px;font-weight:bold;color:#fff;">DL6ZBN</div>
<div class="t" style="left:290.5px;top:224.76999999999998px;height:8px;line-height:8px;font-size:4.8px;font-weight:bold;color:#fff;">17:15</div>
<div class="t" style="left:304.5px;top:224.76999999999998px;width:25px;height:8px;line-height:8px;text-align:right;font-size:4.8px;font-weight:bold;color:#fff;">675</div>
<svg style="position:absolute;left:1.5px;top:232.8px" width="8" height="8" viewBox="0 0 16 16"><path d="M3 2 L12 13" stroke="#202020" stroke-width="4.5" stroke-linecap="round"/><path d="M3 2 L7.5 7.5" stroke="#e8d820" stroke-width="3" stroke-linecap="round"/><path d="M7.5 7.5 L12 13" stroke="#20d020" stroke-width="3" stroke-linecap="round"/><path d="M6 1 L9 4" stroke="#20b030" stroke-width="2.5"/><rect x="13" y="1" width="2.6" height="10" fill="#ff1010"/><rect x="13" y="12.5" width="2.6" height="2" fill="#e01010"/></svg>
<div class="t" style="left:11.0px;top:232.5px;height:8px;line-height:8px;font-size:4.8px;font-weight:bold;color:#fff;">CN2LO</div>
<div class="t" style="left:43.5px;top:232.5px;width:29.5px;height:8px;line-height:8px;text-align:right;font-size:4.8px;font-weight:bold;color:#fff;">21.2500</div>
<div class="t" style="left:78.0px;top:232.5px;height:8px;line-height:8px;font-size:4.8px;font-weight:bold;color:#fff;">Diamond DXCC: Sidi Ifni, 69 i</div>
<div class="t" style="left:174.5px;top:232.5px;height:8px;line-height:8px;font-size:4.8px;font-weight:bold;color:#fff;">MNNN [Morocco]</div>
<div class="t" style="left:260.5px;top:232.5px;height:8px;line-height:8px;font-size:4.8px;font-weight:bold;color:#fff;">WC6DX</div>
<div class="t" style="left:290.5px;top:232.5px;height:8px;line-height:8px;font-size:4.8px;font-weight:bold;color:#fff;">17:17</div>
<div class="t" style="left:304.5px;top:232.5px;width:25px;height:8px;line-height:8px;text-align:right;font-size:4.8px;font-weight:bold;color:#fff;">964</div>
<svg style="position:absolute;left:1.5px;top:240.53000000000003px" width="8" height="8" viewBox="0 0 16 16"><path d="M3 2 L12 13" stroke="#202020" stroke-width="4.5" stroke-linecap="round"/><path d="M3 2 L7.5 7.5" stroke="#e8d820" stroke-width="3" stroke-linecap="round"/><path d="M7.5 7.5 L12 13" stroke="#20d020" stroke-width="3" stroke-linecap="round"/><path d="M6 1 L9 4" stroke="#20b030" stroke-width="2.5"/><rect x="13" y="1" width="2.6" height="10" fill="#ff1010"/><rect x="13" y="12.5" width="2.6" height="2" fill="#e01010"/></svg>
<div class="t" style="left:11.0px;top:240.23000000000002px;height:8px;line-height:8px;font-size:4.8px;font-weight:bold;color:#fff;">CN2LO</div>
<div class="t" style="left:43.5px;top:240.23000000000002px;width:29.5px;height:8px;line-height:8px;text-align:right;font-size:4.8px;font-weight:bold;color:#fff;">21.2500</div>
<div class="t" style="left:78.0px;top:240.23000000000002px;height:8px;line-height:8px;font-size:4.8px;font-weight:bold;color:#fff;">Op Francois  camping AGADIR</div>
<div class="t" style="left:174.5px;top:240.23000000000002px;height:8px;line-height:8px;font-size:4.8px;font-weight:bold;color:#fff;">MNNN [Morocco]</div>
<div class="t" style="left:260.5px;top:240.23000000000002px;height:8px;line-height:8px;font-size:4.8px;font-weight:bold;color:#fff;">F4GDR</div>
<div class="t" style="left:290.5px;top:240.23000000000002px;height:8px;line-height:8px;font-size:4.8px;font-weight:bold;color:#fff;">17:17</div>
<div class="t" style="left:304.5px;top:240.23000000000002px;width:25px;height:8px;line-height:8px;text-align:right;font-size:4.8px;font-weight:bold;color:#fff;">964</div>
<svg style="position:absolute;left:1.5px;top:248.26000000000005px" width="8" height="8" viewBox="0 0 16 16"><path d="M3 2 L12 13" stroke="#202020" stroke-width="4.5" stroke-linecap="round"/><path d="M3 2 L7.5 7.5" stroke="#e8d820" stroke-width="3" stroke-linecap="round"/><path d="M7.5 7.5 L12 13" stroke="#20d020" stroke-width="3" stroke-linecap="round"/><path d="M6 1 L9 4" stroke="#20b030" stroke-width="2.5"/><rect x="13" y="1" width="2.6" height="10" fill="#ff1010"/><rect x="13" y="12.5" width="2.6" height="2" fill="#e01010"/></svg>
<div class="t" style="left:11.0px;top:247.96000000000004px;height:8px;line-height:8px;font-size:4.8px;font-weight:bold;color:#fff;">CN2LO</div>
<div class="t" style="left:43.5px;top:247.96000000000004px;width:29.5px;height:8px;line-height:8px;text-align:right;font-size:4.8px;font-weight:bold;color:#fff;">21.2500</div>
<div class="t" style="left:78.0px;top:247.96000000000004px;height:8px;line-height:8px;font-size:4.8px;font-weight:bold;color:#fff;">Sidi Ifni</div>
<div class="t" style="left:174.5px;top:247.96000000000004px;height:8px;line-height:8px;font-size:4.8px;font-weight:bold;color:#fff;">MNNN [Morocco]</div>
<div class="t" style="left:260.5px;top:247.96000000000004px;height:8px;line-height:8px;font-size:4.8px;font-weight:bold;color:#fff;">K5LJ</div>
<div class="t" style="left:290.5px;top:247.96000000000004px;height:8px;line-height:8px;font-size:4.8px;font-weight:bold;color:#fff;">17:15</div>
<div class="t" style="left:304.5px;top:247.96000000000004px;width:25px;height:8px;line-height:8px;text-align:right;font-size:4.8px;font-weight:bold;color:#fff;">964</div>
<svg style="position:absolute;left:1.5px;top:255.99px" width="8" height="8" viewBox="0 0 16 16"><path d="M3 2 L12 13" stroke="#202020" stroke-width="4.5" stroke-linecap="round"/><path d="M3 2 L7.5 7.5" stroke="#e8d820" stroke-width="3" stroke-linecap="round"/><path d="M7.5 7.5 L12 13" stroke="#20d020" stroke-width="3" stroke-linecap="round"/><path d="M6 1 L9 4" stroke="#20b030" stroke-width="2.5"/><rect x="13" y="1" width="2.6" height="10" fill="#ff1010"/><rect x="13" y="12.5" width="2.6" height="2" fill="#e01010"/></svg>
<div class="t" style="left:11.0px;top:255.69px;height:8px;line-height:8px;font-size:4.8px;font-weight:bold;color:#fff;">W0YY</div>
<div class="t" style="left:43.5px;top:255.69px;width:29.5px;height:8px;line-height:8px;text-align:right;font-size:4.8px;font-weight:bold;color:#fff;">21.2800</div>
<div class="t" style="left:78.0px;top:255.69px;height:8px;line-height:8px;font-size:4.8px;font-weight:bold;color:#fff;">Calling CQ</div>
<div class="t" style="left:174.5px;top:255.69px;height:8px;line-height:8px;font-size:4.8px;font-weight:bold;color:#fff;">MNNW [U.S.A.]</div>
<div class="t" style="left:260.5px;top:255.69px;height:8px;line-height:8px;font-size:4.8px;font-weight:bold;color:#fff;">K6MP</div>
<div class="t" style="left:290.5px;top:255.69px;height:8px;line-height:8px;font-size:4.8px;font-weight:bold;color:#fff;">17:16</div>
<div class="t" style="left:304.5px;top:255.69px;width:25px;height:8px;line-height:8px;text-align:right;font-size:4.8px;font-weight:bold;color:#fff;">758</div>
<svg style="position:absolute;left:1.5px;top:263.71999999999997px" width="8" height="8" viewBox="0 0 16 16"><path d="M3 2 L12 13" stroke="#202020" stroke-width="4.5" stroke-linecap="round"/><path d="M3 2 L7.5 7.5" stroke="#e8d820" stroke-width="3" stroke-linecap="round"/><path d="M7.5 7.5 L12 13" stroke="#20d020" stroke-width="3" stroke-linecap="round"/><path d="M6 1 L9 4" stroke="#20b030" stroke-width="2.5"/><rect x="13" y="1" width="2.6" height="10" fill="#ff1010"/><rect x="13" y="12.5" width="2.6" height="2" fill="#e01010"/></svg>
<div class="t" style="left:11.0px;top:263.41999999999996px;height:8px;line-height:8px;font-size:4.8px;font-weight:bold;color:#fff;">VP2MYL</div>
<div class="t" style="left:43.5px;top:263.41999999999996px;width:29.5px;height:8px;line-height:8px;text-align:right;font-size:4.8px;font-weight:bold;color:#fff;">24.2082</div>
<div class="t" style="left:174.5px;top:263.41999999999996px;height:8px;line-height:8px;font-size:4.8px;font-weight:bold;color:#fff;">WWWW [Montserrat]</div>
<div class="t" style="left:260.5px;top:263.41999999999996px;height:8px;line-height:8px;font-size:4.8px;font-weight:bold;color:#fff;">W7RRS</div>
<div class="t" style="left:290.5px;top:263.41999999999996px;height:8px;line-height:8px;font-size:4.8px;font-weight:bold;color:#fff;">17:17</div>
<div class="t" style="left:304.5px;top:263.41999999999996px;width:25px;height:8px;line-height:8px;text-align:right;font-size:4.8px;font-weight:bold;color:#fff;">690</div>
<svg style="position:absolute;left:1.5px;top:271.45px" width="8" height="8" viewBox="0 0 16 16"><path d="M3 2 L12 13" stroke="#202020" stroke-width="4.5" stroke-linecap="round"/><path d="M3 2 L7.5 7.5" stroke="#e8d820" stroke-width="3" stroke-linecap="round"/><path d="M7.5 7.5 L12 13" stroke="#20d020" stroke-width="3" stroke-linecap="round"/><path d="M6 1 L9 4" stroke="#20b030" stroke-width="2.5"/><rect x="13" y="1" width="2.6" height="10" fill="#ff1010"/><rect x="13" y="12.5" width="2.6" height="2" fill="#e01010"/></svg>
<div class="t" style="left:11.0px;top:271.15px;height:8px;line-height:8px;font-size:4.8px;font-weight:bold;color:#fff;">N6IC/NA066</div>
<div class="t" style="left:43.5px;top:271.15px;width:29.5px;height:8px;line-height:8px;text-align:right;font-size:4.8px;font-weight:bold;color:#fff;">24.8950</div>
<div class="t" style="left:174.5px;top:271.15px;height:8px;line-height:8px;font-size:4.8px;font-weight:bold;color:#fff;">MNNW [U.S.A.]</div>
<div class="t" style="left:260.5px;top:271.15px;height:8px;line-height:8px;font-size:4.8px;font-weight:bold;color:#fff;">N6FH</div>
<div class="t" style="left:290.5px;top:271.15px;height:8px;line-height:8px;font-size:4.8px;font-weight:bold;color:#fff;">17:13</div>
<div class="t" style="left:304.5px;top:271.15px;width:25px;height:8px;line-height:8px;text-align:right;font-size:4.8px;font-weight:bold;color:#fff;">758</div>
<svg style="position:absolute;left:1.5px;top:279.18px" width="8" height="8" viewBox="0 0 16 16"><path d="M3 2 L12 13" stroke="#202020" stroke-width="4.5" stroke-linecap="round"/><path d="M3 2 L7.5 7.5" stroke="#e8d820" stroke-width="3" stroke-linecap="round"/><path d="M7.5 7.5 L12 13" stroke="#20d020" stroke-width="3" stroke-linecap="round"/><path d="M6 1 L9 4" stroke="#20b030" stroke-width="2.5"/><rect x="13" y="1" width="2.6" height="10" fill="#ff1010"/><rect x="13" y="12.5" width="2.6" height="2" fill="#e01010"/></svg>
<div class="t" style="left:11.0px;top:278.88px;height:8px;line-height:8px;font-size:4.8px;font-weight:bold;color:#fff;">CU7MD</div>
<div class="t" style="left:43.5px;top:278.88px;width:29.5px;height:8px;line-height:8px;text-align:right;font-size:4.8px;font-weight:bold;color:#fff;">24.9330</div>
<div class="t" style="left:78.0px;top:278.88px;height:8px;line-height:8px;font-size:4.8px;font-weight:bold;color:#fff;">Thx U Jose 73</div>
<div class="t" style="left:174.5px;top:278.88px;height:8px;line-height:8px;font-size:4.8px;font-weight:bold;color:#fff;">MNVW [Azores]</div>
<div class="t" style="left:260.5px;top:278.88px;height:8px;line-height:8px;font-size:4.8px;font-weight:bold;color:#fff;">G6JVT</div>
<div class="t" style="left:290.5px;top:278.88px;height:8px;line-height:8px;font-size:4.8px;font-weight:bold;color:#fff;">17:17</div>
<div class="t" style="left:304.5px;top:278.88px;width:25px;height:8px;line-height:8px;text-align:right;font-size:4.8px;font-weight:bold;color:#fff;">936</div>
<svg style="position:absolute;left:1.5px;top:286.91px" width="8" height="8" viewBox="0 0 16 16"><path d="M3 2 L12 13" stroke="#202020" stroke-width="4.5" stroke-linecap="round"/><path d="M3 2 L7.5 7.5" stroke="#e8d820" stroke-width="3" stroke-linecap="round"/><path d="M7.5 7.5 L12 13" stroke="#20d020" stroke-width="3" stroke-linecap="round"/><path d="M6 1 L9 4" stroke="#20b030" stroke-width="2.5"/><rect x="13" y="1" width="2.6" height="10" fill="#ff1010"/><rect x="13" y="12.5" width="2.6" height="2" fill="#e01010"/></svg>
<div class="t" style="left:11.0px;top:286.61px;height:8px;line-height:8px;font-size:4.8px;font-weight:bold;color:#fff;">PT0S</div>
<div class="t" style="left:43.5px;top:286.61px;width:29.5px;height:8px;line-height:8px;text-align:right;font-size:4.8px;font-weight:bold;color:#fff;">24.9400</div>
<div class="t" style="left:78.0px;top:286.61px;height:8px;line-height:8px;font-size:4.8px;font-weight:bold;color:#fff;">UP</div>
<div class="t" style="left:174.5px;top:286.61px;height:8px;line-height:8px;font-size:4.8px;font-weight:bold;color:#fff;">MNNN [St Peter &amp; St Paul Rocks]</div>
<div class="t" style="left:260.5px;top:286.61px;height:8px;line-height:8px;font-size:4.8px;font-weight:bold;color:#fff;">IZ8BRI</div>
<div class="t" style="left:290.5px;top:286.61px;height:8px;line-height:8px;font-size:4.8px;font-weight:bold;color:#fff;">17:25</div>
<div class="t" style="left:304.5px;top:286.61px;width:25px;height:8px;line-height:8px;text-align:right;font-size:4.8px;font-weight:bold;color:#fff;">714</div>
<svg style="position:absolute;left:1.5px;top:294.64000000000004px" width="8" height="8" viewBox="0 0 16 16"><path d="M3 2 L12 13" stroke="#202020" stroke-width="4.5" stroke-linecap="round"/><path d="M3 2 L7.5 7.5" stroke="#e8d820" stroke-width="3" stroke-linecap="round"/><path d="M7.5 7.5 L12 13" stroke="#20d020" stroke-width="3" stroke-linecap="round"/><path d="M6 1 L9 4" stroke="#20b030" stroke-width="2.5"/><rect x="13" y="1" width="2.6" height="10" fill="#ff1010"/><rect x="13" y="12.5" width="2.6" height="2" fill="#e01010"/></svg>
<div class="t" style="left:11.0px;top:294.34000000000003px;height:8px;line-height:8px;font-size:4.8px;font-weight:bold;color:#fff;">PT0S</div>
<div class="t" style="left:43.5px;top:294.34000000000003px;width:29.5px;height:8px;line-height:8px;text-align:right;font-size:4.8px;font-weight:bold;color:#fff;">24.9400</div>
<div class="t" style="left:78.0px;top:294.34000000000003px;height:8px;line-height:8px;font-size:4.8px;font-weight:bold;color:#fff;">UP 40 tnx</div>
<div class="t" style="left:174.5px;top:294.34000000000003px;height:8px;line-height:8px;font-size:4.8px;font-weight:bold;color:#fff;">MNNN [St Peter &amp; St Paul Rocks]</div>
<div class="t" style="left:260.5px;top:294.34000000000003px;height:8px;line-height:8px;font-size:4.8px;font-weight:bold;color:#fff;">EA1QA</div>
<div class="t" style="left:290.5px;top:294.34000000000003px;height:8px;line-height:8px;font-size:4.8px;font-weight:bold;color:#fff;">17:16</div>
<div class="t" style="left:304.5px;top:294.34000000000003px;width:25px;height:8px;line-height:8px;text-align:right;font-size:4.8px;font-weight:bold;color:#fff;">714</div>
<svg style="position:absolute;left:1.5px;top:302.37000000000006px" width="8" height="8" viewBox="0 0 16 16"><path d="M3 2 L12 13" stroke="#202020" stroke-width="4.5" stroke-linecap="round"/><path d="M3 2 L7.5 7.5" stroke="#e8d820" stroke-width="3" stroke-linecap="round"/><path d="M7.5 7.5 L12 13" stroke="#20d020" stroke-width="3" stroke-linecap="round"/><path d="M6 1 L9 4" stroke="#20b030" stroke-width="2.5"/><rect x="13" y="1" width="2.6" height="10" fill="#ff1010"/><rect x="13" y="12.5" width="2.6" height="2" fill="#e01010"/></svg>
<div class="t" style="left:11.0px;top:302.07000000000005px;height:8px;line-height:8px;font-size:4.8px;font-weight:bold;color:#fff;">PT0S</div>
<div class="t" style="left:43.5px;top:302.07000000000005px;width:29.5px;height:8px;line-height:8px;text-align:right;font-size:4.8px;font-weight:bold;color:#fff;">24.9400</div>
<div class="t" style="left:78.0px;top:302.07000000000005px;height:8px;line-height:8px;font-size:4.8px;font-weight:bold;color:#fff;">TNX for 59 QSX:24985.0</div>
<div class="t" style="left:174.5px;top:302.07000000000005px;height:8px;line-height:8px;font-size:4.8px;font-weight:bold;color:#fff;">MNNN [St Peter &amp; St Paul Rocks]</div>
<div class="t" style="left:260.5px;top:302.07000000000005px;height:8px;line-height:8px;font-size:4.8px;font-weight:bold;color:#fff;">EA2DT</div>
<div class="t" style="left:290.5px;top:302.07000000000005px;height:8px;line-height:8px;font-size:4.8px;font-weight:bold;color:#fff;">17:16</div>
<div class="t" style="left:304.5px;top:302.07000000000005px;width:25px;height:8px;line-height:8px;text-align:right;font-size:4.8px;font-weight:bold;color:#fff;">714</div>
<svg style="position:absolute;left:1.5px;top:310.1000000000001px" width="8" height="8" viewBox="0 0 16 16"><path d="M3 2 L12 13" stroke="#202020" stroke-width="4.5" stroke-linecap="round"/><path d="M3 2 L7.5 7.5" stroke="#e8d820" stroke-width="3" stroke-linecap="round"/><path d="M7.5 7.5 L12 13" stroke="#20d020" stroke-width="3" stroke-linecap="round"/><path d="M6 1 L9 4" stroke="#20b030" stroke-width="2.5"/><rect x="13" y="1" width="2.6" height="10" fill="#ff1010"/><rect x="13" y="12.5" width="2.6" height="2" fill="#e01010"/></svg>
<div class="t" style="left:11.0px;top:309.80000000000007px;height:8px;line-height:8px;font-size:4.8px;font-weight:bold;color:#fff;">PT0S</div>
<div class="t" style="left:43.5px;top:309.80000000000007px;width:29.5px;height:8px;line-height:8px;text-align:right;font-size:4.8px;font-weight:bold;color:#fff;">24.9400</div>
<div class="t" style="left:78.0px;top:309.80000000000007px;height:8px;line-height:8px;font-size:4.8px;font-weight:bold;color:#fff;">Wkd TU 59 up 570</div>
<div class="t" style="left:174.5px;top:309.80000000000007px;height:8px;line-height:8px;font-size:4.8px;font-weight:bold;color:#fff;">MNNN [St Peter &amp; St Paul Rocks]</div>
<div class="t" style="left:260.5px;top:309.80000000000007px;height:8px;line-height:8px;font-size:4.8px;font-weight:bold;color:#fff;">EC7ZK</div>
<div class="t" style="left:290.5px;top:309.80000000000007px;height:8px;line-height:8px;font-size:4.8px;font-weight:bold;color:#fff;">17:16</div>
<div class="t" style="left:304.5px;top:309.80000000000007px;width:25px;height:8px;line-height:8px;text-align:right;font-size:4.8px;font-weight:bold;color:#fff;">714</div>
<svg style="position:absolute;left:1.5px;top:317.83px" width="8" height="8" viewBox="0 0 16 16"><path d="M3 2 L12 13" stroke="#202020" stroke-width="4.5" stroke-linecap="round"/><path d="M3 2 L7.5 7.5" stroke="#e8d820" stroke-width="3" stroke-linecap="round"/><path d="M7.5 7.5 L12 13" stroke="#20d020" stroke-width="3" stroke-linecap="round"/><path d="M6 1 L9 4" stroke="#20b030" stroke-width="2.5"/><rect x="13" y="1" width="2.6" height="10" fill="#ff1010"/><rect x="13" y="12.5" width="2.6" height="2" fill="#e01010"/></svg>
<div class="t" style="left:11.0px;top:317.53px;height:8px;line-height:8px;font-size:4.8px;font-weight:bold;color:#fff;">PT0S</div>
<div class="t" style="left:43.5px;top:317.53px;width:29.5px;height:8px;line-height:8px;text-align:right;font-size:4.8px;font-weight:bold;color:#fff;">24.9400</div>
<div class="t" style="left:78.0px;top:317.53px;height:8px;line-height:8px;font-size:4.8px;font-weight:bold;color:#fff;">up up finally !!!</div>
<div class="t" style="left:174.5px;top:317.53px;height:8px;line-height:8px;font-size:4.8px;font-weight:bold;color:#fff;">MNNN [St Peter &amp; St Paul Rocks]</div>
<div class="t" style="left:260.5px;top:317.53px;height:8px;line-height:8px;font-size:4.8px;font-weight:bold;color:#fff;">IK1MNJ</div>
<div class="t" style="left:290.5px;top:317.53px;height:8px;line-height:8px;font-size:4.8px;font-weight:bold;color:#fff;">17:16</div>
<div class="t" style="left:304.5px;top:317.53px;width:25px;height:8px;line-height:8px;text-align:right;font-size:4.8px;font-weight:bold;color:#fff;">714</div>
<svg style="position:absolute;left:1.5px;top:325.56px" width="8" height="8" viewBox="0 0 16 16"><path d="M3 2 L12 13" stroke="#202020" stroke-width="4.5" stroke-linecap="round"/><path d="M3 2 L7.5 7.5" stroke="#e8d820" stroke-width="3" stroke-linecap="round"/><path d="M7.5 7.5 L12 13" stroke="#20d020" stroke-width="3" stroke-linecap="round"/><path d="M6 1 L9 4" stroke="#20b030" stroke-width="2.5"/><rect x="13" y="1" width="2.6" height="10" fill="#ff1010"/><rect x="13" y="12.5" width="2.6" height="2" fill="#e01010"/></svg>
<div class="t" style="left:11.0px;top:325.26px;height:8px;line-height:8px;font-size:4.8px;font-weight:bold;color:#fff;">PT0S</div>
<div class="t" style="left:43.5px;top:325.26px;width:29.5px;height:8px;line-height:8px;text-align:right;font-size:4.8px;font-weight:bold;color:#fff;">24.9400</div>
<div class="t" style="left:78.0px;top:325.26px;height:8px;line-height:8px;font-size:4.8px;font-weight:bold;color:#fff;">59 TNX !!!</div>
<div class="t" style="left:174.5px;top:325.26px;height:8px;line-height:8px;font-size:4.8px;font-weight:bold;color:#fff;">MNNN [St Peter &amp; St Paul Rocks]</div>
<div class="t" style="left:260.5px;top:325.26px;height:8px;line-height:8px;font-size:4.8px;font-weight:bold;color:#fff;">EA2CTQ ...</div>
<div class="t" style="left:290.5px;top:325.26px;height:8px;line-height:8px;font-size:4.8px;font-weight:bold;color:#fff;">17:15</div>
<div class="t" style="left:304.5px;top:325.26px;width:25px;height:8px;line-height:8px;text-align:right;font-size:4.8px;font-weight:bold;color:#fff;">714</div>
<svg style="position:absolute;left:1.5px;top:333.29px" width="8" height="8" viewBox="0 0 16 16"><path d="M3 2 L12 13" stroke="#202020" stroke-width="4.5" stroke-linecap="round"/><path d="M3 2 L7.5 7.5" stroke="#e8d820" stroke-width="3" stroke-linecap="round"/><path d="M7.5 7.5 L12 13" stroke="#20d020" stroke-width="3" stroke-linecap="round"/><path d="M6 1 L9 4" stroke="#20b030" stroke-width="2.5"/><rect x="13" y="1" width="2.6" height="10" fill="#ff1010"/><rect x="13" y="12.5" width="2.6" height="2" fill="#e01010"/></svg>
<div class="t" style="left:11.0px;top:332.99px;height:8px;line-height:8px;font-size:4.8px;font-weight:bold;color:#fff;">PT0S</div>
<div class="t" style="left:43.5px;top:332.99px;width:29.5px;height:8px;line-height:8px;text-align:right;font-size:4.8px;font-weight:bold;color:#fff;">24.9400</div>
<div class="t" style="left:78.0px;top:332.99px;height:8px;line-height:8px;font-size:4.8px;font-weight:bold;color:#fff;">MUCHO DESORDEN</div>
<div class="t" style="left:174.5px;top:332.99px;height:8px;line-height:8px;font-size:4.8px;font-weight:bold;color:#fff;">MNNN [St Peter &amp; St Paul Rocks]</div>
<div class="t" style="left:260.5px;top:332.99px;height:8px;line-height:8px;font-size:4.8px;font-weight:bold;color:#fff;">XE1J</div>
<div class="t" style="left:290.5px;top:332.99px;height:8px;line-height:8px;font-size:4.8px;font-weight:bold;color:#fff;">17:13</div>
<div class="t" style="left:304.5px;top:332.99px;width:25px;height:8px;line-height:8px;text-align:right;font-size:4.8px;font-weight:bold;color:#fff;">714</div>
<svg style="position:absolute;left:1.5px;top:341.02000000000004px" width="8" height="8" viewBox="0 0 16 16"><path d="M3 2 L12 13" stroke="#202020" stroke-width="4.5" stroke-linecap="round"/><path d="M3 2 L7.5 7.5" stroke="#e8d820" stroke-width="3" stroke-linecap="round"/><path d="M7.5 7.5 L12 13" stroke="#20d020" stroke-width="3" stroke-linecap="round"/><path d="M6 1 L9 4" stroke="#20b030" stroke-width="2.5"/><rect x="13" y="1" width="2.6" height="10" fill="#ff1010"/><rect x="13" y="12.5" width="2.6" height="2" fill="#e01010"/></svg>
<div class="t" style="left:11.0px;top:340.72px;height:8px;line-height:8px;font-size:4.8px;font-weight:bold;color:#fff;">N5RZ</div>
<div class="t" style="left:43.5px;top:340.72px;width:29.5px;height:8px;line-height:8px;text-align:right;font-size:4.8px;font-weight:bold;color:#fff;">28.0097</div>
<div class="t" style="left:78.0px;top:340.72px;height:8px;line-height:8px;font-size:4.8px;font-weight:bold;color:#fff;">wae</div>
<div class="t" style="left:174.5px;top:340.72px;height:8px;line-height:8px;font-size:4.8px;font-weight:bold;color:#fff;">WWNW [U.S.A.]</div>
<div class="t" style="left:260.5px;top:340.72px;height:8px;line-height:8px;font-size:4.8px;font-weight:bold;color:#fff;">PY2SHF</div>
<div class="t" style="left:290.5px;top:340.72px;height:8px;line-height:8px;font-size:4.8px;font-weight:bold;color:#fff;">17:14</div>
<div class="t" style="left:304.5px;top:340.72px;width:25px;height:8px;line-height:8px;text-align:right;font-size:4.8px;font-weight:bold;color:#fff;">690</div>
<svg style="position:absolute;left:1.5px;top:348.75000000000006px" width="8" height="8" viewBox="0 0 16 16"><path d="M3 2 L12 13" stroke="#202020" stroke-width="4.5" stroke-linecap="round"/><path d="M3 2 L7.5 7.5" stroke="#e8d820" stroke-width="3" stroke-linecap="round"/><path d="M7.5 7.5 L12 13" stroke="#20d020" stroke-width="3" stroke-linecap="round"/><path d="M6 1 L9 4" stroke="#20b030" stroke-width="2.5"/><rect x="13" y="1" width="2.6" height="10" fill="#ff1010"/><rect x="13" y="12.5" width="2.6" height="2" fill="#e01010"/></svg>
<div class="t" style="left:11.0px;top:348.45000000000005px;height:8px;line-height:8px;font-size:4.8px;font-weight:bold;color:#fff;">5C5W</div>
<div class="t" style="left:43.5px;top:348.45000000000005px;width:29.5px;height:8px;line-height:8px;text-align:right;font-size:4.8px;font-weight:bold;color:#fff;">28.0500</div>
<div class="t" style="left:78.0px;top:348.45000000000005px;height:8px;line-height:8px;font-size:4.8px;font-weight:bold;color:#fff;">WAE</div>
<div class="t" style="left:174.5px;top:348.45000000000005px;height:8px;line-height:8px;font-size:4.8px;font-weight:bold;color:#fff;">MNNN [Morocco]</div>
<div class="t" style="left:260.5px;top:348.45000000000005px;height:8px;line-height:8px;font-size:4.8px;font-weight:bold;color:#fff;">PY2WC</div>
<div class="t" style="left:290.5px;top:348.45000000000005px;height:8px;line-height:8px;font-size:4.8px;font-weight:bold;color:#fff;">17:14</div>
<div class="t" style="left:304.5px;top:348.45000000000005px;width:25px;height:8px;line-height:8px;text-align:right;font-size:4.8px;font-weight:bold;color:#fff;">964</div>
<div style="left:2.0px;top:357.18000000000006px;width:0;height:0;border-left:3px solid transparent;border-right:3px solid transparent;border-top:6px solid #60b0c0"></div>
<div style="left:8.299999999999955px;top:356.68000000000006px;width:1px;height:7px;background:#4080a0"></div>
<div style="left:9.5px;top:356.4800000000001px;width:28px;height:7.5px;background:#fff;border:0.5px solid #888"></div>
<div class="t" style="left:11.0px;top:356.18000000000006px;height:8px;line-height:8px;font-size:4.8px;font-weight:bold;color:#000">GI0BQX</div>
<div class="t" style="left:43.5px;top:356.18000000000006px;width:29.5px;height:8px;line-height:8px;text-align:right;font-size:4.8px;font-weight:bold;color:#fff;">28.3950</div>
<div class="t" style="left:78.0px;top:356.18000000000006px;height:8px;line-height:8px;font-size:4.8px;font-weight:bold;color:#fff;">David nice  59</div>
<div class="t" style="left:174.5px;top:356.18000000000006px;height:8px;line-height:8px;font-size:4.8px;font-weight:bold;color:#fff;">MNNN [Northern Ireland]</div>
<div class="t" style="left:260.5px;top:356.18000000000006px;height:8px;line-height:8px;font-size:4.8px;font-weight:bold;color:#fff;">VE6MV</div>
<div class="t" style="left:290.5px;top:356.18000000000006px;height:8px;line-height:8px;font-size:4.8px;font-weight:bold;color:#fff;">17:17</div>
<div class="t" style="left:304.5px;top:356.18000000000006px;width:25px;height:8px;line-height:8px;text-align:right;font-size:4.8px;font-weight:bold;color:#fff;">1095</div>
<svg style="position:absolute;left:1.5px;top:364.21px" width="8" height="8" viewBox="0 0 16 16"><path d="M3 2 L12 13" stroke="#202020" stroke-width="4.5" stroke-linecap="round"/><path d="M3 2 L7.5 7.5" stroke="#e8d820" stroke-width="3" stroke-linecap="round"/><path d="M7.5 7.5 L12 13" stroke="#20d020" stroke-width="3" stroke-linecap="round"/><path d="M6 1 L9 4" stroke="#20b030" stroke-width="2.5"/><rect x="13" y="1" width="2.6" height="10" fill="#ff1010"/><rect x="13" y="12.5" width="2.6" height="2" fill="#e01010"/></svg>
<div class="t" style="left:11.0px;top:363.90999999999997px;height:8px;line-height:8px;font-size:4.8px;font-weight:bold;color:#fff;">YS1/NO7B</div>
<div class="t" style="left:43.5px;top:363.90999999999997px;width:29.5px;height:8px;line-height:8px;text-align:right;font-size:4.8px;font-weight:bold;color:#fff;">28.4584</div>
<div class="t" style="left:78.0px;top:363.90999999999997px;height:8px;line-height:8px;font-size:4.8px;font-weight:bold;color:#fff;">55 in MO, lonely</div>
<div class="t" style="left:174.5px;top:363.90999999999997px;height:8px;line-height:8px;font-size:4.8px;font-weight:bold;color:#fff;">MNVW [El Salvador]</div>
<div class="t" style="left:260.5px;top:363.90999999999997px;height:8px;line-height:8px;font-size:4.8px;font-weight:bold;color:#fff;">W800WQS...</div>
<div class="t" style="left:290.5px;top:363.90999999999997px;height:8px;line-height:8px;font-size:4.8px;font-weight:bold;color:#fff;">17:14</div>
<div class="t" style="left:304.5px;top:363.90999999999997px;width:25px;height:8px;line-height:8px;text-align:right;font-size:4.8px;font-weight:bold;color:#fff;">597</div>
</div>
<div style="left:521.5px;top:479.5px;width:328.5px;height:8px;background:#e8e8e8;border-top:0.5px solid #ddd;"></div>
<div class="t" style="left:521.5px;top:479.5px;width:8px;height:8px;line-height:8px;text-align:center;font-size:5px;color:#555;">◂</div>
<div style="left:530px;top:480.5px;width:281px;height:6.5px;background:linear-gradient(#f2f2f2,#d8d8d8);border:0.8px solid #a0a0a0;border-radius:1px;"></div>
<div style="left:668.5px;top:482px;width:3px;height:3.5px;border-left:0.6px solid #777;border-right:0.6px solid #777;"></div>
<div class="t" style="left:842px;top:479.5px;width:8px;height:8px;line-height:8px;text-align:center;font-size:5px;color:#555;">▸</div>
<div style="left:4px;top:211px;width:247.2px;height:146.8px;border:0.8px solid #646c76;border-radius:3px 3px 1px 1px;background:linear-gradient(#dce6f0 0px,#dce6f0 0.8px,#b7c7d8 1.8px,#c4d2e1 6px,#d6e2ee 13px,#dae5f1 100%);box-shadow:0.5px 0.5px 1px rgba(0,0,0,.25);"></div>
<div style="left:6.6px;top:224.4px;width:242.0px;height:130.8px;background:#f0f0f0;border:0.5px solid #c8d4e0;"></div>
<svg style="position:absolute;left:7.5px;top:215.0px" width="8.5" height="8.5" viewBox="0 0 16 16"><rect x="1" y="3" width="11" height="12" fill="#b01830" stroke="#300"/><rect x="3.5" y="6" width="6" height="6" fill="#fff"/><path d="M8 1 L15 1 L15 9" fill="none" stroke="#555" stroke-width="1.6"/></svg>
<div class="t" style="left:16.8px;top:215.6px;height:9px;line-height:9px;font-size:5.6px;color:#465470;white-space:nowrap">Logbook [TRX-Log.mdb] - New QSO</div>
<div style="left:203.2px;top:215.3px;width:13.8px;height:8px;background:linear-gradient(#dde6f0,#cad7e5);border:0.8px solid #9aaabb;border-radius:1px;"></div>
<div style="left:207.2px;top:220.2px;width:6px;height:1.2px;background:#7a8594;"></div>
<div style="left:218.1px;top:215.3px;width:13.8px;height:8px;background:linear-gradient(#dde6f0,#cad7e5);border:0.8px solid #9aaabb;border-radius:1px;"></div>
<div style="left:222.4px;top:217.6px;width:5.5px;height:3.2px;border:1px solid #7a8594;border-radius:0.8px;"></div>
<div style="left:233.0px;top:215.3px;width:13.8px;height:8px;background:linear-gradient(#dde6f0,#cad7e5);border:0.8px solid #9aaabb;border-radius:1px;"></div>
<svg style="position:absolute;left:237.4px;top:217.3px" width="5" height="4" viewBox="0 0 5 4"><path d="M0.3 0.3 L4.7 3.7 M4.7 0.3 L0.3 3.7" stroke="#6a7584" stroke-width="1.3"/></svg>
<div style="left:9px;top:224.5px;width:237px;height:12px;background:linear-gradient(#f9fafb,#eceef1);border-bottom:1px solid #d8dbe0;"></div>
<div style="left:11px;top:226px;width:1px;height:9px;background:#c0c4c8;"></div>
<svg style="position:absolute;left:12.5px;top:226.5px" width="8" height="8" viewBox="0 0 16 16"><path d="M1 4 L6 4 L7 2.5 L12 2.5 L12 6 L15 6 L12 14 L1 14 Z" fill="#d8c040" stroke="#6a5a10"/><path d="M3 8 L15.5 8 L12.5 14 L1 14 Z" fill="#f0e070" stroke="#6a5a10"/></svg>
<svg style="position:absolute;left:23px;top:226.5px" width="8" height="8" viewBox="0 0 16 16"><rect x="1" y="1" width="14" height="14" fill="#3a3a20" stroke="#111"/><rect x="3.5" y="1.5" width="9" height="5" fill="#e0e0a0"/><rect x="4" y="10" width="8" height="4.5" fill="#aaa040"/></svg>
<div style="left:33px;top:226px;width:1px;height:9px;background:#c8c8c8;"></div>
<div style="left:35px;top:225.5px;width:10px;height:10px;background:#fff;border:1px solid #c8d0d8;"></div>
<div style="left:37.5px;top:227px;width:5px;height:7px;background:#fff;border:0.8px solid #333;"></div>
<svg style="position:absolute;left:46.5px;top:226.5px" width="8" height="8" viewBox="0 0 16 16"><rect x="2" y="3" width="12" height="12" fill="#c8b870" stroke="#333"/><rect x="5" y="1" width="6" height="4" fill="#777"/><rect x="7" y="7" width="7" height="8" fill="#5060c0"/></svg>
<div class="t" style="left:55px;top:225px;width:20px;height:11px;line-height:11px;text-align:left;font-size:5.8px;color:#000;">Spot</div>
<div style="left:69.5px;top:226px;width:1px;height:9px;background:#c8c8c8;"></div>
<svg style="position:absolute;left:73.5px;top:226.5px" width="8" height="8" viewBox="0 0 16 16"><rect x="1" y="3" width="11" height="12" fill="#b01830" stroke="#300"/><rect x="3.5" y="6" width="6" height="6" fill="#fff"/><path d="M8 1 L15 1 L15 9" fill="none" stroke="#555" stroke-width="1.6"/></svg>
<div class="t" style="left:82.5px;top:225px;width:20px;height:11px;line-height:11px;text-align:left;font-size:5.8px;color:#000;">Log</div>
<div style="left:94.5px;top:226px;width:1px;height:9px;background:#c8c8c8;"></div>
<div style="left:101px;top:226.5px;width:2px;height:8px;background:#8a3030;transform:rotate(-40deg);"></div>
<div class="t" style="left:108px;top:225px;width:8px;height:11px;line-height:11px;text-align:center;font-size:6px;color:#aaa;">✕</div>
<div style="left:118px;top:226px;width:1px;height:9px;background:#c8c8c8;"></div>
<svg style="position:absolute;left:121px;top:226.5px" width="8" height="8" viewBox="0 0 16 16"><rect x="1" y="1" width="14" height="14" fill="#1a1a1a"/><rect x="3" y="3" width="4" height="4" fill="#f0e020"/><rect x="9" y="3" width="4" height="10" fill="#e8e8e8"/><rect x="3" y="9" width="4" height="4" fill="#e8e8e8"/></svg>
<svg style="position:absolute;left:131.5px;top:226.5px" width="8.5" height="8.5" viewBox="0 0 16 16"><text x="0" y="7" font-size="8" font-family="Liberation Sans" font-weight="bold" fill="#c02020">a</text><text x="0" y="15" font-size="8" font-family="Liberation Sans" font-weight="bold" fill="#2040c0">z</text><path d="M12 1 L12 14 M9 11 L12 15 L15 11" fill="none" stroke="#111" stroke-width="1.6"/></svg>
<svg style="position:absolute;left:141px;top:226.5px" width="8.5" height="8.5" viewBox="0 0 16 16"><text x="0" y="7" font-size="8" font-family="Liberation Sans" font-weight="bold" fill="#c02020">z</text><text x="0" y="15" font-size="8" font-family="Liberation Sans" font-weight="bold" fill="#2040c0">a</text><path d="M12 1 L12 14 M9 11 L12 15 L15 11" fill="none" stroke="#111" stroke-width="1.6"/></svg>
<svg style="position:absolute;left:150.5px;top:226.5px" width="8" height="8" viewBox="0 0 16 16"><rect x="1" y="4" width="5.5" height="10" rx="1.5" fill="#222"/><rect x="9.5" y="4" width="5.5" height="10" rx="1.5" fill="#222"/><rect x="6" y="6" width="4" height="3" fill="#555"/><rect x="2" y="2" width="3" height="3" fill="#777"/><rect x="11" y="2" width="3" height="3" fill="#777"/></svg>
<div class="t" style="left:160px;top:225px;width:20px;height:11px;line-height:11px;text-align:left;font-size:5.6px;color:#000;">Select</div>
<div class="t" style="left:178.5px;top:225px;width:5px;height:11px;line-height:11px;text-align:left;font-size:5px;color:#000;">▾</div>
<div class="t" style="left:184.5px;top:225px;width:30px;height:11px;line-height:11px;text-align:left;font-size:5.6px;color:#223;">IC-7800</div>
<div class="t" style="left:204.5px;top:226px;width:5px;height:11px;line-height:11px;text-align:left;font-size:4px;color:#000;">▾</div>
<div style="left:209px;top:226px;width:1px;height:9px;background:#c8c8c8;"></div>
<div style="left:213px;top:227px;width:7.5px;height:7px;background:#30b8c8;border:1px solid #246;border-radius:1px;"></div>
<div class="t" style="left:221.5px;top:225px;width:30px;height:11px;line-height:11px;text-align:left;font-size:5.6px;color:#000;">68 QSOs</div>
<div style="left:8px;top:237px;width:12px;height:116px;background:#eef0f2;border-right:1px solid #d0d4d8;"></div>
<svg style="position:absolute;left:9.5px;top:243px" width="8" height="8" viewBox="0 0 16 16"><circle cx="8" cy="8" r="7" fill="#b8b8b8" stroke="#999"/><rect x="6.8" y="6.5" width="2.4" height="6.5" fill="#fff"/><circle cx="8" cy="4" r="1.4" fill="#fff"/></svg>
<svg style="position:absolute;left:9.5px;top:253px" width="8" height="8" viewBox="0 0 16 16"><circle cx="8" cy="8" r="7" fill="#888" stroke="#333"/><path d="M1 8 L15 8 M8 1 L8 15 M3 4 Q8 7 13 4 M3 12 Q8 9 13 12" fill="none" stroke="#eee" stroke-width="1"/><rect x="9" y="9" width="6" height="6" fill="#2a6a2a"/></svg>
<svg style="position:absolute;left:9.5px;top:263px" width="8" height="8" viewBox="0 0 16 16"><circle cx="8" cy="8.5" r="6" fill="#fff" stroke="#1a50d0" stroke-width="2.6"/><rect x="4" y="7.5" width="8" height="2" fill="#1a50d0"/><path d="M2 5 Q8 -1 15 3" fill="none" stroke="#e0b020" stroke-width="1.2"/></svg>
<svg style="position:absolute;left:9.5px;top:272.5px" width="8" height="8" viewBox="0 0 16 16"><circle cx="8" cy="8" r="7" fill="#2050d0" stroke="#102060"/><path d="M2 6 Q8 10 14 6 M2 11 Q8 7 14 11" fill="none" stroke="#fff" stroke-width="1.6"/></svg>
<svg style="position:absolute;left:9.5px;top:286.5px" width="8" height="8" viewBox="0 0 16 16"><rect x="1" y="3" width="14" height="10" fill="#eee" stroke="#bbb"/><path d="M1 3 L8 9 L15 3" fill="none" stroke="#bbb"/></svg>
<svg style="position:absolute;left:9.5px;top:298.5px" width="8" height="8" viewBox="0 0 16 16"><rect x="3" y="3" width="10" height="12" fill="#fff" stroke="#222" stroke-width="1.4"/><rect x="5" y="1" width="9" height="3" fill="#fff" stroke="#222"/></svg>
<svg style="position:absolute;left:9.5px;top:308px" width="8" height="8" viewBox="0 0 16 16"><rect x="1" y="6" width="14" height="7" fill="#aaa" stroke="#222"/><rect x="4" y="1" width="8" height="5" fill="#fff" stroke="#222"/><rect x="4" y="12" width="8" height="3" fill="#fff" stroke="#222"/></svg>
<svg style="position:absolute;left:9.5px;top:321.5px" width="8" height="8" viewBox="0 0 16 16"><circle cx="9" cy="5" r="3.5" fill="#2040a0"/><path d="M2 15 L7 7 L12 15 Z" fill="#c02030"/><circle cx="12" cy="12" r="3" fill="#fff" stroke="#333"/></svg>
<svg style="position:absolute;left:9.5px;top:331.5px" width="8" height="8" viewBox="0 0 16 16"><path d="M4.5 5.5 A3.5 3.5 0 1 1 10 8.5 L8 10 L8 12" fill="none" stroke="#222" stroke-width="3.2"/><path d="M4.5 5.5 A3.5 3.5 0 1 1 10 8.5 L8 10 L8 12" fill="none" stroke="#f0e020" stroke-width="1.6"/><rect x="6.5" y="13" width="3" height="2.5" fill="#222"/></svg>
<div style="left:9px;top:284px;width:10px;height:0.8px;background:#c0c0c0;"></div>
<div style="left:9px;top:295px;width:10px;height:0.8px;background:#c0c0c0;"></div>
<div style="left:21.5px;top:240px;width:7px;height:6px;border:0.8px solid #2a3a8a;background:#fff;border-radius:1px;"></div>
<div style="left:26px;top:244px;width:3.5px;height:3.5px;background:#d8c030;transform:rotate(45deg);"></div>
<div class="t" style="left:33.5px;top:239.5px;width:15px;height:10px;line-height:10px;text-align:left;font-size:5.6px;color:#000;">Edit</div>
<div style="left:42.5px;top:239.5px;width:0.8px;height:10px;background:#999;"></div>
<div style="left:45px;top:240.5px;width:8px;height:8px;background:#222;"></div>
<div style="left:46px;top:242.5px;width:3px;height:3px;background:#ff0;"></div>
<div style="left:50px;top:242.5px;width:2px;height:4px;background:#eee;"></div>
<div class="t" style="left:55px;top:240px;width:25px;height:10px;line-height:10px;text-align:left;font-size:5.6px;color:#000;">Listing</div>
<div style="left:71px;top:239.5px;width:0.8px;height:10px;background:#999;"></div>
<div style="left:74px;top:241px;width:8px;height:7px;background:#c02040;border-radius:1px;"></div>
<div style="left:77px;top:243px;width:5px;height:5px;background:#3050c0;"></div>
<div class="t" style="left:83.5px;top:240px;width:30px;height:10px;line-height:10px;text-align:left;font-size:5.6px;color:#000;">Explorer</div>
<div style="left:104.5px;top:239.5px;width:0.8px;height:10px;background:#999;"></div>
<div style="left:20px;top:250.5px;width:227px;height:91px;background:#f0f0f0;border-right:1px solid #999;border-bottom:1px solid #999;"></div>
<div style="left:21px;top:253.5px;width:207px;height:35px;border:1px solid #d5d9dd;border-radius:2px;box-sizing:border-box;"></div>
<div class="t" style="left:24px;top:249.5px;height:8px;line-height:8px;padding:0 1px;background:#f0f0f0;font-size:5.3px;color:#000">Station</div>
<div style="left:24.5px;top:260px;width:14.5px;height:9px;background:linear-gradient(#fbfbfb,#e9e9e9);border-top:1px solid #fff;border-left:1px solid #fff;border-right:1px solid #8c8c8c;border-bottom:1px solid #8c8c8c;box-shadow:0.5px 0.5px 0 #c8c8c8;box-sizing:border-box;"></div>
<div class="t" style="left:24.5px;top:260.4px;width:14.5px;height:9px;line-height:9px;text-align:center;font-size:6px;color:#000;font-weight:bold;letter-spacing:0.3px;">&gt;&gt;&gt;</div>
<div class="t" style="left:42px;top:255px;width:60px;height:6px;line-height:6px;text-align:left;font-size:5.3px;color:#000;">Call</div>
<div style="left:42px;top:261px;width:52px;height:9.5px;background:#fff;border:1px solid #a9a9a9;border-bottom-color:#dcdcdc;border-right-color:#dcdcdc;box-sizing:border-box;"></div>
<div class="t" style="left:97px;top:255px;width:60px;height:6px;line-height:6px;text-align:left;font-size:5.3px;color:#000;">Name</div>
<div style="left:97px;top:261px;width:41px;height:9.5px;background:#fff;border:1px solid #a9a9a9;border-bottom-color:#dcdcdc;border-right-color:#dcdcdc;box-sizing:border-box;"></div>
<div class="t" style="left:141.5px;top:255px;width:60px;height:6px;line-height:6px;text-align:left;font-size:5.3px;color:#000;">QTH</div>
<div style="left:141px;top:261px;width:60px;height:9.5px;background:#fff;border:1px solid #a9a9a9;border-bottom-color:#dcdcdc;border-right-color:#dcdcdc;box-sizing:border-box;"></div>
<div class="t" style="left:205px;top:255px;width:60px;height:6px;line-height:6px;text-align:left;font-size:5.3px;color:#000;">State</div>
<div style="left:204px;top:261px;width:21px;height:9.5px;background:#fff;border:1px solid #a9a9a9;border-bottom-color:#dcdcdc;border-right-color:#dcdcdc;box-sizing:border-box;"></div>
<div style="left:24.5px;top:276.5px;width:14.5px;height:9px;background:linear-gradient(#fbfbfb,#e9e9e9);border-top:1px solid #fff;border-left:1px solid #fff;border-right:1px solid #8c8c8c;border-bottom:1px solid #8c8c8c;box-shadow:0.5px 0.5px 0 #c8c8c8;box-sizing:border-box;"></div>
<div class="t" style="left:24.5px;top:276.9px;width:14.5px;height:9px;line-height:9px;text-align:center;font-size:6px;color:#000;font-weight:bold;letter-spacing:0.3px;">&gt;&gt;&gt;</div>
<div class="t" style="left:43px;top:271px;width:60px;height:6px;line-height:6px;text-align:left;font-size:5.3px;color:#000;">Country</div>
<div style="left:42px;top:277px;width:59px;height:9.5px;background:#fff;border:1px solid #a9a9a9;border-bottom-color:#dcdcdc;border-right-color:#dcdcdc;box-sizing:border-box;"></div>
<div style="left:102.5px;top:278px;width:6.5px;height:8px;background:linear-gradient(#fbfbfb,#e9e9e9);border-top:1px solid #fff;border-left:1px solid #fff;border-right:1px solid #8c8c8c;border-bottom:1px solid #8c8c8c;box-shadow:0.5px 0.5px 0 #c8c8c8;box-sizing:border-box;"></div>
<div class="t" style="left:102.5px;top:278.4px;width:6.5px;height:8px;line-height:8px;text-align:center;font-size:5px;color:#000;">+</div>
<div class="t" style="left:111px;top:271px;width:60px;height:6px;line-height:6px;text-align:left;font-size:5.3px;color:#000;">Cont</div>
<div style="left:111px;top:277px;width:23px;height:9.5px;background:#fff;border:1px solid #a9a9a9;border-bottom-color:#dcdcdc;border-right-color:#dcdcdc;box-sizing:border-box;background:#fff;"></div>
<div style="left:125px;top:278px;width:8px;height:7.5px;background:linear-gradient(#fff,#e4e4e4);border-left:1px solid #d0d0d0;box-sizing:border-box;"></div>
<div style="left:127.5px;top:280.95px;width:0;height:0;border-left:1.5px solid transparent;border-right:1.5px solid transparent;border-top:2px solid #111"></div>
<div class="t" style="left:136px;top:271px;width:60px;height:6px;line-height:6px;text-align:left;font-size:5.3px;color:#000;">CQ Z.</div>
<div style="left:136px;top:277px;width:22px;height:9.5px;background:#fff;border:1px solid #a9a9a9;border-bottom-color:#dcdcdc;border-right-color:#dcdcdc;box-sizing:border-box;"></div>
<div class="t" style="left:160px;top:271px;width:60px;height:6px;line-height:6px;text-align:left;font-size:5.3px;color:#000;">ITU Z.</div>
<div style="left:160px;top:277px;width:22px;height:9.5px;background:#fff;border:1px solid #a9a9a9;border-bottom-color:#dcdcdc;border-right-color:#dcdcdc;box-sizing:border-box;"></div>
<div class="t" style="left:184px;top:271px;width:60px;height:6px;line-height:6px;text-align:left;font-size:5.3px;color:#000;">Grid</div>
<div style="left:184px;top:277px;width:28px;height:9.5px;background:#fff;border:1px solid #a9a9a9;border-bottom-color:#dcdcdc;border-right-color:#dcdcdc;box-sizing:border-box;"></div>
<div style="left:214px;top:277px;width:11.5px;height:9px;background:linear-gradient(#fbfbfb,#e9e9e9);border-top:1px solid #fff;border-left:1px solid #fff;border-right:1px solid #8c8c8c;border-bottom:1px solid #8c8c8c;box-shadow:0.5px 0.5px 0 #c8c8c8;box-sizing:border-box;"></div>
<div class="t" style="left:214px;top:277.4px;width:11.5px;height:9px;line-height:9px;text-align:center;font-size:5px;color:#000;">...</div>
<div style="left:21px;top:293.5px;width:116px;height:20px;border:1px solid #d5d9dd;border-radius:2px;box-sizing:border-box;"></div>
<div class="t" style="left:24px;top:289.5px;height:8px;line-height:8px;padding:0 1px;background:#f0f0f0;font-size:5.3px;color:#000">Date</div>
<div style="left:24.5px;top:302px;width:14.5px;height:9px;background:linear-gradient(#fbfbfb,#e9e9e9);border-top:1px solid #fff;border-left:1px solid #fff;border-right:1px solid #8c8c8c;border-bottom:1px solid #8c8c8c;box-shadow:0.5px 0.5px 0 #c8c8c8;box-sizing:border-box;"></div>
<div class="t" style="left:24.5px;top:302.4px;width:14.5px;height:9px;line-height:9px;text-align:center;font-size:6px;color:#000;font-weight:bold;letter-spacing:0.3px;">&gt;&gt;&gt;</div>
<div class="t" style="left:41px;top:297px;width:60px;height:6px;line-height:6px;text-align:left;font-size:5.3px;color:#000;">Day</div>
<div style="left:41px;top:302px;width:13.5px;height:9.5px;background:#fff;border:1px solid #a9a9a9;border-bottom-color:#dcdcdc;border-right-color:#dcdcdc;box-sizing:border-box;"></div>
<div class="t" style="left:57px;top:297px;width:60px;height:6px;line-height:6px;text-align:left;font-size:5.3px;color:#000;">Month</div>
<div style="left:57px;top:302px;width:24px;height:9.5px;background:#fff;border:1px solid #a9a9a9;border-bottom-color:#dcdcdc;border-right-color:#dcdcdc;box-sizing:border-box;background:#fff;"></div>
<div style="left:72px;top:303px;width:8px;height:7.5px;background:linear-gradient(#fff,#e4e4e4);border-left:1px solid #d0d0d0;box-sizing:border-box;"></div>
<div style="left:74.5px;top:305.95px;width:0;height:0;border-left:1.5px solid transparent;border-right:1.5px solid transparent;border-top:2px solid #111"></div>
<div class="t" style="left:83px;top:297px;width:60px;height:6px;line-height:6px;text-align:left;font-size:5.3px;color:#000;">Year</div>
<div style="left:83px;top:302px;width:15.5px;height:9.5px;background:#fff;border:1px solid #a9a9a9;border-bottom-color:#dcdcdc;border-right-color:#dcdcdc;box-sizing:border-box;"></div>
<div class="t" style="left:100px;top:297px;width:60px;height:6px;line-height:6px;text-align:left;font-size:5.3px;color:#000;">DR</div>
<div style="left:100px;top:302px;width:17px;height:9.5px;background:#fff;border:1px solid #a9a9a9;border-bottom-color:#dcdcdc;border-right-color:#dcdcdc;box-sizing:border-box;"></div>
<div class="t" style="left:119px;top:297px;width:60px;height:6px;line-height:6px;text-align:left;font-size:5.3px;color:#000;">OFF</div>
<div style="left:119px;top:302px;width:17px;height:9.5px;background:#fff;border:1px solid #a9a9a9;border-bottom-color:#dcdcdc;border-right-color:#dcdcdc;box-sizing:border-box;"></div>
<div style="left:21px;top:316px;width:117px;height:21px;border:1px solid #d5d9dd;border-radius:2px;box-sizing:border-box;"></div>
<div class="t" style="left:24px;top:312px;height:8px;line-height:8px;padding:0 1px;background:#f0f0f0;font-size:5.3px;color:#000">QSL</div>
<div class="t" style="left:25px;top:320px;width:60px;height:6px;line-height:6px;text-align:left;font-size:5.3px;color:#000;">RCVD</div>
<div style="left:25px;top:326px;width:17.5px;height:9.5px;background:#fff;border:1px solid #a9a9a9;border-bottom-color:#dcdcdc;border-right-color:#dcdcdc;box-sizing:border-box;background:#fff;"></div>
<div style="left:33.5px;top:327px;width:8px;height:7.5px;background:linear-gradient(#fff,#e4e4e4);border-left:1px solid #d0d0d0;box-sizing:border-box;"></div>
<div style="left:36.0px;top:329.95px;width:0;height:0;border-left:1.5px solid transparent;border-right:1.5px solid transparent;border-top:2px solid #111"></div>
<div class="t" style="left:44.5px;top:320px;width:60px;height:6px;line-height:6px;text-align:left;font-size:5.3px;color:#000;">Sent</div>
<div style="left:45px;top:326px;width:18px;height:9.5px;background:#fff;border:1px solid #a9a9a9;border-bottom-color:#dcdcdc;border-right-color:#dcdcdc;box-sizing:border-box;background:#fff;"></div>
<div style="left:54px;top:327px;width:8px;height:7.5px;background:linear-gradient(#fff,#e4e4e4);border-left:1px solid #d0d0d0;box-sizing:border-box;"></div>
<div style="left:56.5px;top:329.95px;width:0;height:0;border-left:1.5px solid transparent;border-right:1.5px solid transparent;border-top:2px solid #111"></div>
<div class="t" style="left:65px;top:320px;width:60px;height:6px;line-height:6px;text-align:left;font-size:5.3px;color:#000;">Print</div>
<div style="left:65px;top:326px;width:17px;height:9.5px;background:#fff;border:1px solid #a9a9a9;border-bottom-color:#dcdcdc;border-right-color:#dcdcdc;box-sizing:border-box;background:#fff;"></div>
<div style="left:73px;top:327px;width:8px;height:7.5px;background:linear-gradient(#fff,#e4e4e4);border-left:1px solid #d0d0d0;box-sizing:border-box;"></div>
<div style="left:75.5px;top:329.95px;width:0;height:0;border-left:1.5px solid transparent;border-right:1.5px solid transparent;border-top:2px solid #111"></div>
<div class="t" style="left:86px;top:320px;width:60px;height:6px;line-height:6px;text-align:left;font-size:5.3px;color:#000;">Via</div>
<div style="left:84px;top:326px;width:38px;height:9.5px;background:#fff;border:1px solid #a9a9a9;border-bottom-color:#dcdcdc;border-right-color:#dcdcdc;box-sizing:border-box;"></div>
<div style="left:125px;top:326px;width:11.5px;height:9px;background:linear-gradient(#fbfbfb,#e9e9e9);border-top:1px solid #fff;border-left:1px solid #fff;border-right:1px solid #8c8c8c;border-bottom:1px solid #8c8c8c;box-shadow:0.5px 0.5px 0 #c8c8c8;box-sizing:border-box;"></div>
<div class="t" style="left:125px;top:326.4px;width:11.5px;height:9px;line-height:9px;text-align:center;font-size:5px;color:#000;">...</div>
<div style="left:141px;top:293.5px;width:87.5px;height:43.5px;border:1px solid #d5d9dd;border-radius:2px;box-sizing:border-box;"></div>
<div class="t" style="left:144px;top:289.5px;height:8px;line-height:8px;padding:0 1px;background:#f0f0f0;font-size:5.3px;color:#000">[1] IC-7800</div>
<div style="left:145px;top:302px;width:15px;height:9px;background:linear-gradient(#fbfbfb,#e9e9e9);border-top:1px solid #fff;border-left:1px solid #fff;border-right:1px solid #8c8c8c;border-bottom:1px solid #8c8c8c;box-shadow:0.5px 0.5px 0 #c8c8c8;box-sizing:border-box;"></div>
<div class="t" style="left:145px;top:302.4px;width:15px;height:9px;line-height:9px;text-align:center;font-size:6px;color:#000;font-weight:bold;letter-spacing:0.3px;">&gt;&gt;&gt;</div>
<div class="t" style="left:162px;top:297px;width:60px;height:6px;line-height:6px;text-align:left;font-size:5.3px;color:#000;">MHz</div>
<div style="left:162px;top:302px;width:30px;height:9.5px;background:#fff;border:1px solid #a9a9a9;border-bottom-color:#dcdcdc;border-right-color:#dcdcdc;box-sizing:border-box;"></div>
<div class="t" style="left:164px;top:302px;width:28px;height:9.5px;line-height:9.5px;text-align:left;font-size:5.3px;color:#000;">0</div>
<div class="t" style="left:195px;top:297px;width:60px;height:6px;line-height:6px;text-align:left;font-size:5.3px;color:#000;">Mode</div>
<div style="left:195px;top:302px;width:29.5px;height:9.5px;background:#fff;border:1px solid #a9a9a9;border-bottom-color:#dcdcdc;border-right-color:#dcdcdc;box-sizing:border-box;background:#fff;"></div>
<div style="left:215.5px;top:303px;width:8px;height:7.5px;background:linear-gradient(#fff,#e4e4e4);border-left:1px solid #d0d0d0;box-sizing:border-box;"></div>
<div style="left:218.0px;top:305.95px;width:0;height:0;border-left:1.5px solid transparent;border-right:1.5px solid transparent;border-top:2px solid #111"></div>
<div class="t" style="left:197px;top:302px;width:19.5px;height:9.5px;line-height:9.5px;text-align:left;font-size:5.3px;color:#000;">SSB</div>
<div style="left:144px;top:317.5px;width:80.5px;height:0.8px;background:#a0a0a0;"></div>
<div class="t" style="left:144px;top:320px;width:60px;height:6px;line-height:6px;text-align:left;font-size:5.3px;color:#000;">Band</div>
<div style="left:144px;top:326px;width:22px;height:9.5px;background:#fff;border:1px solid #a9a9a9;border-bottom-color:#dcdcdc;border-right-color:#dcdcdc;box-sizing:border-box;background:#fff;"></div>
<div style="left:157px;top:327px;width:8px;height:7.5px;background:linear-gradient(#fff,#e4e4e4);border-left:1px solid #d0d0d0;box-sizing:border-box;"></div>
<div style="left:159.5px;top:329.95px;width:0;height:0;border-left:1.5px solid transparent;border-right:1.5px solid transparent;border-top:2px solid #111"></div>
<div class="t" style="left:169px;top:320px;width:60px;height:6px;line-height:6px;text-align:left;font-size:5.3px;color:#000;">RST R</div>
<div style="left:169px;top:326px;width:20.5px;height:9.5px;background:#fff;border:1px solid #a9a9a9;border-bottom-color:#dcdcdc;border-right-color:#dcdcdc;box-sizing:border-box;"></div>
<div class="t" style="left:192px;top:320px;width:60px;height:6px;line-height:6px;text-align:left;font-size:5.3px;color:#000;">RST S</div>
<div style="left:192px;top:326px;width:20.5px;height:9.5px;background:#fff;border:1px solid #a9a9a9;border-bottom-color:#dcdcdc;border-right-color:#dcdcdc;box-sizing:border-box;"></div>
<div class="t" style="left:194px;top:326px;width:18.5px;height:9.5px;line-height:9.5px;text-align:left;font-size:5.3px;color:#000;">50</div>
<div style="left:214px;top:326.5px;width:11.5px;height:8.5px;background:linear-gradient(#fbfbfb,#e9e9e9);border-top:1px solid #fff;border-left:1px solid #fff;border-right:1px solid #8c8c8c;border-bottom:1px solid #8c8c8c;box-shadow:0.5px 0.5px 0 #c8c8c8;box-sizing:border-box;"></div>
<div class="t" style="left:214px;top:326.9px;width:11.5px;height:8.5px;line-height:8.5px;text-align:center;font-size:5px;color:#000;">...</div>
<div style="left:20px;top:343.5px;width:227px;height:10px;background:#f0f0f0;border:1px solid #c8c8c8;"></div>
<div style="left:20px;top:344px;width:9px;height:9.5px;background:linear-gradient(#fbfbfb,#e9e9e9);border-top:1px solid #fff;border-left:1px solid #fff;border-right:1px solid #8c8c8c;border-bottom:1px solid #8c8c8c;box-shadow:0.5px 0.5px 0 #c8c8c8;box-sizing:border-box;"></div>
<svg style="position:absolute;left:20.5px;top:344.8px" width="8" height="8" viewBox="0 0 16 16"><rect x="3" y="4" width="2" height="8" fill="#000"/><path d="M13 4 L6 8 L13 12Z" fill="#000"/></svg>
<div style="left:29px;top:344px;width:9px;height:9.5px;background:linear-gradient(#fbfbfb,#e9e9e9);border-top:1px solid #fff;border-left:1px solid #fff;border-right:1px solid #8c8c8c;border-bottom:1px solid #8c8c8c;box-shadow:0.5px 0.5px 0 #c8c8c8;box-sizing:border-box;"></div>
<svg style="position:absolute;left:29.5px;top:344.8px" width="8" height="8" viewBox="0 0 16 16"><path d="M8 4 L2 8 L8 12Z M14 4 L8 8 L14 12Z" fill="#000"/></svg>
<div style="left:38px;top:344px;width:9px;height:9.5px;background:linear-gradient(#fbfbfb,#e9e9e9);border-top:1px solid #fff;border-left:1px solid #fff;border-right:1px solid #8c8c8c;border-bottom:1px solid #8c8c8c;box-shadow:0.5px 0.5px 0 #c8c8c8;box-sizing:border-box;"></div>
<svg style="position:absolute;left:38.5px;top:344.8px" width="8" height="8" viewBox="0 0 16 16"><path d="M11 4 L5 8 L11 12Z" fill="#000"/></svg>
<div style="left:47px;top:344px;width:9px;height:9.5px;background:linear-gradient(#fbfbfb,#e9e9e9);border-top:1px solid #fff;border-left:1px solid #fff;border-right:1px solid #8c8c8c;border-bottom:1px solid #8c8c8c;box-shadow:0.5px 0.5px 0 #c8c8c8;box-sizing:border-box;"></div>
<svg style="position:absolute;left:47.5px;top:344.8px" width="8" height="8" viewBox="0 0 16 16"><path d="M3 4 L7 8 M7 4 L3 8 M9 13 L13 4" stroke="#aaa" stroke-width="1.4"/></svg>
<div style="left:56px;top:344px;width:9px;height:9.5px;background:linear-gradient(#fbfbfb,#e9e9e9);border-top:1px solid #fff;border-left:1px solid #fff;border-right:1px solid #8c8c8c;border-bottom:1px solid #8c8c8c;box-shadow:0.5px 0.5px 0 #c8c8c8;box-sizing:border-box;"></div>
<svg style="position:absolute;left:56.5px;top:344.8px" width="8" height="8" viewBox="0 0 16 16"><path d="M3 4 L7 8 M7 4 L3 8 M9 13 L13 4" stroke="#aaa" stroke-width="1.4"/></svg>
<div style="left:65px;top:344px;width:9px;height:9.5px;background:linear-gradient(#fbfbfb,#e9e9e9);border-top:1px solid #fff;border-left:1px solid #fff;border-right:1px solid #8c8c8c;border-bottom:1px solid #8c8c8c;box-shadow:0.5px 0.5px 0 #c8c8c8;box-sizing:border-box;"></div>
<svg style="position:absolute;left:65.5px;top:344.8px" width="8" height="8" viewBox="0 0 16 16"><rect x="4" y="7" width="8" height="2.2" fill="#000"/></svg>
<div style="left:74px;top:344px;width:9px;height:9.5px;background:linear-gradient(#fbfbfb,#e9e9e9);border-top:1px solid #fff;border-left:1px solid #fff;border-right:1px solid #8c8c8c;border-bottom:1px solid #8c8c8c;box-shadow:0.5px 0.5px 0 #c8c8c8;box-sizing:border-box;"></div>
<svg style="position:absolute;left:74.5px;top:344.8px" width="8" height="8" viewBox="0 0 16 16"><path d="M4 3 L11 10 L12 13 L9 12 L2 5Z" fill="#fff" stroke="#000" stroke-width="1.3"/></svg>
<div class="t" style="left:120.5px;top:344.8px;width:30px;height:9.5px;line-height:9.5px;text-align:left;font-size:6px;color:#000;">CX7BZ</div>
<div style="left:177.0px;top:344px;width:8.8px;height:9.5px;background:linear-gradient(#fbfbfb,#e9e9e9);border-top:1px solid #fff;border-left:1px solid #fff;border-right:1px solid #8c8c8c;border-bottom:1px solid #8c8c8c;box-shadow:0.5px 0.5px 0 #c8c8c8;box-sizing:border-box;"></div>
<svg style="position:absolute;left:177.4px;top:344.8px" width="8" height="8" viewBox="0 0 16 16"><path d="M3 4 L7 8 M7 4 L3 8 M9 13 L13 4" stroke="#999" stroke-width="1.4"/></svg>
<div style="left:185.8px;top:344px;width:8.8px;height:9.5px;background:linear-gradient(#fbfbfb,#e9e9e9);border-top:1px solid #fff;border-left:1px solid #fff;border-right:1px solid #8c8c8c;border-bottom:1px solid #8c8c8c;box-shadow:0.5px 0.5px 0 #c8c8c8;box-sizing:border-box;"></div>
<svg style="position:absolute;left:186.20000000000002px;top:344.8px" width="8" height="8" viewBox="0 0 16 16"><path d="M4 3 H12 V9 H8 L5 13Z" fill="#fff" stroke="#555" stroke-width="1.2"/></svg>
<div style="left:194.6px;top:344px;width:8.8px;height:9.5px;background:linear-gradient(#fbfbfb,#e9e9e9);border-top:1px solid #fff;border-left:1px solid #fff;border-right:1px solid #8c8c8c;border-bottom:1px solid #8c8c8c;box-shadow:0.5px 0.5px 0 #c8c8c8;box-sizing:border-box;"></div>
<svg style="position:absolute;left:195.0px;top:344.8px" width="8" height="8" viewBox="0 0 16 16"><rect x="2" y="5" width="5" height="8" rx="1.5" fill="#000"/><rect x="9" y="5" width="5" height="8" rx="1.5" fill="#000"/></svg>
<div style="left:203.4px;top:344px;width:8.8px;height:9.5px;background:linear-gradient(#fbfbfb,#e9e9e9);border-top:1px solid #fff;border-left:1px solid #fff;border-right:1px solid #8c8c8c;border-bottom:1px solid #8c8c8c;box-shadow:0.5px 0.5px 0 #c8c8c8;box-sizing:border-box;"></div>
<svg style="position:absolute;left:203.8px;top:344.8px" width="8" height="8" viewBox="0 0 16 16"><rect x="2" y="5" width="5" height="8" rx="1.5" fill="#bbb"/><rect x="9" y="5" width="5" height="8" rx="1.5" fill="#bbb"/></svg>
<div style="left:212.2px;top:344px;width:8.8px;height:9.5px;background:linear-gradient(#fbfbfb,#e9e9e9);border-top:1px solid #fff;border-left:1px solid #fff;border-right:1px solid #8c8c8c;border-bottom:1px solid #8c8c8c;box-shadow:0.5px 0.5px 0 #c8c8c8;box-sizing:border-box;"></div>
<svg style="position:absolute;left:212.60000000000002px;top:344.8px" width="8" height="8" viewBox="0 0 16 16"><rect x="2" y="5" width="5" height="8" rx="1.5" fill="#bbb"/><rect x="9" y="5" width="5" height="8" rx="1.5" fill="#bbb"/></svg>
<div style="left:221.0px;top:344px;width:8.8px;height:9.5px;background:linear-gradient(#fbfbfb,#e9e9e9);border-top:1px solid #fff;border-left:1px solid #fff;border-right:1px solid #8c8c8c;border-bottom:1px solid #8c8c8c;box-shadow:0.5px 0.5px 0 #c8c8c8;box-sizing:border-box;"></div>
<svg style="position:absolute;left:221.4px;top:344.8px" width="8" height="8" viewBox="0 0 16 16"><path d="M5 4 L11 8 L5 12Z" fill="#aaa"/></svg>
<div style="left:229.8px;top:344px;width:8.8px;height:9.5px;background:linear-gradient(#fbfbfb,#e9e9e9);border-top:1px solid #fff;border-left:1px solid #fff;border-right:1px solid #8c8c8c;border-bottom:1px solid #8c8c8c;box-shadow:0.5px 0.5px 0 #c8c8c8;box-sizing:border-box;"></div>
<svg style="position:absolute;left:230.20000000000002px;top:344.8px" width="8" height="8" viewBox="0 0 16 16"><path d="M2 4 L8 8 L2 12Z M8 4 L14 8 L8 12Z" fill="#888"/></svg>
<div style="left:238.60000000000002px;top:344px;width:8.8px;height:9.5px;background:linear-gradient(#fbfbfb,#e9e9e9);border-top:1px solid #fff;border-left:1px solid #fff;border-right:1px solid #8c8c8c;border-bottom:1px solid #8c8c8c;box-shadow:0.5px 0.5px 0 #c8c8c8;box-sizing:border-box;"></div>
<svg style="position:absolute;left:239.0px;top:344.8px" width="8" height="8" viewBox="0 0 16 16"><path d="M3 4 L10 8 L3 12Z" fill="#888"/><rect x="11" y="4" width="2" height="8" fill="#888"/></svg>
<div style="left:4px;top:360.2px;width:202.6px;height:85.5px;border:0.8px solid #646c76;border-radius:3px 3px 1px 1px;background:linear-gradient(#dce6f0 0px,#dce6f0 0.8px,#b7c7d8 1.8px,#c4d2e1 6px,#d6e2ee 13px,#dae5f1 100%);box-shadow:0.5px 0.5px 1px rgba(0,0,0,.25);"></div>
<div style="left:6.6px;top:373.59999999999997px;width:197.4px;height:69.5px;background:#f0f0f0;border:0.5px solid #c8d4e0;"></div>
<svg style="position:absolute;left:7.5px;top:364.2px" width="8.5" height="8.5" viewBox="0 0 16 16"><rect x="1" y="1" width="14" height="14" rx="3" fill="#e8d830" stroke="#553"/><circle cx="5.5" cy="6" r="2" fill="#c02020"/><circle cx="10.5" cy="6" r="2" fill="#c02020"/><path d="M4 10 Q8 14 12 10" fill="none" stroke="#333" stroke-width="1.5"/></svg>
<div class="t" style="left:16.8px;top:364.8px;height:9px;line-height:9px;font-size:5.6px;color:#465470;white-space:nowrap">Sound recorder [HK3C_Oct26_2012_TRX.wav]</div>
<div style="left:158.6px;top:364.5px;width:13.8px;height:8px;background:linear-gradient(#dde6f0,#cad7e5);border:0.8px solid #9aaabb;border-radius:1px;"></div>
<div style="left:162.6px;top:369.4px;width:6px;height:1.2px;background:#7a8594;"></div>
<div style="left:173.5px;top:364.5px;width:13.8px;height:8px;background:linear-gradient(#dde6f0,#cad7e5);border:0.8px solid #9aaabb;border-radius:1px;"></div>
<div style="left:177.8px;top:366.8px;width:5.5px;height:3.2px;border:1px solid #7a8594;border-radius:0.8px;"></div>
<div style="left:188.4px;top:364.5px;width:13.8px;height:8px;background:linear-gradient(#dde6f0,#cad7e5);border:0.8px solid #9aaabb;border-radius:1px;"></div>
<svg style="position:absolute;left:192.8px;top:366.5px" width="5" height="4" viewBox="0 0 5 4"><path d="M0.3 0.3 L4.7 3.7 M4.7 0.3 L0.3 3.7" stroke="#6a7584" stroke-width="1.3"/></svg>
<div style="left:9px;top:374px;width:188px;height:11px;background:linear-gradient(#f9fafb,#eceef1);border-bottom:1px solid #d8dbe0;"></div>
<div style="left:11px;top:375.5px;width:1px;height:9px;background:#c0c4c8;"></div>
<svg style="position:absolute;left:12.5px;top:376px" width="8" height="8" viewBox="0 0 16 16"><path d="M1 4 L6 4 L7 2.5 L12 2.5 L12 6 L15 6 L12 14 L1 14 Z" fill="#d8c040" stroke="#6a5a10"/><path d="M3 8 L15.5 8 L12.5 14 L1 14 Z" fill="#f0e070" stroke="#6a5a10"/></svg>
<svg style="position:absolute;left:23px;top:376px" width="8" height="8" viewBox="0 0 16 16"><rect x="1" y="1" width="14" height="14" fill="#3a3a20" stroke="#111"/><rect x="3.5" y="1.5" width="9" height="5" fill="#e0e0a0"/><rect x="4" y="10" width="8" height="4.5" fill="#aaa040"/></svg>
<div style="left:33.5px;top:375.5px;width:0.8px;height:9px;background:#c8c8c8;"></div>
<div style="left:36px;top:376px;width:7px;height:7.5px;border:1px solid #bbb;"></div>
<div class="t" style="left:45px;top:374px;width:9px;height:11px;line-height:11px;text-align:center;font-size:6px;color:#aaa;">✕</div>
<div style="left:58px;top:376px;width:2px;height:8px;background:#aaa;transform:rotate(-40deg);"></div>
<div style="left:66px;top:375.5px;width:0.8px;height:9px;background:#c8c8c8;"></div>
<svg style="position:absolute;left:68.5px;top:376px" width="8" height="8" viewBox="0 0 16 16"><path d="M1 4 L6 4 L7 2.5 L12 2.5 L12 6 L15 6 L12 14 L1 14 Z" fill="#d8c040" stroke="#6a5a10"/><path d="M3 8 L15.5 8 L12.5 14 L1 14 Z" fill="#f0e070" stroke="#6a5a10"/></svg>
<svg style="position:absolute;left:78.5px;top:376px" width="8" height="8" viewBox="0 0 16 16"><rect x="0.5" y="1" width="15" height="14" fill="#222"/><path d="M2 12 L5 5 L8 10 L11 3 L14 9" fill="none" stroke="#e03030" stroke-width="2"/><rect x="2" y="12" width="12" height="2" fill="#30c040"/></svg>
<div style="left:88.5px;top:375.5px;width:0.8px;height:9px;background:#c8c8c8;"></div>
<svg style="position:absolute;left:91px;top:376px" width="8" height="8" viewBox="0 0 16 16"><rect x="0.5" y="1" width="15" height="10" fill="#9aa0a8" stroke="#334"/><rect x="2" y="3" width="12" height="6" fill="#505a66"/><rect x="3" y="4" width="4" height="3" fill="#e04040"/><rect x="2" y="12" width="12" height="3" fill="#ccc" stroke="#555" stroke-width="0.6"/></svg>
<svg style="position:absolute;left:101px;top:376px" width="8" height="8" viewBox="0 0 16 16"><rect x="1" y="4" width="10" height="11" fill="#ddd" stroke="#333"/><rect x="6" y="1" width="9" height="8" fill="#889" stroke="#333"/></svg>
<div style="left:111px;top:375.5px;width:0.8px;height:9px;background:#c8c8c8;"></div>
<svg style="position:absolute;left:114.5px;top:376px" width="8" height="8" viewBox="0 0 16 16"><path d="M4.5 5.5 A3.5 3.5 0 1 1 10 8.5 L8 10 L8 12" fill="none" stroke="#222" stroke-width="3.2"/><path d="M4.5 5.5 A3.5 3.5 0 1 1 10 8.5 L8 10 L8 12" fill="none" stroke="#f0e020" stroke-width="1.6"/><rect x="6.5" y="13" width="3" height="2.5" fill="#222"/></svg>
<div style="left:126.5px;top:375.5px;width:0.8px;height:9px;background:#c8c8c8;"></div>
<div style="left:131px;top:377px;width:0.8px;height:5px;background:#111;"></div>
<div style="left:132px;top:377px;width:0;height:0;border-top:2.5px solid transparent;border-bottom:2.5px solid transparent;border-right:4px solid #111"></div>
<div style="left:141px;top:377px;width:0;height:0;border-top:2.5px solid transparent;border-bottom:2.5px solid transparent;border-left:4px solid #111"></div>
<div style="left:145.5px;top:377px;width:0.8px;height:5px;background:#111;"></div>
<div style="left:151px;top:377px;width:0;height:0;border-top:2.5px solid transparent;border-bottom:2.5px solid transparent;border-left:4.5px solid #111"></div>
<div style="left:161px;top:377px;width:1px;height:5px;background:#bbb;"></div>
<div style="left:163px;top:377px;width:1px;height:5px;background:#bbb;"></div>
<div style="left:171px;top:377.5px;width:5px;height:4.5px;background:#aaa;"></div>
<div style="left:181px;top:377px;width:5px;height:5px;background:#f00000;border-radius:50%;"></div>
<div style="left:189.5px;top:375.5px;width:0.8px;height:9px;background:#c8c8c8;"></div>
<svg style="position:absolute;left:192.5px;top:376px" width="8" height="8" viewBox="0 0 16 16"><circle cx="8" cy="9" r="6" fill="#c02020" stroke="#222"/><rect x="3" y="2" width="10" height="4" fill="#333"/><rect x="5" y="8" width="6" height="3" fill="#30c040"/></svg>
<div style="left:8.5px;top:388px;width:79px;height:10px;background:#00ffff;"></div>
<div class="t" style="left:10px;top:388px;width:78px;height:10px;line-height:10px;text-align:left;font-size:6.2px;font-weight:bold;color:#111;">Stop 00:00:00.0</div>
<div style="left:97px;top:392.8px;width:92px;height:0.8px;background:#999;border-bottom:0.5px solid #fff;"></div>
<div style="left:97px;top:388.5px;width:3px;height:9.5px;background:linear-gradient(90deg,#fafafa,#ddd);border:0.7px solid #888;border-radius:1px;"></div>
<div style="left:11px;top:402.5px;width:17px;height:9px;background:#fafafa;border:1px solid #aaa;border-bottom:none;"></div>
<div style="left:12.5px;top:404px;width:3px;height:5px;border:0.8px solid #444;"></div>
<div class="t" style="left:17px;top:403px;width:15px;height:9px;line-height:9px;text-align:left;font-size:5.6px;color:#000;">Log</div>
<div style="left:31px;top:403.5px;width:0.8px;height:8px;background:#999;"></div>
<div style="left:33px;top:405px;width:6px;height:6px;background:#f0d020;border:1px solid #555;border-radius:50%;"></div>
<div class="t" style="left:40px;top:403px;width:15px;height:9px;line-height:9px;text-align:left;font-size:5.3px;color:#000;">Unt</div>
<div style="left:53.5px;top:403.5px;width:0.8px;height:8px;background:#999;"></div>
<div style="left:10px;top:411.5px;width:191px;height:28px;border-right:1px solid #888;border-bottom:1px solid #888;border-top:1px solid #fff;"></div>
<div style="left:12px;top:413.5px;width:186.5px;height:20.5px;background:#0000f8;border:0.8px solid #555;"></div>
<div class="t" style="left:14px;top:414.5px;width:120px;height:7px;line-height:7px;text-align:left;font-size:4.9px;font-weight:bold;color:#fff;">10/26/2012 3:22:37 PM 28.395.00 USB</div>
<div style="left:382.4px;top:213.9px;width:132px;height:144.1px;border:0.8px solid #646c76;border-radius:3px 3px 1px 1px;background:linear-gradient(#dce6f0 0px,#dce6f0 0.8px,#b7c7d8 1.8px,#c4d2e1 6px,#d6e2ee 13px,#dae5f1 100%);box-shadow:0.5px 0.5px 1px rgba(0,0,0,.25);"></div>
<div style="left:385.0px;top:227.3px;width:126.8px;height:128.1px;background:#f0f0f0;border:0.5px solid #c8d4e0;"></div>
<svg style="position:absolute;left:386.4px;top:217.9px" width="8" height="8" viewBox="0 0 16 16"><rect x="1" y="1" width="14" height="14" fill="#1a1a1a"/><rect x="3" y="3" width="4" height="4" fill="#f0e020"/><rect x="9" y="3" width="4" height="10" fill="#e8e8e8"/><rect x="3" y="9" width="4" height="4" fill="#e8e8e8"/></svg>
<div class="t" style="left:395.2px;top:218.5px;height:9px;line-height:9px;font-size:5.6px;color:#1a2a3a;white-space:nowrap">Linear Reminder</div>
<div style="left:466.40000000000003px;top:218.20000000000002px;width:13.8px;height:8px;background:linear-gradient(#dde6f0,#cad7e5);border:0.8px solid #9aaabb;border-radius:1px;"></div>
<div style="left:470.40000000000003px;top:223.1px;width:6px;height:1.2px;background:#7a8594;"></div>
<div style="left:481.3px;top:218.20000000000002px;width:13.8px;height:8px;background:linear-gradient(#dde6f0,#cad7e5);border:0.8px solid #9aaabb;border-radius:1px;"></div>
<div style="left:485.6px;top:220.5px;width:5.5px;height:3.2px;border:1px solid #7a8594;border-radius:0.8px;"></div>
<div style="left:496.20000000000005px;top:218.20000000000002px;width:13.8px;height:8px;background:linear-gradient(#e8a090,#c84a34);border:0.8px solid #8a4a40;border-radius:1px;"></div>
<div class="t" style="left:496.20000000000005px;top:217.70000000000002px;width:13.8px;height:8.5px;line-height:8.5px;text-align:center;font-size:5.5px;color:#fff;font-weight:bold;">✕</div>
<div style="left:386px;top:230.5px;width:123px;height:36px;border:1px solid #d5d9dd;border-radius:2px;box-sizing:border-box;"></div>
<div class="t" style="left:390px;top:226.5px;height:8px;line-height:8px;padding:0 1px;background:#f0f0f0;font-size:6px;color:#000">Status</div>
<div style="left:389.5px;top:233px;width:116px;height:29px;background:#0000f8;"></div>
<div class="t" style="left:389.5px;top:233.5px;width:116px;height:11px;line-height:11px;text-align:center;font-size:8.1px;color:#e8e8ff;">TUNED FOR 10a m</div>
<div style="left:392px;top:246px;width:85.5px;height:4.5px;background:#800000;border:0.6px solid #b06060;"></div>
<div class="t" style="left:479px;top:244.5px;width:25px;height:7px;line-height:7px;text-align:left;font-size:5.6px;color:#e0e0ff;">1.50kW</div>
<div style="left:392px;top:255px;width:46px;height:4.5px;background:#800000;border:0.6px solid #b06060;"></div>
<div class="t" style="left:441px;top:253.5px;width:40px;height:7px;line-height:7px;text-align:left;font-size:5.6px;color:#e0e0ff;">SWR &gt; OFF</div>
<div style="left:477px;top:254px;width:3px;height:6px;background:#f00000;"></div>
<div class="t" style="left:486px;top:253.5px;width:20px;height:7px;line-height:7px;text-align:left;font-size:5.6px;color:#e0e0ff;">MAX</div>
<div style="left:418.5px;top:259.5px;width:33px;height:7px;background:#000;"></div>
<div style="left:387px;top:270.5px;width:55.5px;height:65px;border:1px solid #d5d9dd;border-radius:2px;box-sizing:border-box;"></div>
<div style="left:389px;top:273px;width:28.5px;height:12px;background:#f6f6f6;border-top:1px solid #9a9a9a;border-left:1px solid #9a9a9a;border-right:1px solid #fff;border-bottom:1px solid #fff;box-sizing:border-box;"></div>
<div class="t" style="left:389px;top:273px;width:28.5px;height:12px;line-height:12px;text-align:center;font-size:6.2px;color:#000;">Auto</div>
<div style="left:389px;top:290px;width:24.5px;height:12px;background:linear-gradient(#fbfbfb,#e9e9e9);border-top:1px solid #fff;border-left:1px solid #fff;border-right:1px solid #8c8c8c;border-bottom:1px solid #8c8c8c;box-shadow:0.5px 0.5px 0 #c8c8c8;box-sizing:border-box;"></div>
<div class="t" style="left:389px;top:290.4px;width:24.5px;height:12px;line-height:12px;text-align:center;font-size:6.2px;color:#a8a8a8;">OPR</div>
<div style="left:389px;top:305px;width:29px;height:12px;background:linear-gradient(#fbfbfb,#e9e9e9);border-top:1px solid #fff;border-left:1px solid #fff;border-right:1px solid #8c8c8c;border-bottom:1px solid #8c8c8c;box-shadow:0.5px 0.5px 0 #c8c8c8;box-sizing:border-box;"></div>
<div class="t" style="left:389px;top:305.4px;width:29px;height:12px;line-height:12px;text-align:center;font-size:6.2px;color:#000;">Tune F.</div>
<div style="left:389px;top:321px;width:29px;height:12px;background:linear-gradient(#fbfbfb,#e9e9e9);border-top:1px solid #fff;border-left:1px solid #fff;border-right:1px solid #8c8c8c;border-bottom:1px solid #8c8c8c;box-shadow:0.5px 0.5px 0 #c8c8c8;box-sizing:border-box;"></div>
<div class="t" style="left:389px;top:321.4px;width:29px;height:12px;line-height:12px;text-align:center;font-size:6.2px;color:#000;">Tune &gt;</div>
<div style="left:424px;top:276.0px;width:1px;height:0.9px;background:#444;"></div>
<div style="left:436.5px;top:276.0px;width:1px;height:0.9px;background:#444;"></div>
<div style="left:424px;top:279.6px;width:1px;height:0.9px;background:#444;"></div>
<div style="left:436.5px;top:279.6px;width:1px;height:0.9px;background:#444;"></div>
<div style="left:424px;top:283.2px;width:1px;height:0.9px;background:#444;"></div>
<div style="left:436.5px;top:283.2px;width:1px;height:0.9px;background:#444;"></div>
<div style="left:424px;top:286.8px;width:1px;height:0.9px;background:#444;"></div>
<div style="left:436.5px;top:286.8px;width:1px;height:0.9px;background:#444;"></div>
<div style="left:424px;top:290.4px;width:1px;height:0.9px;background:#444;"></div>
<div style="left:436.5px;top:290.4px;width:1px;height:0.9px;background:#444;"></div>
<div style="left:424px;top:294.0px;width:1px;height:0.9px;background:#444;"></div>
<div style="left:436.5px;top:294.0px;width:1px;height:0.9px;background:#444;"></div>
<div style="left:424px;top:297.6px;width:1px;height:0.9px;background:#444;"></div>
<div style="left:436.5px;top:297.6px;width:1px;height:0.9px;background:#444;"></div>
<div style="left:424px;top:301.2px;width:1px;height:0.9px;background:#444;"></div>
<div style="left:436.5px;top:301.2px;width:1px;height:0.9px;background:#444;"></div>
<div style="left:424px;top:304.8px;width:1px;height:0.9px;background:#444;"></div>
<div style="left:436.5px;top:304.8px;width:1px;height:0.9px;background:#444;"></div>
<div style="left:424px;top:308.4px;width:1px;height:0.9px;background:#444;"></div>
<div style="left:436.5px;top:308.4px;width:1px;height:0.9px;background:#444;"></div>
<div style="left:424px;top:312.0px;width:1px;height:0.9px;background:#444;"></div>
<div style="left:436.5px;top:312.0px;width:1px;height:0.9px;background:#444;"></div>
<div style="left:424px;top:315.6px;width:1px;height:0.9px;background:#444;"></div>
<div style="left:436.5px;top:315.6px;width:1px;height:0.9px;background:#444;"></div>
<div style="left:429.5px;top:276px;width:1.8px;height:40px;background:#b8b8b8;border-left:0.6px solid #888;border-right:0.6px solid #fff;"></div>
<div style="left:425.5px;top:313px;width:10px;height:4px;background:linear-gradient(#fdfdfd,#e2e2e2);border:0.8px solid #8a8a8a;border-radius:1px;"></div>
<div style="left:423px;top:323px;width:16.5px;height:10.5px;background:#0000f8;border:1px solid #fff;"></div>
<div class="t" style="left:423px;top:323px;width:16.5px;height:10px;line-height:10px;text-align:center;font-size:5.5px;color:#fff;">5</div>
<div style="left:444.5px;top:270.5px;width:64px;height:65px;border:1px solid #d5d9dd;border-radius:2px;box-sizing:border-box;"></div>
<div class="t" style="left:448.5px;top:266.5px;height:8px;line-height:8px;padding:0 1px;background:#f0f0f0;font-size:6px;color:#000">Preset</div>
<div style="left:447.5px;top:276px;width:58px;height:58.5px;background:#0000f8;border:1px solid #d8d8d8;border-right-color:#fff;border-bottom-color:#fff;"></div>
<div style="left:449px;top:277.5px;width:55px;height:10.5px;background:#ff0000;"></div>
<div class="t" style="left:449px;top:277.5px;width:55px;height:10.5px;line-height:10.5px;text-align:center;font-size:8.4px;color:#ffe040;">28.395.00</div>
<div class="t" style="left:447px;top:289.5px;width:31px;height:8px;line-height:8px;text-align:center;font-size:5.8px;color:#d0d8ff;">TUNE</div>
<div class="t" style="left:476px;top:289.5px;width:31px;height:8px;line-height:8px;text-align:center;font-size:5.8px;color:#d0d8ff;">LOAD</div>
<div class="t" style="left:447px;top:300px;width:31px;height:8px;line-height:8px;text-align:center;font-size:7px;color:#fff;font-weight:bold;">?</div>
<div class="t" style="left:476px;top:300px;width:31px;height:8px;line-height:8px;text-align:center;font-size:7px;color:#fff;font-weight:bold;">?</div>
<div class="t" style="left:446px;top:311px;width:31px;height:8px;line-height:8px;text-align:center;font-size:5.8px;color:#d0d8ff;">USR1</div>
<div class="t" style="left:476px;top:311px;width:31px;height:8px;line-height:8px;text-align:center;font-size:5.8px;color:#d0d8ff;">USR2</div>
<div class="t" style="left:447px;top:321px;width:31px;height:8px;line-height:8px;text-align:center;font-size:7px;color:#fff;font-weight:bold;">?</div>
<div class="t" style="left:476px;top:321px;width:31px;height:8px;line-height:8px;text-align:center;font-size:7px;color:#fff;font-weight:bold;">?</div>
<div style="left:389px;top:339px;width:12px;height:14px;background:linear-gradient(#fbfbfb,#e9e9e9);border-top:1px solid #fff;border-left:1px solid #fff;border-right:1px solid #8c8c8c;border-bottom:1px solid #8c8c8c;box-shadow:0.5px 0.5px 0 #c8c8c8;box-sizing:border-box;"></div>
<svg style="position:absolute;left:390.5px;top:342px" width="8" height="8" viewBox="0 0 16 16"><path d="M4.5 5.5 A3.5 3.5 0 1 1 10 8.5 L8 10 L8 12" fill="none" stroke="#222" stroke-width="3.2"/><path d="M4.5 5.5 A3.5 3.5 0 1 1 10 8.5 L8 10 L8 12" fill="none" stroke="#f0e020" stroke-width="1.6"/><rect x="6.5" y="13" width="3" height="2.5" fill="#222"/></svg>
<div style="left:403px;top:339px;width:14.5px;height:14px;background:linear-gradient(#fbfbfb,#e9e9e9);border-top:1px solid #fff;border-left:1px solid #fff;border-right:1px solid #8c8c8c;border-bottom:1px solid #8c8c8c;box-shadow:0.5px 0.5px 0 #c8c8c8;box-sizing:border-box;"></div>
<svg style="position:absolute;left:406px;top:342px" width="8" height="8" viewBox="0 0 16 16"><rect x="1" y="2" width="14" height="12" fill="#ddd" stroke="#333" stroke-width="1.5"/><rect x="1" y="2" width="14" height="3" fill="#555"/><rect x="4" y="7" width="8" height="2" fill="#777"/></svg>
<div style="left:420px;top:339px;width:10px;height:14px;background:linear-gradient(#fbfbfb,#e9e9e9);border-top:1px solid #fff;border-left:1px solid #fff;border-right:1px solid #8c8c8c;border-bottom:1px solid #8c8c8c;box-shadow:0.5px 0.5px 0 #c8c8c8;box-sizing:border-box;"></div>
<div class="t" style="left:420px;top:339.4px;width:10px;height:14px;line-height:14px;text-align:center;font-size:6px;color:#000;">w</div>
<div style="left:430px;top:339px;width:10px;height:14px;background:linear-gradient(#fbfbfb,#e9e9e9);border-top:1px solid #fff;border-left:1px solid #fff;border-right:1px solid #8c8c8c;border-bottom:1px solid #8c8c8c;box-shadow:0.5px 0.5px 0 #c8c8c8;box-sizing:border-box;"></div>
<div class="t" style="left:430px;top:339.4px;width:10px;height:14px;line-height:14px;text-align:center;font-size:6px;color:#000;">W</div>
<div style="left:440px;top:339px;width:10px;height:14px;background:linear-gradient(#fbfbfb,#e9e9e9);border-top:1px solid #fff;border-left:1px solid #fff;border-right:1px solid #8c8c8c;border-bottom:1px solid #8c8c8c;box-shadow:0.5px 0.5px 0 #c8c8c8;box-sizing:border-box;"></div>
<div class="t" style="left:440px;top:339.4px;width:10px;height:14px;line-height:14px;text-align:center;font-size:6px;color:#000;">T</div>
<div style="left:452px;top:338.5px;width:55.5px;height:15.5px;border:1px solid #444;"></div>
<div style="left:453px;top:339.5px;width:53.5px;height:13.5px;background:linear-gradient(#fbfbfb,#e9e9e9);border-top:1px solid #fff;border-left:1px solid #fff;border-right:1px solid #8c8c8c;border-bottom:1px solid #8c8c8c;box-shadow:0.5px 0.5px 0 #c8c8c8;box-sizing:border-box;"></div>
<div class="t" style="left:453px;top:339.9px;width:53.5px;height:13.5px;line-height:13.5px;text-align:center;font-size:6px;color:#000;">OK</div>
<div style="left:386.1px;top:362.2px;width:127.5px;height:129.2px;border:0.8px solid #646c76;border-radius:3px 3px 1px 1px;background:linear-gradient(#dce6f0 0px,#dce6f0 0.8px,#b7c7d8 1.8px,#c4d2e1 6px,#d6e2ee 13px,#dae5f1 100%);box-shadow:0.5px 0.5px 1px rgba(0,0,0,.25);"></div>
<div style="left:388.70000000000005px;top:375.59999999999997px;width:122.3px;height:113.19999999999999px;background:#f0f0f0;border:0.5px solid #c8d4e0;"></div>
<svg style="position:absolute;left:389.6px;top:366.2px" width="8.5" height="8.5" viewBox="0 0 16 16"><path d="M1 2 L15 2 L15 10 L8 15 L1 10 Z" fill="#505050" stroke="#222"/><rect x="2" y="3" width="12" height="3" fill="#b02020"/><rect x="4" y="8" width="3" height="3" fill="#20c030"/><rect x="9" y="8" width="3" height="3" fill="#e03030"/></svg>
<div class="t" style="left:398.90000000000003px;top:366.8px;height:9px;line-height:9px;font-size:5.6px;color:#1a2a3a;white-space:nowrap">TRX-Synchro</div>
<div style="left:464.6px;top:362.2px;width:45.5px;height:8.5px;background:linear-gradient(#d4dfeb,#c2d0df);border:0.8px solid #8a9aac;border-top:none;border-radius:0 0 2px 2px;"></div>
<div style="left:476.6px;top:362.2px;width:0.8px;height:8.5px;background:#9aaabb;"></div>
<div style="left:489.1px;top:362.2px;width:0.8px;height:8.5px;background:#9aaabb;"></div>
<div style="left:467.6px;top:366.0px;width:6px;height:2.2px;background:#fff;border:0.7px solid #555;border-radius:1px;"></div>
<div style="left:480.1px;top:364.7px;width:5.5px;height:4px;border:0.8px solid #c8d0d8;background:#dde4ea;"></div>
<svg style="position:absolute;left:496.3px;top:364.2px" width="5" height="4.5" viewBox="0 0 5 4.5"><path d="M0.5 0.5 L4.5 4 M4.5 0.5 L0.5 4" stroke="#333" stroke-width="1.5"/><path d="M0.5 0.5 L4.5 4 M4.5 0.5 L0.5 4" stroke="#ddd" stroke-width="0.5"/></svg>
<div style="left:391px;top:378.5px;width:118.5px;height:21.5px;border:1px solid #d5d9dd;border-radius:2px;box-sizing:border-box;"></div>
<div class="t" style="left:394px;top:374.5px;height:8px;line-height:8px;padding:0 1px;background:#f0f0f0;font-size:6px;color:#000">IC-7800</div>
<div style="left:394.8px;top:383.2px;width:108.8px;height:13.6px;background:#0000f8;"></div>
<div class="t" style="left:394.8px;top:383.2px;width:108.8px;height:13.6px;line-height:13.6px;text-align:center;font-size:9px;font-weight:bold;color:#fff;">28.395.00 USB</div>
<div style="left:391px;top:404px;width:118.5px;height:39px;border:1px solid #d5d9dd;border-radius:2px;box-sizing:border-box;"></div>
<div class="t" style="left:394px;top:400px;height:8px;line-height:8px;padding:0 1px;background:#f0f0f0;font-size:6px;color:#000">Alpha</div>
<div style="left:394.8px;top:407px;width:20.7px;height:8.5px;background:#0000f8;border:1px solid #fff;"></div>
<div class="t" style="left:394.8px;top:407px;width:20.7px;height:8.5px;line-height:8.5px;text-align:center;font-size:6px;color:#fff;">10m</div>
<div style="left:419px;top:406.5px;width:43.5px;height:8.5px;background:#888;border:1px solid #555;"></div>
<div style="left:419.5px;top:407px;width:7.5px;height:7.5px;background:#10e010;"></div>
<div style="left:426.7px;top:407px;width:0.8px;height:7.5px;background:#555;"></div>
<div style="left:433.9px;top:407px;width:0.8px;height:7.5px;background:#555;"></div>
<div style="left:441.1px;top:407px;width:0.8px;height:7.5px;background:#555;"></div>
<div style="left:448.3px;top:407px;width:0.8px;height:7.5px;background:#555;"></div>
<div style="left:455.5px;top:407px;width:0.8px;height:7.5px;background:#555;"></div>
<div style="left:465px;top:406.5px;width:19.5px;height:9.5px;background:linear-gradient(#fbfbfb,#e9e9e9);border-top:1px solid #fff;border-left:1px solid #fff;border-right:1px solid #8c8c8c;border-bottom:1px solid #8c8c8c;box-shadow:0.5px 0.5px 0 #c8c8c8;box-sizing:border-box;"></div>
<div class="t" style="left:465px;top:406.9px;width:19.5px;height:9.5px;line-height:9.5px;text-align:center;font-size:5.8px;color:#000;">DEF</div>
<div style="left:486px;top:406.5px;width:19.5px;height:9.5px;background:linear-gradient(#fbfbfb,#e9e9e9);border-top:1px solid #fff;border-left:1px solid #fff;border-right:1px solid #8c8c8c;border-bottom:1px solid #8c8c8c;box-shadow:0.5px 0.5px 0 #c8c8c8;box-sizing:border-box;"></div>
<div class="t" style="left:486px;top:406.9px;width:19.5px;height:9.5px;line-height:9.5px;text-align:center;font-size:5.8px;color:#000;">ENT</div>
<div style="left:394px;top:416px;width:20px;height:12px;background:linear-gradient(#fbfbfb,#e9e9e9);border-top:1px solid #fff;border-left:1px solid #fff;border-right:1px solid #8c8c8c;border-bottom:1px solid #8c8c8c;box-shadow:0.5px 0.5px 0 #c8c8c8;box-sizing:border-box;"></div>
<div class="t" style="left:394px;top:416px;width:20px;height:12px;line-height:12px;text-align:center;font-size:9px;color:#000;">🡄</div>
<div class="t" style="left:418px;top:416px;width:5px;height:12px;line-height:12px;text-align:left;font-size:5px;color:#b07020;">T</div>
<div style="left:415.5px;top:416px;width:0.8px;height:12px;background:#c0c0c0;"></div>
<div style="left:423px;top:416px;width:19.5px;height:12px;background:linear-gradient(#fbfbfb,#e9e9e9);border-top:1px solid #fff;border-left:1px solid #fff;border-right:1px solid #8c8c8c;border-bottom:1px solid #8c8c8c;box-shadow:0.5px 0.5px 0 #c8c8c8;box-sizing:border-box;"></div>
<div class="t" style="left:423px;top:416px;width:19.5px;height:12px;line-height:12px;text-align:center;font-size:9px;color:#000;">🡆</div>
<div style="left:444px;top:419px;width:17.5px;height:8px;background:#0000f8;border:0.6px solid #888;"></div>
<div style="left:394px;top:429.5px;width:20px;height:12px;background:linear-gradient(#fbfbfb,#e9e9e9);border-top:1px solid #fff;border-left:1px solid #fff;border-right:1px solid #8c8c8c;border-bottom:1px solid #8c8c8c;box-shadow:0.5px 0.5px 0 #c8c8c8;box-sizing:border-box;"></div>
<div class="t" style="left:394px;top:429.5px;width:20px;height:12px;line-height:12px;text-align:center;font-size:9px;color:#000;">🡄</div>
<div class="t" style="left:418px;top:429.5px;width:5px;height:12px;line-height:12px;text-align:left;font-size:5px;color:#b07020;">L</div>
<div style="left:415.5px;top:429.5px;width:0.8px;height:12px;background:#c0c0c0;"></div>
<div style="left:423px;top:429.5px;width:19.5px;height:12px;background:linear-gradient(#fbfbfb,#e9e9e9);border-top:1px solid #fff;border-left:1px solid #fff;border-right:1px solid #8c8c8c;border-bottom:1px solid #8c8c8c;box-shadow:0.5px 0.5px 0 #c8c8c8;box-sizing:border-box;"></div>
<div class="t" style="left:423px;top:429.5px;width:19.5px;height:12px;line-height:12px;text-align:center;font-size:9px;color:#000;">🡆</div>
<div style="left:444px;top:432.5px;width:17.5px;height:8px;background:#0000f8;border:0.6px solid #888;"></div>
<div style="left:465px;top:419.5px;width:40.5px;height:10px;background:#fff;border:1px solid #a9a9a9;border-bottom-color:#dcdcdc;border-right-color:#dcdcdc;box-sizing:border-box;background:#fff;"></div>
<div style="left:496.5px;top:420.5px;width:8px;height:8px;background:linear-gradient(#fff,#e4e4e4);border-left:1px solid #d0d0d0;box-sizing:border-box;"></div>
<div style="left:499.0px;top:423.7px;width:0;height:0;border-left:1.5px solid transparent;border-right:1.5px solid transparent;border-top:2px solid #111"></div>
<div class="t" style="left:467px;top:419.5px;width:30.5px;height:10px;line-height:10px;text-align:left;font-size:5.8px;color:#000;">Default</div>
<div style="left:465px;top:429.5px;width:18.5px;height:12px;background:linear-gradient(#fbfbfb,#e9e9e9);border-top:1px solid #fff;border-left:1px solid #fff;border-right:1px solid #8c8c8c;border-bottom:1px solid #8c8c8c;box-shadow:0.5px 0.5px 0 #c8c8c8;box-sizing:border-box;"></div>
<div class="t" style="left:465px;top:429.9px;width:18.5px;height:12px;line-height:12px;text-align:center;font-size:5.8px;color:#000;">OFF</div>
<div style="left:486px;top:429.5px;width:19.5px;height:12px;background:linear-gradient(#fbfbfb,#e9e9e9);border-top:1px solid #fff;border-left:1px solid #fff;border-right:1px solid #8c8c8c;border-bottom:1px solid #8c8c8c;box-shadow:0.5px 0.5px 0 #c8c8c8;box-sizing:border-box;"></div>
<div class="t" style="left:486px;top:429.9px;width:19.5px;height:12px;line-height:12px;text-align:center;font-size:5.8px;color:#000;">ON</div>
<div style="left:391px;top:447px;width:118.5px;height:25.5px;border:1px solid #d5d9dd;border-radius:2px;box-sizing:border-box;"></div>
<div class="t" style="left:394px;top:443px;height:8px;line-height:8px;padding:0 1px;background:#f0f0f0;font-size:5.8px;color:#000">Control</div>
<div class="t" style="left:393px;top:452.5px;width:30px;height:6px;line-height:6px;text-align:left;font-size:5.8px;color:#000;">Protocol</div>
<div style="left:393px;top:460.5px;width:65.5px;height:10.5px;background:#fff;border:1px solid #a9a9a9;border-bottom-color:#dcdcdc;border-right-color:#dcdcdc;box-sizing:border-box;background:#fff;"></div>
<div style="left:449.5px;top:461.5px;width:8px;height:8.5px;background:linear-gradient(#fff,#e4e4e4);border-left:1px solid #d0d0d0;box-sizing:border-box;"></div>
<div style="left:452.0px;top:464.95px;width:0;height:0;border-left:1.5px solid transparent;border-right:1.5px solid transparent;border-top:2px solid #111"></div>
<div class="t" style="left:395px;top:460.5px;width:55.5px;height:10.5px;line-height:10.5px;text-align:left;font-size:5.6px;color:#b0b0b0;">Alpha Amp</div>
<div class="t" style="left:462px;top:452.5px;width:30px;height:6px;line-height:6px;text-align:left;font-size:5.8px;color:#000;">Com Port</div>
<div style="left:462px;top:460.5px;width:42.5px;height:10.5px;background:#fff;border:1px solid #a9a9a9;border-bottom-color:#dcdcdc;border-right-color:#dcdcdc;box-sizing:border-box;background:#fff;"></div>
<div style="left:495.5px;top:461.5px;width:8px;height:8.5px;background:linear-gradient(#fff,#e4e4e4);border-left:1px solid #d0d0d0;box-sizing:border-box;"></div>
<div style="left:498.0px;top:464.95px;width:0;height:0;border-left:1.5px solid transparent;border-right:1.5px solid transparent;border-top:2px solid #111"></div>
<div class="t" style="left:464px;top:460.5px;width:32.5px;height:10.5px;line-height:10.5px;text-align:left;font-size:5.6px;color:#b0b0b0;">Com 9</div>
<div style="left:391px;top:475.5px;width:15.5px;height:11px;background:linear-gradient(#fbfbfb,#e9e9e9);border-top:1px solid #fff;border-left:1px solid #fff;border-right:1px solid #8c8c8c;border-bottom:1px solid #8c8c8c;box-shadow:0.5px 0.5px 0 #c8c8c8;box-sizing:border-box;"></div>
<svg style="position:absolute;left:394.5px;top:477px" width="8" height="8" viewBox="0 0 16 16"><path d="M4.5 5.5 A3.5 3.5 0 1 1 10 8.5 L8 10 L8 12" fill="none" stroke="#222" stroke-width="3.2"/><path d="M4.5 5.5 A3.5 3.5 0 1 1 10 8.5 L8 10 L8 12" fill="none" stroke="#f0e020" stroke-width="1.6"/><rect x="6.5" y="13" width="3" height="2.5" fill="#222"/></svg>
<div style="left:409px;top:475.5px;width:32.5px;height:11px;background:#f6f6f6;border-top:1px solid #9a9a9a;border-left:1px solid #9a9a9a;border-right:1px solid #fff;border-bottom:1px solid #fff;box-sizing:border-box;"></div>
<div class="t" style="left:409px;top:475.5px;width:32.5px;height:11px;line-height:11px;text-align:center;font-size:5.8px;color:#000;">Open</div>
<div style="left:443px;top:475.5px;width:32.5px;height:11px;background:#f6f6f6;border-top:1px solid #9a9a9a;border-left:1px solid #9a9a9a;border-right:1px solid #fff;border-bottom:1px solid #fff;box-sizing:border-box;"></div>
<div class="t" style="left:443px;top:475.5px;width:32.5px;height:11px;line-height:11px;text-align:center;font-size:5.8px;color:#000;">On top</div>
<div style="left:477px;top:475.5px;width:32.5px;height:11px;background:linear-gradient(#fbfbfb,#e9e9e9);border-top:1px solid #fff;border-left:1px solid #fff;border-right:1px solid #8c8c8c;border-bottom:1px solid #8c8c8c;box-shadow:0.5px 0.5px 0 #c8c8c8;box-sizing:border-box;"></div>
<div class="t" style="left:477px;top:475.9px;width:32.5px;height:11px;line-height:11px;text-align:center;font-size:5.8px;color:#000;">Exit</div>
</body></html>
